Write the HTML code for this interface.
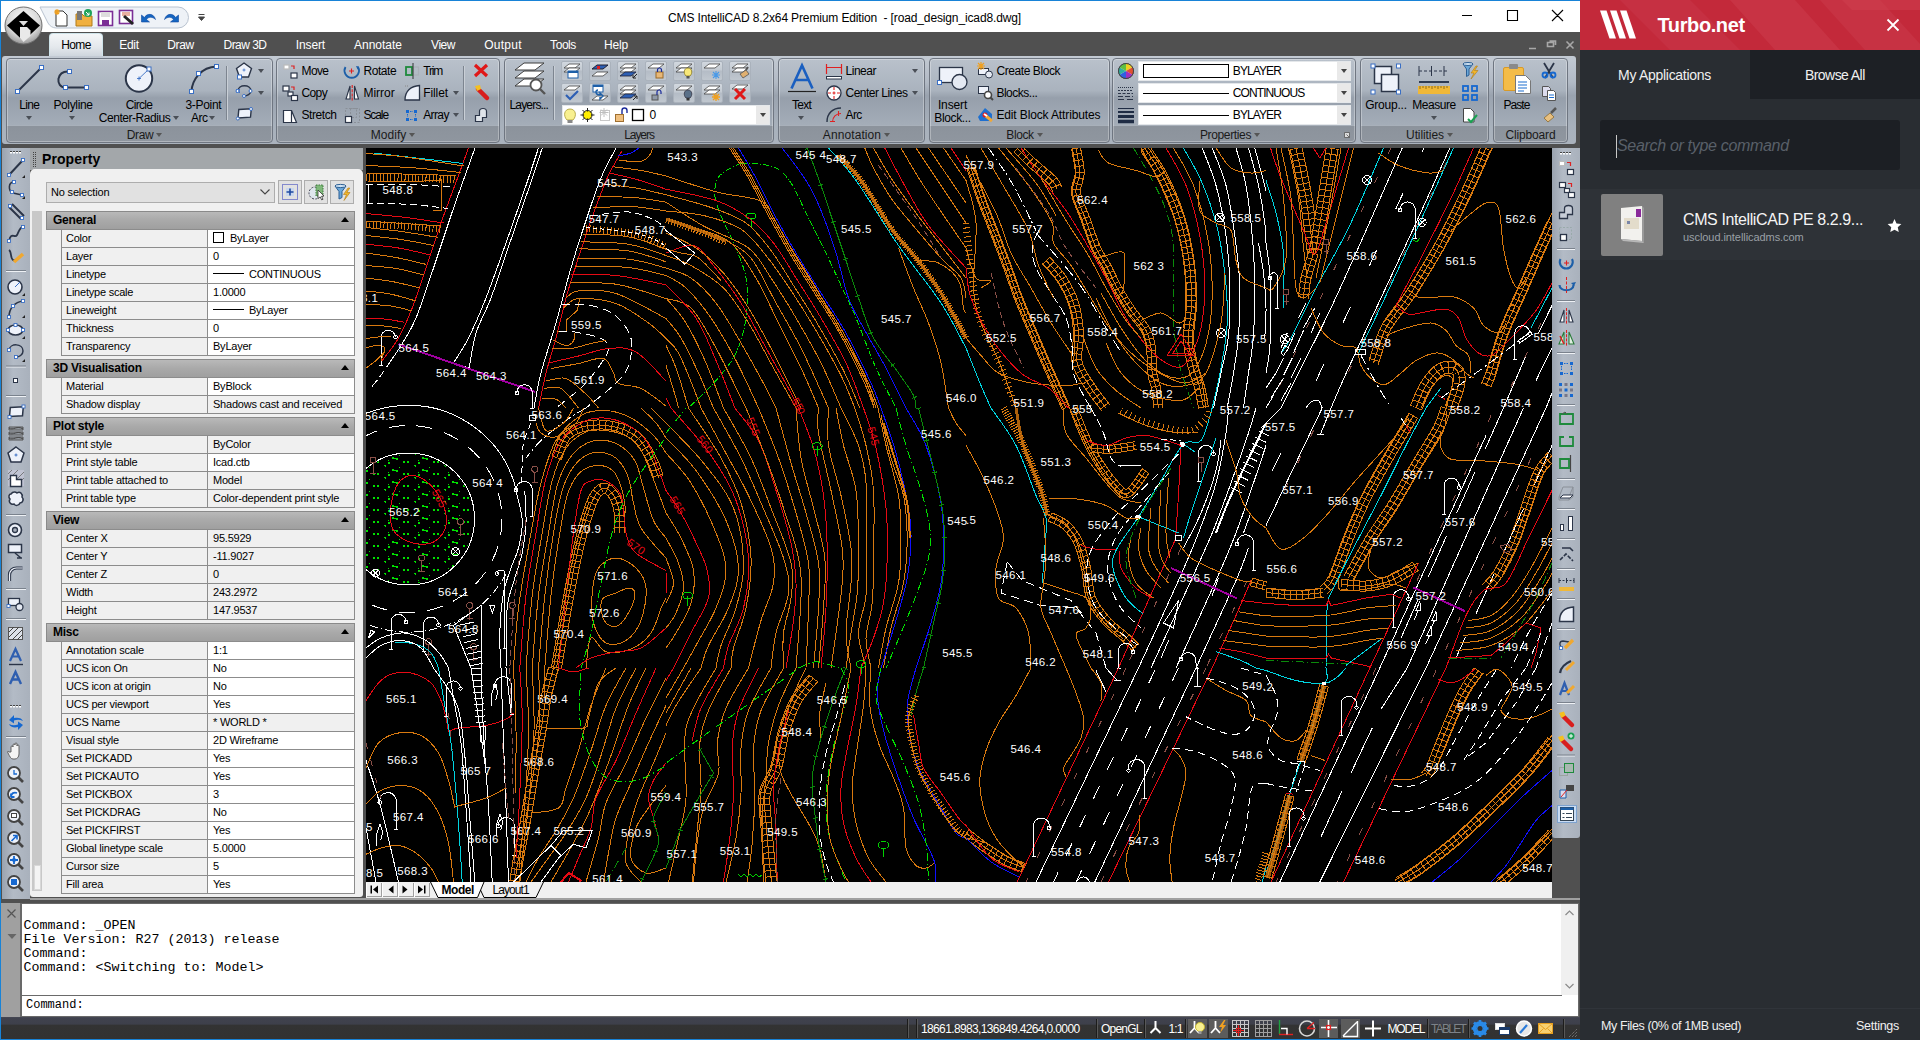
<!DOCTYPE html>
<html><head><meta charset="utf-8"><title>CMS IntelliCAD</title>
<style>
*{box-sizing:border-box;margin:0;padding:0}
html,body{width:1920px;height:1040px;overflow:hidden;background:#505050;font-family:"Liberation Sans",sans-serif;font-size:12px;color:#000}
div,span{position:absolute}
svg{position:absolute;overflow:visible}
#app{left:0;top:0;width:1580px;height:1040px;background:#505050;overflow:hidden}
#title{left:0;top:0;width:1580px;height:32px;background:#fff}
#title .t{left:668px;top:11px;font-size:12px;white-space:pre;line-height:14px;letter-spacing:-0.133px}
#menubar{left:0;top:32px;width:1580px;height:24px;background:#505050}
#menubar span{top:6px;color:#fff;font-size:12px;transform:translateX(-50%);white-space:nowrap;line-height:14px}
#hometab{left:49px;top:33px;width:54px;height:23px;border-radius:4px 4px 0 0;background:linear-gradient(#f4f6f8,#e4e8ec 60%,#cfd6dd);border:1px solid #cfe4ea;border-bottom:none}
#ribbon{left:2px;top:56px;width:1574px;height:88px;border-radius:3px;background:linear-gradient(#c3cad3 0%,#b2bac5 30%,#9aa3af 45%,#a8b1bc 80%,#abb3bd 100%)}
.grp{top:58px;height:85px;border:1px solid #6f7681;border-radius:4px;background:linear-gradient(#b9c1cb 0%,#aab3be 38%,#969fab 47%,#a4adb8 79%,#a9b1bb 80.5%,#8c939c 81%,#8f969f 100%);box-shadow:inset 0 0 0 1px rgba(255,255,255,.3)}
.grp .gl{left:0;right:0;top:69px;height:15px;text-align:center;font-size:12px;color:#1a1a1a;line-height:15px;white-space:nowrap}
.gl i{display:inline-block;width:0;height:0;border:3.5px solid transparent;border-top:4px solid #555;border-bottom:none;margin-left:3px;margin-right:-10px;vertical-align:2px}
.rt{font-size:12px;color:#000;white-space:nowrap;line-height:14px}
.rtc{font-size:12px;color:#000;white-space:nowrap;line-height:14px;transform:translateX(-50%);text-align:center}
.dd{width:0;height:0;border:3.5px solid transparent;border-top:4px solid #4a4f57;border-bottom:none}
</style></head><body>
<div id="app">
<div id="title"><div class="t">CMS IntelliCAD 8.2x64 Premium Edition  - [road_design_icad8.dwg]</div></div>
<div id="menubar"><span style="left:129px;letter-spacing:-0.322px;">Edit</span><span style="left:180.6px;letter-spacing:-0.329px;">Draw</span><span style="left:245px;letter-spacing:-0.527px;">Draw 3D</span><span style="left:310.4px;letter-spacing:-0.136px;">Insert</span><span style="left:378px;letter-spacing:-0.006px;">Annotate</span><span style="left:443px;letter-spacing:-0.499px;">View</span><span style="left:503px;letter-spacing:0.245px;">Output</span><span style="left:563px;letter-spacing:-0.443px;">Tools</span><span style="left:616px;letter-spacing:-0.222px;">Help</span></div>
<div id="hometab"></div><div class="rtc" style="left:76px;top:38px;letter-spacing:-0.679px;">Home</div>
<div id="ribbon"></div>
<div class="grp" style="left:6px;width:267px"><div class="gl"><b style="font-weight:normal;letter-spacing:-0.329px;">Draw</b><i></i></div></div>
<div class="grp" style="left:276px;width:224px"><div class="gl"><b style="font-weight:normal;letter-spacing:0.059px;">Modify</b><i></i></div></div>
<div class="grp" style="left:504px;width:270px"><div class="gl"><b style="font-weight:normal;letter-spacing:-1.055px;">Layers</b></div></div>
<div class="grp" style="left:778px;width:147px"><div class="gl"><b style="font-weight:normal;letter-spacing:0.091px;">Annotation</b><i></i></div></div>
<div class="grp" style="left:929px;width:181px"><div class="gl"><b style="font-weight:normal;letter-spacing:-0.389px;">Block</b><i></i></div></div>
<div class="grp" style="left:1112px;width:244px"><div class="gl" style="left:-18px"><b style="font-weight:normal;letter-spacing:-0.350px;">Properties</b><i></i></div></div>
<div class="grp" style="left:1360px;width:129px"><div class="gl"><b style="font-weight:normal;letter-spacing:-0.086px;">Utilities</b><i></i></div></div>
<div class="grp" style="left:1493px;width:75px"><div class="gl"><b style="font-weight:normal;letter-spacing:-0.153px;">Clipboard</b></div></div>
<div class="rtc" style="left:29.2px;top:98px;letter-spacing:-0.672px;">Line</div>
<div class="dd" style="left:26.0px;top:116px"></div>
<div class="rtc" style="left:73px;top:98px;letter-spacing:-0.354px;">Polyline</div>
<div class="dd" style="left:69.0px;top:116px"></div>
<div class="rtc" style="left:139px;top:98px;letter-spacing:-0.712px;">Circle</div>
<div class="rtc" style="left:134.5px;top:111px;letter-spacing:-0.460px;">Center-Radius</div>
<div class="dd" style="left:173.0px;top:116px"></div>
<div class="rtc" style="left:203.4px;top:98px;letter-spacing:-0.290px;">3-Point</div>
<div class="rtc" style="left:199.2px;top:111px;letter-spacing:-0.567px;">Arc</div>
<div class="dd" style="left:209.0px;top:116px"></div>
<div class="dd" style="left:258.0px;top:69px"></div>
<div class="dd" style="left:258.0px;top:91px"></div>
<div class="rt" style="left:301.5px;top:64px;letter-spacing:-0.611px;">Move</div>
<div class="rt" style="left:363.4px;top:64px;letter-spacing:-0.410px;">Rotate</div>
<div class="rt" style="left:423.2px;top:64px;letter-spacing:-1.137px;">Trim</div>
<div class="rt" style="left:301.5px;top:86px;letter-spacing:-0.629px;">Copy</div>
<div class="rt" style="left:363.4px;top:86px;letter-spacing:0.012px;">Mirror</div>
<div class="rt" style="left:423.2px;top:86px;letter-spacing:-0.091px;">Fillet</div>
<div class="rt" style="left:301.5px;top:108px;letter-spacing:-0.431px;">Stretch</div>
<div class="rt" style="left:363.4px;top:108px;letter-spacing:-1.086px;">Scale</div>
<div class="rt" style="left:423.2px;top:108px;letter-spacing:-0.614px;">Array</div>
<div class="dd" style="left:453.0px;top:91px"></div>
<div class="dd" style="left:453.0px;top:113px"></div>
<div class="rtc" style="left:528.8px;top:98px;letter-spacing:-0.826px;">Layers...</div>
<div class="rtc" style="left:801.5px;top:98px;letter-spacing:-0.729px;">Text</div>
<div class="dd" style="left:798.0px;top:116px"></div>
<div class="rt" style="left:845.5px;top:64px;letter-spacing:-0.477px;">Linear</div>
<div class="rt" style="left:845.5px;top:86px;letter-spacing:-0.504px;">Center Lines</div>
<div class="rt" style="left:845.5px;top:108px;letter-spacing:-0.567px;">Arc</div>
<div class="dd" style="left:912.0px;top:69px"></div>
<div class="dd" style="left:912.0px;top:91px"></div>
<div class="rtc" style="left:952.5px;top:98px;letter-spacing:-0.136px;">Insert</div>
<div class="rtc" style="left:952.5px;top:111px;letter-spacing:-0.382px;">Block...</div>
<div class="rt" style="left:996.4px;top:64px;letter-spacing:-0.417px;">Create Block</div>
<div class="rt" style="left:996.4px;top:86px;letter-spacing:-0.484px;">Blocks...</div>
<div class="rt" style="left:996.4px;top:108px;letter-spacing:-0.129px;">Edit Block Attributes</div>
<div class="rtc" style="left:1386px;top:98px;letter-spacing:-0.220px;">Group...</div>
<div class="rtc" style="left:1434px;top:98px;letter-spacing:-0.484px;">Measure</div>
<div class="dd" style="left:1430.5px;top:116px"></div>
<div class="rtc" style="left:1516.4px;top:98px;letter-spacing:-0.938px;">Paste</div>
<div style="left:1138px;top:61px;width:213px;height:20px;background:#fff;border:1px solid #e4e7ea"></div><div style="left:1337px;top:62px;width:13px;height:18px;background:#e9e9e9"></div><div class="dd" style="left:1340.5px;top:69px;border-top-color:#444"></div>
<div class="rt" style="left:1232.8px;top:64px;letter-spacing:-0.896px;">BYLAYER</div>
<div style="left:1138px;top:83px;width:213px;height:20px;background:#fff;border:1px solid #e4e7ea"></div><div style="left:1337px;top:84px;width:13px;height:18px;background:#e9e9e9"></div><div class="dd" style="left:1340.5px;top:91px;border-top-color:#444"></div>
<div class="rt" style="left:1232.8px;top:86px;letter-spacing:-0.907px;">CONTINUOUS</div>
<div style="left:1138px;top:105px;width:213px;height:20px;background:#fff;border:1px solid #e4e7ea"></div><div style="left:1337px;top:106px;width:13px;height:18px;background:#e9e9e9"></div><div class="dd" style="left:1340.5px;top:113px;border-top-color:#444"></div>
<div class="rt" style="left:1232.8px;top:108px;letter-spacing:-0.896px;">BYLAYER</div>
<div style="left:1143px;top:64px;width:86px;height:14px;border:1px solid #000;background:#fff"></div><div style="left:1143px;top:93px;width:86px;height:1px;background:#000"></div><div style="left:1143px;top:115px;width:86px;height:1px;background:#000"></div>
<div style="left:562px;top:105px;width:208px;height:20px;background:#fff;border:1px solid #e4e7ea"></div><div style="left:756px;top:106px;width:13px;height:18px;background:#e9e9e9"></div><div class="dd" style="left:759.5px;top:113px;border-top-color:#444"></div><div class="rt" style="left:649.5px;top:108px">0</div>
<div style="left:561px;top:61px;width:22px;height:20px;border-radius:2px;background:linear-gradient(#d2d8df,#c3cad2 45%,#b4bcc6 50%,#c0c7cf);border:1px solid #aab2bc"></div><div style="left:589px;top:61px;width:22px;height:20px;border-radius:2px;background:linear-gradient(#d2d8df,#c3cad2 45%,#b4bcc6 50%,#c0c7cf);border:1px solid #aab2bc"></div><div style="left:617px;top:61px;width:22px;height:20px;border-radius:2px;background:linear-gradient(#d2d8df,#c3cad2 45%,#b4bcc6 50%,#c0c7cf);border:1px solid #aab2bc"></div><div style="left:645px;top:61px;width:22px;height:20px;border-radius:2px;background:linear-gradient(#d2d8df,#c3cad2 45%,#b4bcc6 50%,#c0c7cf);border:1px solid #aab2bc"></div><div style="left:673px;top:61px;width:22px;height:20px;border-radius:2px;background:linear-gradient(#d2d8df,#c3cad2 45%,#b4bcc6 50%,#c0c7cf);border:1px solid #aab2bc"></div><div style="left:701px;top:61px;width:22px;height:20px;border-radius:2px;background:linear-gradient(#d2d8df,#c3cad2 45%,#b4bcc6 50%,#c0c7cf);border:1px solid #aab2bc"></div><div style="left:729px;top:61px;width:22px;height:20px;border-radius:2px;background:linear-gradient(#d2d8df,#c3cad2 45%,#b4bcc6 50%,#c0c7cf);border:1px solid #aab2bc"></div><div style="left:561px;top:83px;width:22px;height:20px;border-radius:2px;background:linear-gradient(#d2d8df,#c3cad2 45%,#b4bcc6 50%,#c0c7cf);border:1px solid #aab2bc"></div><div style="left:589px;top:83px;width:22px;height:20px;border-radius:2px;background:linear-gradient(#d2d8df,#c3cad2 45%,#b4bcc6 50%,#c0c7cf);border:1px solid #aab2bc"></div><div style="left:617px;top:83px;width:22px;height:20px;border-radius:2px;background:linear-gradient(#d2d8df,#c3cad2 45%,#b4bcc6 50%,#c0c7cf);border:1px solid #aab2bc"></div><div style="left:645px;top:83px;width:22px;height:20px;border-radius:2px;background:linear-gradient(#d2d8df,#c3cad2 45%,#b4bcc6 50%,#c0c7cf);border:1px solid #aab2bc"></div><div style="left:673px;top:83px;width:22px;height:20px;border-radius:2px;background:linear-gradient(#d2d8df,#c3cad2 45%,#b4bcc6 50%,#c0c7cf);border:1px solid #aab2bc"></div><div style="left:701px;top:83px;width:22px;height:20px;border-radius:2px;background:linear-gradient(#d2d8df,#c3cad2 45%,#b4bcc6 50%,#c0c7cf);border:1px solid #aab2bc"></div><div style="left:729px;top:83px;width:22px;height:20px;border-radius:2px;background:linear-gradient(#d2d8df,#c3cad2 45%,#b4bcc6 50%,#c0c7cf);border:1px solid #aab2bc"></div>
<svg style="left:0;top:0" width="1580" height="146" viewBox="0 0 1580 146" id="ribsvg">
<defs>
<radialGradient id="orb" cx=".5" cy=".35" r=".7"><stop offset="0" stop-color="#fff"/><stop offset=".6" stop-color="#d8d8d8"/><stop offset="1" stop-color="#8a8a8a"/></radialGradient>
<g id="sq"><rect x="-2" y="-2" width="4" height="4" fill="#fff" stroke="#3a6fc4" stroke-width="1"/></g>
<g id="ly"><path d="M-8 2l5-4h11l-5 4z" fill="#fff" stroke="#444" stroke-width=".8"/></g>
</defs>
<!-- app orb -->
<circle cx="23.5" cy="25.5" r="18.5" fill="url(#orb)" stroke="#6e6e6e"/>
<polygon points="23.5,11 40,25.5 23.5,41 7,25.5" fill="#000"/><polygon points="20,27 27,27 30.5,30.5 30.5,36 23.5,42 20,38" fill="#e9e9e9"/><polygon points="19,21 28,21 23.5,26" fill="#e0e0e0"/>
<!-- quick access pill -->
<path d="M40 7h138a10.500 10.500 0 0 1 0 21H56a10 10 0 0 1-8-5z" fill="#eef2f7" stroke="#b9c3d0"/>
<g><path d="M56 11h7l4 4v11H56z" fill="#fff" stroke="#333"/><path d="M57 9v6M54 12h6M55 10l4 4M59 10l-4 4" stroke="#f0a020" stroke-width="1.2"/></g>
<g><path d="M76 14h6l2 2h8v10H76z" fill="#f0b040" stroke="#b07a18"/><rect x="77" y="11" width="5" height="9" fill="#777"/><circle cx="88" cy="13" r="4" fill="#1fa35a"/><path d="M86 12l3 3M89 12.500v2.500h-2.500" stroke="#fff" stroke-width="1" fill="none"/></g>
<g><rect x="98.500" y="11.500" width="14" height="14" fill="#fff" stroke="#7b2f96" stroke-width="1.600"/><rect x="101" y="12" width="9" height="5" fill="#ddd"/><rect x="102" y="20" width="7" height="5" fill="#7b2f96"/></g>
<g><rect x="119.500" y="10.500" width="13" height="13" fill="#fff" stroke="#7b2f96" stroke-width="1.600"/><rect x="122" y="12" width="8" height="4" fill="#e8b0a0"/><path d="M124 16l9 8" stroke="#222" stroke-width="3"/></g>
<path d="M142 24v-7l3 2.500c2-4 9-5 11 2-3-3-7-3-9 0l3 2.500z" fill="#1565c0" stroke="#0d47a1" stroke-width=".6" transform="translate(-0.5,-2)"/>
<path d="M178 24v-7l-3 2.500c-2-4-9-5-11 2 3-3 7-3 9 0l-3 2.500z" fill="#1565c0" stroke="#0d47a1" stroke-width=".6" transform="translate(0.5,-2)"/>
<path d="M198.500 14.500h6M198.500 17h6l-3 3.500z" stroke="#444" fill="#444" stroke-width="1"/>
<!-- window controls -->
<path d="M1462 15.500h10M1507.500 10.500h10v10h-10zM1552 10l11 11M1563 10l-11 11" stroke="#000" stroke-width="1.100" fill="none"/>
<path d="M1529 48.500h7M1547.500 42.500h6v4h-6zM1549.500 41h6v4M1566.500 41.500l7 7M1573.500 41.500l-7 7" stroke="#a8a8a8" stroke-width="1.600" fill="none"/>
<!-- Draw group -->
<path d="M17.500 91.500L41.500 67.500" stroke="#2b3548" stroke-width="2"/><use href="#sq" x="17.500" y="91.500"/><use href="#sq" x="41.500" y="67.500"/>
<path d="M69 71.500C56 70 55 87.500 65.500 87.500H86" stroke="#2b3548" stroke-width="2" fill="none"/><use href="#sq" x="69.500" y="71.500"/><use href="#sq" x="65.500" y="87.500"/><use href="#sq" x="86.500" y="87.500"/>
<circle cx="139" cy="78.500" r="13.200" fill="#eef2fa" stroke="#2b3548" stroke-width="2"/><path d="M139 78.500L149 69M137 78.500h4M139 76.500v4" stroke="#3a6fc4" stroke-width=".9"/><use href="#sq" x="149" y="69"/>
<path d="M191.500 91.500C192 80 201 67 216.500 66.500" stroke="#2b3548" stroke-width="2" fill="none"/><use href="#sq" x="191.500" y="91.500"/><use href="#sq" x="198.500" y="73.500"/><use href="#sq" x="216.500" y="66.500"/>
<path d="M226.500 66v54M463.500 66v54M553.500 66v54" stroke="#7d8590"/><path d="M227.500 66v54M464.500 66v54M554.500 66v54" stroke="#c9cfd6"/>
<path d="M244 63l7.500 5.500-3 8.500h-9l-3-8.500z" fill="#eef2fa" stroke="#2b3548" stroke-width="1.400"/><path d="M242.500 70h3M244 68.500v3" stroke="#3a6fc4" stroke-width=".8"/><use href="#sq" x="239.500" y="77"/>
<path d="M238 91c0-7 13-7 13 0c0 3-4 5-7 5" fill="none" stroke="#2b3548" stroke-width="1.400"/><use href="#sq" x="238" y="91" transform="translate(47.600,18.200) scale(.8)"/><circle cx="237.500" cy="91" r="1.500" fill="#fff" stroke="#3a6fc4"/><circle cx="250.500" cy="91" r="1.500" fill="#fff" stroke="#3a6fc4"/><circle cx="244" cy="96" r="1.500" fill="#fff" stroke="#3a6fc4"/>
<path d="M238 118l.8-8.500 12.500-.8-.8 8.500z" fill="#eef2fa" stroke="#2b3548" stroke-width="1.400"/><circle cx="237.800" cy="118.500" r="1.500" fill="#fff" stroke="#3a6fc4"/><circle cx="251" cy="109" r="1.500" fill="#fff" stroke="#3a6fc4"/>
<!-- Modify group -->
<g stroke="#2b3548" stroke-width="1.200" fill="#fff"><rect x="284" y="65" width="5" height="4" stroke="#bbb"/><rect x="291" y="73" width="6" height="5"/><path d="M291 66h3v3" stroke="#d22" fill="none"/>
<rect x="283" y="86" width="6" height="5"/><rect x="288" y="92" width="5" height="4"/><rect x="291.500" y="95.500" width="6" height="5"/><path d="M291 87h3v3" stroke="#d22" fill="none"/>
<path d="M283.500 110.500h8v12h-8zM291.500 110.500l5 12h-5" /></g>
<path d="M345.500 67a7.200 7.200 0 1 0 12.500 0" fill="none" stroke="#1d5fa8" stroke-width="1.800"/><path d="M349 71h5M351.500 68.500v5" stroke="#e02020" stroke-width="1.100"/><path d="M356 66l3 .5-1.500 3z" fill="#1d5fa8"/>
<path d="M350 86l-4 13h4zM354.500 86l4 13h-4z" fill="#fff" stroke="#2b3548" stroke-width="1.100"/><path d="M352.200 85v16" stroke="#e02020" stroke-dasharray="3 1.200" stroke-width="1.100"/>
<rect x="345.500" y="108.500" width="14" height="14" fill="none" stroke="#8a9098" stroke-dasharray="2 1.500"/><rect x="350.500" y="108.500" width="6" height="9" fill="none" stroke="#8a9098" stroke-dasharray="2 1.500"/><rect x="345.500" y="116.500" width="6" height="6" fill="#fff" stroke="#2b3548" stroke-width="1.200"/>
<rect x="406" y="67" width="6" height="8" fill="none" stroke="#1e8a3c" stroke-width="1.800"/><rect x="413.500" y="67" width="5" height="8" fill="none" stroke="#aab0b8" stroke-width="1.200"/><path d="M413 63v16" stroke="#333" stroke-width="1"/>
<path d="M405 100c0-9 6-14 14.500-14.500v14.500z" fill="#eef2fa" stroke="#2b3548" stroke-width="1.300"/><path d="M405 86h3" stroke="#888" stroke-dasharray="1 1"/>
<g fill="#1668d0"><rect x="406" y="110" width="3" height="3"/><rect x="414" y="110" width="3" height="3"/><rect x="406" y="118" width="3" height="3"/><rect x="414" y="118" width="3" height="3"/></g><path d="M410 111.500h3M410 119.500h3M407.500 114v3M415.500 114v3" stroke="#1668d0" stroke-dasharray="1.500 1"/>
<path d="M475 65l12 11M487 65l-12 11" stroke="#e01818" stroke-width="3.200"/>
<path d="M478 89l9 9" stroke="#d81e1e" stroke-width="4.500" stroke-linecap="round"/><path d="M475 86l5-1 1 4-4 2z" fill="#f4c020"/>
<path d="M475.500 121.500v-6h4v-4c0-4 7-4 7 0v6h-4v4z" fill="#dfe4ea" stroke="#2b3548" stroke-width="1.200"/>
<!-- Layers big -->
<g stroke="#3c3c3c" stroke-width="1" fill="#fff"><path d="M515 86l9-7h20l-9 7z"/><path d="M515 78l9-7h20l-9 7z"/><path d="M515 70l9-7h20l-9 7z"/></g><circle cx="536" cy="85" r="5.500" fill="#fff" stroke="#555" stroke-width="1.800"/><path d="M540 89l5 5" stroke="#555" stroke-width="2.400"/>
<!-- layer buttons icons -->
<g id="lb">
<g transform="translate(572,71)"><use href="#ly" y="-5"/><use href="#ly" y="-1"/><rect x="-4" y="0" width="10" height="7" fill="#fff" stroke="#1d5fa8"/><rect x="-4" y="0" width="10" height="2" fill="#1d5fa8"/></g>
<g transform="translate(600,71)"><use href="#ly" y="3"/><path d="M-8 -2l5-4h11l-5 4z" fill="#2d5fb4" stroke="#223"/><rect x="-3" y="-5" width="3" height="3" fill="#e02020"/></g>
<g transform="translate(628,71)"><use href="#ly" y="-5"/><use href="#ly" y="-1"/><path d="M-8 5l5-4h11l-5 4z" fill="#2d5fb4" stroke="#223" stroke-width=".8"/><path d="M9 3l-4 4M5 4v3h3" stroke="#222" fill="none"/></g>
<g transform="translate(656,71)"><use href="#ly" y="-5"/><rect x="0" y="1" width="7" height="6" fill="#e8b878" stroke="#9a6a28"/><path d="M1.500 1v-2a2 2 0 0 1 4 0v2" fill="none" stroke="#1a2a9a" stroke-width="1.200"/></g>
<g transform="translate(684,71)"><use href="#ly" y="-5"/><use href="#ly" y="-1"/><path d="M2 5c-3-3-2-8 2-8s5 5 2 8z" fill="#f8e878" stroke="#8a7a20" stroke-width=".8"/><rect x="2.500" y="5" width="3" height="2.500" fill="#555"/></g>
<g transform="translate(712,71)"><use href="#ly" y="-5"/><path d="M4 0v8M0 4h8M1 1l6 6M7 1l-6 6" stroke="#4a9ae8" stroke-width="1.100"/></g>
<g transform="translate(740,71)"><use href="#ly" y="-5"/><use href="#ly" y="-1"/><path d="M0 3l6-4 3 4-6 4z" fill="#e0b070" stroke="#555" stroke-width=".8"/><path d="M6-1l2-3" stroke="#555" stroke-width="2"/></g>
<g transform="translate(572,93)"><use href="#ly" y="-5"/><path d="M-6 2l4 4 8-8" fill="none" stroke="#2d5fb4" stroke-width="2.200"/></g>
<g transform="translate(600,93)"><use href="#ly" y="5"/><rect x="-7" y="-8" width="10" height="7" fill="#fff" stroke="#1d5fa8"/><rect x="-7" y="-8" width="10" height="2" fill="#1d5fa8"/><path d="M-2 -3c-3 0-3 5 2 5v-2l3 3-3 3v-2" fill="none" stroke="#1d5fa8" stroke-width="1.400"/></g>
<g transform="translate(628,93)"><use href="#ly" y="-5"/><use href="#ly" y="-1"/><path d="M-8 5l5-4h11l-5 4z" fill="#2d5fb4" stroke="#223" stroke-width=".8"/><path d="M5 7l4-4M6 3h3v3" stroke="#222" fill="none"/></g>
<g transform="translate(656,93)"><use href="#ly" y="-5"/><rect x="-4" y="2" width="6" height="5" fill="#909aa8" stroke="#555"/><path d="M1 2v-3a2 2 0 0 1 4 0v2" fill="none" stroke="#1a2a9a" stroke-width="1.200"/></g>
<g transform="translate(684,93)"><use href="#ly" y="-5"/><path d="M2 5c-3-3-2-8 2-8s5 5 2 8z" fill="#5a7088" stroke="#334" stroke-width=".8"/><rect x="2.500" y="5" width="3" height="2.500" fill="#333"/></g>
<g transform="translate(712,93)"><use href="#ly" y="-5"/><use href="#ly" y="-1"/><path d="M4 0v8M0 4h8M1 1l6 6M7 1l-6 6" stroke="#f0a020" stroke-width="1.300"/></g>
<g transform="translate(740,93)"><use href="#ly" y="-6"/><path d="M-5 -4l10 10M5 -4l-10 10" stroke="#e01818" stroke-width="3"/></g>
</g>
<!-- layer combo icons -->
<path d="M567 120c-4-4-3-11 3-11s7 7 3 11z" fill="#f8f090" stroke="#a89a30" stroke-width=".8"/><rect x="567.500" y="120" width="5" height="3" fill="#888"/>
<circle cx="587.500" cy="115" r="4.500" fill="#ffee00" stroke="#222"/><path d="M587.500 108v14M580.500 115h14M582.500 110l10 10M592.500 110l-10 10" stroke="#222" stroke-width="1"/><circle cx="587.500" cy="115" r="3.500" fill="#ffee00"/>
<rect x="600.500" y="110.500" width="9" height="10" fill="none" stroke="#c8c8c8"/><path d="M604 108v9M599.500 112.500h9M601 109.500l6 6M607 109.500l-6 6" stroke="#c0c0c0"/>
<rect x="615.500" y="114.500" width="8" height="7" fill="#f0c080" stroke="#a07030"/><path d="M622 114v-3.500a2.500 2.500 0 0 1 5 0v2.500" fill="none" stroke="#1a2a9a" stroke-width="1.400"/>
<rect x="632.500" y="109.500" width="11" height="11" fill="#fff" stroke="#000" stroke-width="1.300"/>
<!-- Annotation -->
<path d="M791.500 88.500l10.500-23 10.500 23M796 80h12.500" fill="none" stroke="#1a5fc0" stroke-width="2.600"/><path d="M788 91.500h28" stroke="#222" stroke-width="1.200"/>
<path d="M826.500 64v10M841.500 64v10M827 67.500h14" stroke="#e02020" stroke-width="1.200" fill="none"/><rect x="826.500" y="76.500" width="15" height="2.500" fill="#fff" stroke="#2b3548"/>
<circle cx="834" cy="93" r="7" fill="#fff" stroke="#2b3548" stroke-width="1.300"/><path d="M828 93h12M834 87v12" stroke="#e02020" stroke-dasharray="3 1.500" stroke-width="1.100"/>
<path d="M827 122c0-9 6-14 14-14" fill="none" stroke="#2b3548" stroke-width="1.400"/><path d="M829.500 122c0-7 5-11.500 11.500-11.500" fill="none" stroke="#9aa" stroke-width="2"/><path d="M832.500 122c0-5 3.500-8.500 8.500-8.500M838.500 111v5M830 121.500h5" fill="none" stroke="#e02020" stroke-width="1.100"/>
<!-- Block -->
<rect x="939.500" y="67.500" width="23" height="15" fill="#eef2fa" stroke="#2b3548" stroke-width="1.300"/><circle cx="959.500" cy="82" r="7.500" fill="#e4e9f2" stroke="#2b3548" stroke-width="1.300"/><use href="#sq" x="939.500" y="82.500"/>
<rect x="978.500" y="68.500" width="10" height="6" fill="#eef2fa" stroke="#2b3548"/><circle cx="989" cy="74.500" r="3.500" fill="#e4e9f2" stroke="#2b3548"/><path d="M981 62v8M977 66h8M978 63l6 6M984 63l-6 6" stroke="#f0a020" stroke-width="1.200"/>
<rect x="978.500" y="86.500" width="10" height="7" fill="#eef2fa" stroke="#2b3548"/><circle cx="988" cy="95" r="3.500" fill="#fff" stroke="#444" stroke-width="1.600"/><path d="M990.500 97.500l2.500 2.500" stroke="#444" stroke-width="2"/>
<path d="M978 117l7-9 7 6v7h-12z" fill="#1d6fd0"/><circle cx="985" cy="115" r="2.500" fill="#e02020"/><path d="M986 116l6 5" stroke="#f0a838" stroke-width="3"/><path d="M984 114l3 2" stroke="#fff" stroke-width="2"/>
<!-- Properties left icons -->
<circle cx="1126" cy="71" r="7.500" fill="#ddd" stroke="#444"/><path d="M1126 71l0-7.500a7.500 7.500 0 0 1 6.500 3.750z" fill="#f0d020"/><path d="M1126 71l6.500-3.750a7.500 7.500 0 0 1 0 7.500z" fill="#e05030"/><path d="M1126 71l6.500 3.750a7.500 7.500 0 0 1-6.500 3.750z" fill="#a030c0"/><path d="M1126 71l0 7.500a7.500 7.500 0 0 1-6.500-3.750z" fill="#3060e0"/><path d="M1126 71l-6.500 3.750a7.500 7.500 0 0 1 0-7.500z" fill="#30b0a0"/><path d="M1126 71l-6.500-3.750a7.500 7.500 0 0 1 6.500-3.750z" fill="#60c040"/><circle cx="1126" cy="71" r="7.500" fill="none" stroke="#444"/>
<path d="M1118 87.500h15" stroke="#2b3548" stroke-dasharray="1 1"/><path d="M1118 90.500h15" stroke="#2b3548" stroke-dasharray="2 1"/><path d="M1118 93.500h15" stroke="#2b3548" stroke-dasharray="3 1.500"/><path d="M1118 96.500h15" stroke="#2b3548" stroke-dasharray="5 2"/><path d="M1118 99.500h15" stroke="#2b3548" stroke-dasharray="6 3"/>
<path d="M1118 108.500h16" stroke="#1f2c44" stroke-width="1"/><path d="M1118 112h16" stroke="#1f2c44" stroke-width="2"/><path d="M1118 116.500h16" stroke="#1f2c44" stroke-width="3"/><path d="M1118 121.500h16" stroke="#1f2c44" stroke-width="3.500"/>
<path d="M1344.500 132.500h5v5h-5zM1346.500 134.500l3 3" stroke="#555" fill="#ddd" stroke-width=".8"/>
<!-- Utilities -->
<rect x="1374.500" y="66.500" width="17" height="17" fill="#eef2fa" stroke="#2b3548" stroke-width="1.500"/><rect x="1381.500" y="74.500" width="17" height="17" fill="#eef2fa" stroke="#2b3548" stroke-width="1.500"/><use href="#sq" x="1373" y="66"/><use href="#sq" x="1398.500" y="66"/><use href="#sq" x="1373" y="92"/><use href="#sq" x="1398.500" y="92"/>
<path d="M1419 66v10M1431.500 66v10M1444 66v10" stroke="#2b3548" stroke-width="1"/><path d="M1419 71h29" stroke="#2b3548" stroke-dasharray="3 2"/><path d="M1419 82h30" stroke="#1f2c44" stroke-width="1.800"/><rect x="1418" y="86" width="32" height="8" fill="#f0b838"/><path d="M1420 86v3M1423 86v2M1426 86v3M1429 86v2M1432 86v3M1435 86v2M1438 86v3M1441 86v2M1444 86v3M1447 86v2" stroke="#7a5a10" stroke-width=".8"/>
<path d="M1463 64h10l-4 5v6l-2.500 1.500v-7.500z" fill="#6aa7d8" stroke="#2d5f94"/><ellipse cx="1468" cy="64" rx="5" ry="1.500" fill="#cfe3f4" stroke="#2d5f94"/><path d="M1476 66l-5 7h3l-3 6 7-8.500h-3.500l3-4.500z" fill="#f2b62a" stroke="#b07a10" stroke-width=".6"/>
<g fill="none" stroke="#1668d0" stroke-width="1.800"><rect x="1463" y="86" width="5" height="5"/><rect x="1472" y="86" width="5" height="5"/><rect x="1463" y="95" width="5" height="5"/><rect x="1472" y="95" width="5" height="5"/></g>
<path d="M1463.500 108.500h7l3.500 3.500v10h-10.500z" fill="#fff" stroke="#444"/><path d="M1468 119l3 3 6-7" fill="none" stroke="#18a050" stroke-width="2"/>
<!-- Clipboard -->
<rect x="1503.500" y="67.500" width="20" height="23" rx="1.500" fill="#f4bc48" stroke="#d89a28"/><rect x="1509" y="64" width="9" height="5" rx="1" fill="#8a8a8a"/><path d="M1515.500 75.500h10l5 5v13h-15z" fill="#fff" stroke="#777"/><path d="M1518 82h9M1518 85h9M1518 88h9M1518 91h6" stroke="#1d6fd0" stroke-width="1.100"/>
<path d="M1544 63l9 15M1554 63l-9 15" stroke="#2b3548" stroke-width="1.800"/><circle cx="1545" cy="75" r="2.500" fill="none" stroke="#1668d0" stroke-width="1.800"/><circle cx="1553" cy="75" r="2.500" fill="none" stroke="#1668d0" stroke-width="1.800"/>
<path d="M1542.500 86.500h6l2 2v8h-8z" fill="#dde" stroke="#555"/><path d="M1547.500 90.500h6l2 2v8h-8z" fill="#fff" stroke="#555"/><path d="M1549 95h5M1549 97.500h5" stroke="#1d6fd0"/>
<path d="M1544 118l6-5 4 4-6 5z" fill="#e8c080" stroke="#8a6a30" stroke-width=".8"/><path d="M1551 113l5-5" stroke="#555" stroke-width="2.500"/>
</svg>
<div style="left:2px;top:148px;width:28px;height:751px;background:linear-gradient(90deg,#9aa3af,#b3bbc6 40%,#a9b1bc)"></div>
<svg style="left:0;top:0" width="32" height="900" viewBox="0 0 32 900"><path d="M10 152.5h12" stroke="#fff" stroke-dasharray="2 1" stroke-width="2"/><path d="M10 151.500h12" stroke="#444" stroke-dasharray="2 1" stroke-width="1"/>
<path d="M9 175L23 160" stroke="#2b3548" stroke-width="2"/><rect x="7.5" y="173.5" width="3" height="3" fill="#fff" stroke="#3a6fc4" stroke-width=".9"/><rect x="21.5" y="158.5" width="3" height="3" fill="#fff" stroke="#3a6fc4" stroke-width=".9"/><path d="M22 178l3 0 0-3z" fill="#222"/>
<path d="M14 182c-6 0-6 9-1 11l9 2" fill="none" stroke="#2b3548" stroke-width="1.6"/><rect x="12.5" y="180.5" width="3" height="3" fill="#fff" stroke="#3a6fc4" stroke-width=".9"/><rect x="10.5" y="190.5" width="3" height="3" fill="#fff" stroke="#3a6fc4" stroke-width=".9"/><rect x="20.5" y="193.5" width="3" height="3" fill="#fff" stroke="#3a6fc4" stroke-width=".9"/><path d="M22 199l3 0 0-3z" fill="#222"/>
<path d="M9 207l12 12M12 204l12 12" stroke="#2b3548" stroke-width="2"/><rect x="8.5" y="204.5" width="3" height="3" fill="#fff" stroke="#3a6fc4" stroke-width=".9"/><rect x="20.5" y="216.5" width="3" height="3" fill="#fff" stroke="#3a6fc4" stroke-width=".9"/>
<path d="M9 241c2-10 6-2 8-6s3-8 6-8" fill="none" stroke="#2b3548" stroke-width="1.8"/><rect x="7.5" y="239.5" width="3" height="3" fill="#fff" stroke="#3a6fc4" stroke-width=".9"/><rect x="21.5" y="225.5" width="3" height="3" fill="#fff" stroke="#3a6fc4" stroke-width=".9"/>
<path d="M9 250c3 2 1 8 4 10s4-2 6-2" fill="none" stroke="#2b3548" stroke-width="1.8"/><path d="M14 262l9-8" stroke="#f0a830" stroke-width="3.5"/>
<path d="M6 271.5h20" stroke="#eef1f5"/><path d="M6 270.5h20" stroke="#7a828d"/>
<circle cx="15" cy="287" r="7" fill="#eef2fa" stroke="#2b3548" stroke-width="1.6"/><path d="M15 287l5-5" stroke="#3a6fc4"/><path d="M22 296l3 0 0-3z" fill="#222"/>
<path d="M9 317c0-9 6-15 14-16" fill="none" stroke="#2b3548" stroke-width="1.6"/><rect x="7.5" y="315.5" width="3" height="3" fill="#fff" stroke="#3a6fc4" stroke-width=".9"/><rect x="11.5" y="304.5" width="3" height="3" fill="#fff" stroke="#3a6fc4" stroke-width=".9"/><rect x="21.5" y="299.5" width="3" height="3" fill="#fff" stroke="#3a6fc4" stroke-width=".9"/><path d="M22 318l3 0 0-3z" fill="#222"/>
<ellipse cx="15.5" cy="330" rx="7.5" ry="5" fill="#eef2fa" stroke="#2b3548" stroke-width="1.6"/><rect x="6.5" y="328.5" width="3" height="3" fill="#fff" stroke="#3a6fc4" stroke-width=".9"/><rect x="21.5" y="328.5" width="3" height="3" fill="#fff" stroke="#3a6fc4" stroke-width=".9"/><rect x="14.0" y="323.5" width="3" height="3" fill="#fff" stroke="#3a6fc4" stroke-width=".9"/><path d="M22 339l3 0 0-3z" fill="#222"/>
<path d="M9 350c1-7 14-7 14 1c0 4-4 6-7 6" fill="none" stroke="#2b3548" stroke-width="1.5"/><rect x="7.5" y="348.5" width="3" height="3" fill="#fff" stroke="#3a6fc4" stroke-width=".9"/><rect x="14.5" y="355.5" width="3" height="3" fill="#fff" stroke="#3a6fc4" stroke-width=".9"/><path d="M22 362l3 0 0-3z" fill="#222"/>
<path d="M6 367.0h20" stroke="#eef1f5"/><path d="M6 366.0h20" stroke="#7a828d"/>
<rect x="13.5" y="378.500" width="4" height="4" fill="#fff" stroke="#2b3548"/>
<path d="M6 396.5h20" stroke="#eef1f5"/><path d="M6 395.5h20" stroke="#7a828d"/>
<path d="M9.5 416.5l.8-9 13-.8-.8 9z" fill="#eef2fa" stroke="#2b3548" stroke-width="1.5"/><rect x="8.0" y="415.5" width="3" height="3" fill="#fff" stroke="#3a6fc4" stroke-width=".9"/><rect x="22.0" y="405.0" width="3" height="3" fill="#fff" stroke="#3a6fc4" stroke-width=".9"/>
<g stroke="#555" fill="#9aa0a8"><path d="M9 427h14v3H9zM9 432h14v3H9zM9 437h14v3H9z"/></g><path d="M9 428c4 3 8-3 14 1M9 433c4 3 8-3 14 1M9 438c4 3 8-3 14 1" stroke="#444" fill="none"/>
<path d="M16 447l8 6-3 9h-10l-3-9z" fill="#eef2fa" stroke="#2b3548" stroke-width="1.5"/><path d="M14.500 455h3M16 453.500v3" stroke="#3a6fc4"/>
<rect x="8" y="470" width="16" height="16" fill="#ccd" opacity=".6"/><path d="M8 474l4-4M8 480l10-10M10 486l14-14M16 486l8-8" stroke="#666" stroke-width=".8"/><path d="M10.500 475.500h6v4h5v7h-11z" fill="#fff" stroke="#2b3548" stroke-width="1.400"/>
<path d="M11 494c2-3 5-2 6-1c3-2 6 1 5 4c2 2 1 6-2 6c-1 3-5 3-6 1c-3 1-6-2-4-5c-2-2-1-5 1-5z" fill="#eef2fa" stroke="#2b3548" stroke-width="1.500"/>
<path d="M6 515.5h20" stroke="#eef1f5"/><path d="M6 514.5h20" stroke="#7a828d"/>
<circle cx="15" cy="530" r="6.500" fill="#eef2fa" stroke="#2b3548" stroke-width="1.600"/><circle cx="15" cy="530" r="2.500" fill="#a8b0bc" stroke="#2b3548" stroke-width="1.300"/>
<rect x="8.500" y="544.500" width="13" height="8" fill="#eef2fa" stroke="#2b3548" stroke-width="1.500"/><path d="M15 553l6 5M17 558h5" stroke="#2b3548" stroke-width="1.500" fill="none"/>
<path d="M9.500 581v-6c0-4 3-7 7-7h6" fill="none" stroke="#2b3548" stroke-width="3.200"/><path d="M9.500 581v-6c0-4 3-7 7-7h6" fill="none" stroke="#eef2fa" stroke-width="1.200"/>
<path d="M6 589.5h20" stroke="#eef1f5"/><path d="M6 588.5h20" stroke="#7a828d"/>
<rect x="8.500" y="598.500" width="11" height="7" fill="#eef2fa" stroke="#2b3548" stroke-width="1.300"/><circle cx="19.500" cy="607" r="3.500" fill="#e4e9f2" stroke="#2b3548" stroke-width="1.300"/><rect x="7.0" y="604.5" width="3" height="3" fill="#fff" stroke="#3a6fc4" stroke-width=".9"/>
<path d="M6 619.5h20" stroke="#eef1f5"/><path d="M6 618.5h20" stroke="#7a828d"/>
<rect x="8.500" y="627.500" width="14" height="12" fill="#dde2ea" stroke="#555"/><path d="M9 632l5-5M9 637l10-10M12 640l10-10M17 640l5-5" stroke="#444" stroke-width="1"/>
<path d="M10 661l5.500-12 5.500 12M12.500 656.500h6.500" fill="none" stroke="#2f5fb0" stroke-width="2.200"/><path d="M9 664.500h14" stroke="#2b3548" stroke-width="1.400"/>
<path d="M10 684l5.500-12 5.500 12M12.500 679.500h6.500" fill="none" stroke="#2f5fb0" stroke-width="2.400"/>
<path d="M10 706.500h12" stroke="#fff" stroke-dasharray="2 1" stroke-width="2"/><path d="M10 705.500h12" stroke="#444" stroke-dasharray="2 1" stroke-width="1"/>
<path d="M9 720l5-5v3c4-1 8 0 9 3c-3-1.500-6-1.500-9-.500v3z" fill="#1668d0"/><path d="M23 725l-5 5v-3c-4 1-8 0-9-3c3 1.500 6 1.500 9 .500v-3z" fill="#1668d0"/>
<path d="M6 737.5h20" stroke="#eef1f5"/><path d="M6 736.5h20" stroke="#7a828d"/>
<path d="M11 752v-5c0-1.500 2-1.500 2 0v-2c0-1.500 2-1.500 2 0v-1c0-1.500 2-1.500 2 0v2c0-1.500 2-1.500 2 0v8c0 3-2 5-4 5h-2c-2 0-3-2-5-6c-1-1.500 0-2.500 1-1z" fill="#f4f4f4" stroke="#555" stroke-width=".9"/>
<circle cx="14" cy="773" r="6" fill="#eef2fa" stroke="#444" stroke-width="1.800"/><path d="M18.500 777.5l4.500 4.500" stroke="#444" stroke-width="2.600"/><path d="M14 770v4h3" stroke="#1668d0" stroke-width="1.300" fill="none"/>
<circle cx="14" cy="794" r="6" fill="#eef2fa" stroke="#444" stroke-width="1.800"/><path d="M18.500 798.5l4.500 4.500" stroke="#444" stroke-width="2.600"/><path d="M11 797c0-4 3-5 6-4M11 797v-3.500M11 797h3.500" stroke="#1668d0" stroke-width="1.800" fill="none"/>
<circle cx="14" cy="816" r="6" fill="#eef2fa" stroke="#444" stroke-width="1.800"/><path d="M18.500 820.5l4.500 4.500" stroke="#444" stroke-width="2.600"/><rect x="11.500" y="813.500" width="5" height="4" fill="#fff" stroke="#444"/>
<circle cx="14" cy="838" r="6" fill="#eef2fa" stroke="#444" stroke-width="1.800"/><path d="M18.500 842.5l4.500 4.500" stroke="#444" stroke-width="2.600"/><path d="M11.500 841l5-5M13 835.500h4v4" stroke="#1668d0" stroke-width="1.600" fill="none"/>
<circle cx="14" cy="860" r="6" fill="#eef2fa" stroke="#444" stroke-width="1.800"/><path d="M18.500 864.5l4.500 4.500" stroke="#444" stroke-width="2.600"/><path d="M14 856v8M10 860h8" stroke="#1668d0" stroke-width="1.800"/><circle cx="14" cy="860" r="2" fill="#1668d0"/>
<circle cx="14" cy="882" r="6" fill="#eef2fa" stroke="#444" stroke-width="1.800"/><path d="M18.500 886.5l4.500 4.500" stroke="#444" stroke-width="2.600"/><rect x="11" y="879" width="6" height="6" fill="#1668d0"/></svg>
<style>
#prop{left:30px;top:148px;width:335px;height:751px;background:#505050}
#prop .hd{left:0;top:0;width:333px;height:22px;background:#a3a7aa}
#prop .bd{left:0;top:21px;width:333px;height:728px;background:#f0f0f0;border-radius:5px 5px 3px 3px}
.ph{left:16px;width:309px;height:19px;background:linear-gradient(#b9b9b9,#a9a9a9 50%,#9f9f9f);border:1px solid #8a8a8a;font-weight:bold;font-size:12px;line-height:17px;padding-left:6px;letter-spacing:-0.23px;white-space:nowrap}
.ph b{position:absolute;right:5px;top:5px;width:0;height:0;border:4px solid transparent;border-bottom:5px solid #000;border-top:none}
.pr{left:31px;width:294px;height:19px;border:1px solid #8c8c8c;background:#f0f0f0;font-size:11px;line-height:17px;letter-spacing:-0.22px;white-space:nowrap}
.pr span{left:4px;top:0}
.pr em{position:absolute;left:145px;top:0;width:147px;height:17px;border-left:1px solid #8c8c8c;font-style:normal;padding-left:5px;overflow:hidden}
.pr em.w{background:#fff}
.ln{display:inline-block;position:relative;width:31px;height:1px;background:#000;vertical-align:4px;margin-right:5px}
.cb{display:inline-block;position:relative;width:11px;height:11px;border:1px solid #000;background:#fff;vertical-align:-1px;margin-right:6px}
</style>
<div id="prop"><div class="hd"></div>
<svg style="left:3px;top:4px" width="4" height="16"><path d="M0.5 0v16M2.5 0v16" stroke="#444" stroke-dasharray="1 1" fill="none"/></svg>
<div style="left:12px;top:3px;font-size:14px;font-weight:bold;line-height:16px;letter-spacing:0.09px" id="ptitle">Property</div>
<div class="bd"></div>
<div style="left:2px;top:63px;width:10px;height:680px;background:#c8c8c8"></div>
<div style="left:4px;top:717px;width:7px;height:25px;background:#f4f4f4;border:1px solid #d8d8d8"></div>
<div style="left:16px;top:34px;width:229px;height:21px;background:#e1e1e1;border:1px solid #adadad;font-size:11px;line-height:19px;padding-left:4px;letter-spacing:-0.18px">No selection</div>
<svg style="left:230px;top:41px" width="10" height="7"><path d="M0.5 0.5l4.5 4.5l4.5-4.5" stroke="#444" fill="none" stroke-width="1.1"/></svg>
<div style="left:248px;top:32px;width:24px;height:24px;background:#e1e1e1;border:1px solid #adadad"></div>
<div style="left:274px;top:32px;width:24px;height:24px;background:#e1e1e1;border:1px solid #adadad"></div>
<div style="left:300px;top:32px;width:24px;height:24px;background:#e1e1e1;border:1px solid #adadad"></div>
<svg style="left:248px;top:32px" width="76" height="24" viewBox="0 0 76 24"><rect x="4.5" y="4.5" width="15" height="15" fill="none" stroke="#2530b8" stroke-dasharray="1 1"/><rect x="8" y="8" width="8" height="8" fill="#c9d7ee"/><path d="M12 8.5v7M8.5 12h7" stroke="#1f4aa0" stroke-width="1.6"/>
<circle cx="37" cy="13" r="6" fill="#dfe6ee" stroke="#445" stroke-dasharray="2 1.4"/><rect x="38" y="5" width="7" height="11" fill="#7fb87a" stroke="#3d7a3d" stroke-dasharray="1.5 1"/><path d="M40 10l6 6-2.5.3 1.5 3-1.3.6-1.5-3-2.2 1.6z" fill="#fff" stroke="#333" stroke-width=".8"/>
<path d="M57 6h11l-4 5.5v6l-3 1.5v-7.5z" fill="#6aa7d8" stroke="#2d5f94"/><ellipse cx="62.5" cy="6" rx="5.5" ry="1.6" fill="#cfe3f4" stroke="#2d5f94"/><path d="M70 8l-4.5 6.5h3l-2.5 6 6-8h-3.2l3-4.5z" fill="#f2b62a" stroke="#b07a10" stroke-width=".6"/></svg>
<div class="ph" style="top:63px">General<b></b></div>
<div class="pr" style="top:81px"><span>Color</span><em class="w"><i class="cb"></i>ByLayer</em></div>
<div class="pr" style="top:99px"><span>Layer</span><em class="w">0</em></div>
<div class="pr" style="top:117px"><span>Linetype</span><em class="w"><i class="ln"></i>CONTINUOUS</em></div>
<div class="pr" style="top:135px"><span>Linetype scale</span><em class="w">1.0000</em></div>
<div class="pr" style="top:153px"><span>Lineweight</span><em class="w"><i class="ln"></i>ByLayer</em></div>
<div class="pr" style="top:171px"><span>Thickness</span><em class="w">0</em></div>
<div class="pr" style="top:189px"><span>Transparency</span><em class="w">ByLayer</em></div>
<div class="ph" style="top:211px">3D Visualisation<b></b></div>
<div class="pr" style="top:229px"><span>Material</span><em class="w">ByBlock</em></div>
<div class="pr" style="top:247px"><span>Shadow display</span><em class="">Shadows cast and received</em></div>
<div class="ph" style="top:269px">Plot style<b></b></div>
<div class="pr" style="top:287px"><span>Print style</span><em class="">ByColor</em></div>
<div class="pr" style="top:305px"><span>Print style table</span><em class="w">Icad.ctb</em></div>
<div class="pr" style="top:323px"><span>Print table attached to</span><em class="">Model</em></div>
<div class="pr" style="top:341px"><span>Print table type</span><em class="">Color-dependent print style</em></div>
<div class="ph" style="top:363px">View<b></b></div>
<div class="pr" style="top:381px"><span>Center X</span><em class="">95.5929</em></div>
<div class="pr" style="top:399px"><span>Center Y</span><em class="">-11.9027</em></div>
<div class="pr" style="top:417px"><span>Center Z</span><em class="">0</em></div>
<div class="pr" style="top:435px"><span>Width</span><em class="">243.2972</em></div>
<div class="pr" style="top:453px"><span>Height</span><em class="">147.9537</em></div>
<div class="ph" style="top:475px">Misc<b></b></div>
<div class="pr" style="top:493px"><span>Annotation scale</span><em class="w">1:1</em></div>
<div class="pr" style="top:511px"><span>UCS icon On</span><em class="w">No</em></div>
<div class="pr" style="top:529px"><span>UCS icon at origin</span><em class="w">No</em></div>
<div class="pr" style="top:547px"><span>UCS per viewport</span><em class="w">Yes</em></div>
<div class="pr" style="top:565px"><span>UCS Name</span><em class="">* WORLD *</em></div>
<div class="pr" style="top:583px"><span>Visual style</span><em class="w">2D Wireframe</em></div>
<div class="pr" style="top:601px"><span>Set PICKADD</span><em class="w">Yes</em></div>
<div class="pr" style="top:619px"><span>Set PICKAUTO</span><em class="w">Yes</em></div>
<div class="pr" style="top:637px"><span>Set PICKBOX</span><em class="w">3</em></div>
<div class="pr" style="top:655px"><span>Set PICKDRAG</span><em class="w">No</em></div>
<div class="pr" style="top:673px"><span>Set PICKFIRST</span><em class="w">Yes</em></div>
<div class="pr" style="top:691px"><span>Global linetype scale</span><em class="w">5.0000</em></div>
<div class="pr" style="top:709px"><span>Cursor size</span><em class="w">5</em></div>
<div class="pr" style="top:727px"><span>Fill area</span><em class="w">Yes</em></div>
</div>
<div id="cv" style="left:366px;top:148px;width:1186px;height:734px;background:#000;overflow:hidden">
<svg style="left:0;top:0" width="1186" height="734" viewBox="366 148 1186 734" font-family="'Liberation Sans',sans-serif" shape-rendering="crispEdges" letter-spacing="0.4">
<path d="M1144.8 148.0C1147.9 153.0 1157.7 166.3 1163.5 178.0C1169.3 189.7 1175.5 204.2 1179.8 218.0C1184.0 231.8 1187.0 246.3 1189.0 260.5C1191.0 274.7 1191.6 290.1 1191.5 303.0C1191.4 315.9 1188.4 328.0 1188.5 338.0C1188.6 348.0 1190.3 354.7 1192.2 363.0C1194.1 371.3 1197.9 380.5 1199.8 388.0C1201.7 395.5 1202.9 404.7 1203.5 408.0" stroke="#d9790f" fill="none" stroke-width="11"/><path d="M1144.8 148.0C1147.9 153.0 1157.7 166.3 1163.5 178.0C1169.3 189.7 1175.5 204.2 1179.8 218.0C1184.0 231.8 1187.0 246.3 1189.0 260.5C1191.0 274.7 1191.6 290.1 1191.5 303.0C1191.4 315.9 1188.4 328.0 1188.5 338.0C1188.6 348.0 1190.3 354.7 1192.2 363.0C1194.1 371.3 1197.9 380.5 1199.8 388.0C1201.7 395.5 1202.9 404.7 1203.5 408.0" stroke="#000" fill="none" stroke-width="9"/>
<path d="M1076.0 148.0C1076.6 152.2 1079.8 165.5 1079.8 173.0C1079.8 180.5 1075.0 185.1 1076.0 193.0C1077.0 200.9 1082.7 211.3 1086.0 220.5C1089.3 229.7 1092.7 240.5 1096.0 248.0C1099.3 255.5 1102.2 258.4 1106.0 265.5C1109.8 272.6 1114.3 283.0 1118.5 290.5C1122.7 298.0 1126.4 303.8 1131.0 310.5C1135.6 317.2 1142.7 324.2 1146.0 330.5C1149.3 336.8 1150.0 340.9 1151.0 348.0C1152.0 355.1 1151.4 366.3 1152.2 373.0C1153.0 379.7 1155.0 382.2 1156.0 388.0C1157.0 393.8 1158.1 404.7 1158.5 408.0" stroke="#d9790f" fill="none" stroke-width="10"/><path d="M1076.0 148.0C1076.6 152.2 1079.8 165.5 1079.8 173.0C1079.8 180.5 1075.0 185.1 1076.0 193.0C1077.0 200.9 1082.7 211.3 1086.0 220.5C1089.3 229.7 1092.7 240.5 1096.0 248.0C1099.3 255.5 1102.2 258.4 1106.0 265.5C1109.8 272.6 1114.3 283.0 1118.5 290.5C1122.7 298.0 1126.4 303.8 1131.0 310.5C1135.6 317.2 1142.7 324.2 1146.0 330.5C1149.3 336.8 1150.0 340.9 1151.0 348.0C1152.0 355.1 1151.4 366.3 1152.2 373.0C1153.0 379.7 1155.0 382.2 1156.0 388.0C1157.0 393.8 1158.1 404.7 1158.5 408.0" stroke="#000" fill="none" stroke-width="8"/>
<path d="M1017.2 148.0C1019.7 150.5 1026.4 157.6 1032.2 163.0C1038.0 168.4 1048.0 176.1 1052.2 180.5C1056.4 184.9 1056.4 187.8 1057.2 189.2" stroke="#d9790f" fill="none" stroke-width="11"/><path d="M1017.2 148.0C1019.7 150.5 1026.4 157.6 1032.2 163.0C1038.0 168.4 1048.0 176.1 1052.2 180.5C1056.4 184.9 1056.4 187.8 1057.2 189.2" stroke="#000" fill="none" stroke-width="9"/>
<path d="M1046.0 260.5C1048.5 263.4 1056.4 270.9 1061.0 278.0C1065.6 285.1 1070.6 293.8 1073.5 303.0C1076.4 312.2 1077.9 323.0 1078.5 333.0C1079.1 343.0 1075.1 353.8 1077.2 363.0C1079.3 372.2 1086.2 380.5 1091.0 388.0C1095.8 395.5 1103.5 404.7 1106.0 408.0" stroke="#d9790f" fill="none" stroke-width="11"/><path d="M1046.0 260.5C1048.5 263.4 1056.4 270.9 1061.0 278.0C1065.6 285.1 1070.6 293.8 1073.5 303.0C1076.4 312.2 1077.9 323.0 1078.5 333.0C1079.1 343.0 1075.1 353.8 1077.2 363.0C1079.3 372.2 1086.2 380.5 1091.0 388.0C1095.8 395.5 1103.5 404.7 1106.0 408.0" stroke="#000" fill="none" stroke-width="9"/>
<path d="M971.0 168.0C972.7 173.0 977.2 187.6 981.0 198.0C984.8 208.4 989.3 219.7 993.5 230.5C997.7 241.3 1001.8 251.8 1006.0 263.0C1010.2 274.2 1014.3 287.2 1018.5 298.0C1022.7 308.8 1026.4 317.2 1031.0 328.0C1035.6 338.8 1040.2 349.7 1046.0 363.0C1051.8 376.3 1062.7 400.5 1066.0 408.0" stroke="#d9790f" fill="none" stroke-width="9"/><path d="M971.0 168.0C972.7 173.0 977.2 187.6 981.0 198.0C984.8 208.4 989.3 219.7 993.5 230.5C997.7 241.3 1001.8 251.8 1006.0 263.0C1010.2 274.2 1014.3 287.2 1018.5 298.0C1022.7 308.8 1026.4 317.2 1031.0 328.0C1035.6 338.8 1040.2 349.7 1046.0 363.0C1051.8 376.3 1062.7 400.5 1066.0 408.0" stroke="#000" fill="none" stroke-width="7"/>
<path d="M1486.0 148.0C1482.7 155.5 1473.5 177.2 1466.0 193.0C1458.5 208.8 1450.2 226.3 1441.0 243.0C1431.8 259.7 1420.2 278.8 1411.0 293.0C1401.8 307.2 1392.2 316.3 1386.0 328.0C1379.8 339.7 1375.6 357.2 1373.5 363.0" stroke="#d9790f" fill="none" stroke-width="11"/><path d="M1486.0 148.0C1482.7 155.5 1473.5 177.2 1466.0 193.0C1458.5 208.8 1450.2 226.3 1441.0 243.0C1431.8 259.7 1420.2 278.8 1411.0 293.0C1401.8 307.2 1392.2 316.3 1386.0 328.0C1379.8 339.7 1375.6 357.2 1373.5 363.0" stroke="#000" fill="none" stroke-width="9"/>
<path d="M1296.0 148.0C1297.7 156.3 1303.1 180.5 1306.0 198.0C1308.9 215.5 1312.2 243.8 1313.5 253.0" stroke="#d9790f" fill="none" stroke-width="13"/><path d="M1296.0 148.0C1297.7 156.3 1303.1 180.5 1306.0 198.0C1308.9 215.5 1312.2 243.8 1313.5 253.0" stroke="#000" fill="none" stroke-width="11"/>
<path d="M1332.2 148.0C1330.8 156.3 1326.8 180.5 1324.0 198.0C1321.2 215.5 1316.7 243.8 1315.2 253.0" stroke="#d9790f" fill="none" stroke-width="13"/><path d="M1332.2 148.0C1330.8 156.3 1326.8 180.5 1324.0 198.0C1321.2 215.5 1316.7 243.8 1315.2 253.0" stroke="#000" fill="none" stroke-width="11"/>
<path d="M1313.5 253.0C1312.2 257.2 1307.7 270.5 1306.0 278.0C1304.3 285.5 1303.9 294.7 1303.5 298.0" stroke="#d9790f" fill="none" stroke-width="11"/><path d="M1313.5 253.0C1312.2 257.2 1307.7 270.5 1306.0 278.0C1304.3 285.5 1303.9 294.7 1303.5 298.0" stroke="#000" fill="none" stroke-width="9"/>
<path d="M1552.0 223.0C1549.8 228.0 1543.7 241.3 1538.5 253.0C1533.3 264.7 1526.8 279.7 1521.0 293.0C1515.2 306.3 1508.5 319.7 1503.5 333.0C1498.5 346.3 1493.9 364.2 1491.0 373.0C1488.1 381.8 1486.8 383.4 1486.0 385.5" stroke="#d9790f" fill="none" stroke-width="11"/><path d="M1552.0 223.0C1549.8 228.0 1543.7 241.3 1538.5 253.0C1533.3 264.7 1526.8 279.7 1521.0 293.0C1515.2 306.3 1508.5 319.7 1503.5 333.0C1498.5 346.3 1493.9 364.2 1491.0 373.0C1488.1 381.8 1486.8 383.4 1486.0 385.5" stroke="#000" fill="none" stroke-width="9"/>
<path d="M1416.0 408.0C1417.7 404.2 1421.8 392.0 1426.0 385.5C1430.2 379.0 1436.0 371.9 1441.0 369.2C1446.0 366.5 1453.0 366.9 1456.0 369.2C1459.0 371.5 1459.8 376.5 1459.0 383.0C1458.2 389.5 1452.3 403.8 1451.0 408.0" stroke="#d9790f" fill="none" stroke-width="13"/><path d="M1416.0 408.0C1417.7 404.2 1421.8 392.0 1426.0 385.5C1430.2 379.0 1436.0 371.9 1441.0 369.2C1446.0 366.5 1453.0 366.9 1456.0 369.2C1459.0 371.5 1459.8 376.5 1459.0 383.0C1458.2 389.5 1452.3 403.8 1451.0 408.0" stroke="#000" fill="none" stroke-width="11"/>
<path d="M556.5 668.0C558.2 658.0 562.8 628.4 566.5 608.0C570.2 587.6 574.8 563.0 579.0 545.5C583.2 528.0 587.8 512.4 591.5 503.0C595.2 493.6 597.8 491.1 601.0 489.2C604.2 487.3 608.1 488.7 611.0 491.8C613.9 494.9 617.0 501.1 618.5 508.0C620.0 514.9 619.6 528.8 619.8 533.0" stroke="#d9790f" fill="none" stroke-width="11"/><path d="M556.5 668.0C558.2 658.0 562.8 628.4 566.5 608.0C570.2 587.6 574.8 563.0 579.0 545.5C583.2 528.0 587.8 512.4 591.5 503.0C595.2 493.6 597.8 491.1 601.0 489.2C604.2 487.3 608.1 488.7 611.0 491.8C613.9 494.9 617.0 501.1 618.5 508.0C620.0 514.9 619.6 528.8 619.8 533.0" stroke="#000" fill="none" stroke-width="9"/>
<path d="M556.5 458.0C558.1 454.3 561.1 441.3 566.0 436.0C570.9 430.7 577.7 427.5 586.0 426.0C594.3 424.5 607.2 425.1 616.0 427.2C624.8 429.3 632.2 432.5 638.5 438.5C644.8 444.5 650.2 456.4 653.5 463.0C656.8 469.6 657.7 475.5 658.5 478.0" stroke="#d9790f" fill="none" stroke-width="11"/><path d="M556.5 458.0C558.1 454.3 561.1 441.3 566.0 436.0C570.9 430.7 577.7 427.5 586.0 426.0C594.3 424.5 607.2 425.1 616.0 427.2C624.8 429.3 632.2 432.5 638.5 438.5C644.8 444.5 650.2 456.4 653.5 463.0C656.8 469.6 657.7 475.5 658.5 478.0" stroke="#000" fill="none" stroke-width="9"/>
<path d="M1049.8 516.8C1052.5 518.2 1061.2 521.1 1066.0 525.5C1070.8 529.9 1075.2 535.9 1078.5 543.0C1081.8 550.1 1083.9 558.8 1086.0 568.0C1088.1 577.2 1087.7 589.2 1091.0 598.0C1094.3 606.8 1100.2 613.8 1106.0 620.5C1111.8 627.2 1121.0 633.4 1126.0 638.0C1131.0 642.6 1134.3 646.3 1136.0 648.0" stroke="#d9790f" fill="none" stroke-width="10"/><path d="M1049.8 516.8C1052.5 518.2 1061.2 521.1 1066.0 525.5C1070.8 529.9 1075.2 535.9 1078.5 543.0C1081.8 550.1 1083.9 558.8 1086.0 568.0C1088.1 577.2 1087.7 589.2 1091.0 598.0C1094.3 606.8 1100.2 613.8 1106.0 620.5C1111.8 627.2 1121.0 633.4 1126.0 638.0C1131.0 642.6 1134.3 646.3 1136.0 648.0" stroke="#000" fill="none" stroke-width="8"/>
<path d="M1073.5 408.0C1075.2 412.2 1079.8 424.7 1083.5 433.0C1087.2 441.3 1090.6 449.2 1096.0 458.0C1101.4 466.8 1110.6 479.7 1116.0 485.5C1121.4 491.3 1123.5 495.5 1128.5 493.0C1133.5 490.5 1143.1 474.2 1146.0 470.5" stroke="#d9790f" fill="none" stroke-width="9"/><path d="M1073.5 408.0C1075.2 412.2 1079.8 424.7 1083.5 433.0C1087.2 441.3 1090.6 449.2 1096.0 458.0C1101.4 466.8 1110.6 479.7 1116.0 485.5C1121.4 491.3 1123.5 495.5 1128.5 493.0C1133.5 490.5 1143.1 474.2 1146.0 470.5" stroke="#000" fill="none" stroke-width="7"/>
<path d="M1091.0 448.0C1094.3 448.2 1103.5 449.6 1111.0 449.2C1118.5 448.8 1131.8 446.1 1136.0 445.5" stroke="#d9790f" fill="none" stroke-width="9"/><path d="M1091.0 448.0C1094.3 448.2 1103.5 449.6 1111.0 449.2C1118.5 448.8 1131.8 446.1 1136.0 445.5" stroke="#000" fill="none" stroke-width="7"/>
<path d="M1251.0 581.8 L1266.0 586.0" stroke="#d9790f" fill="none" stroke-width="9"/><path d="M1251.0 581.8 L1266.0 586.0" stroke="#000" fill="none" stroke-width="7"/>
<path d="M1413.5 415.5C1409.8 421.8 1398.9 439.2 1391.0 453.0C1383.1 466.8 1373.1 483.8 1366.0 498.0C1358.9 512.2 1353.9 524.7 1348.5 538.0C1343.1 551.3 1337.7 569.2 1333.5 578.0C1329.3 586.8 1325.2 588.4 1323.5 590.5" stroke="#d9790f" fill="none" stroke-width="11"/><path d="M1413.5 415.5C1409.8 421.8 1398.9 439.2 1391.0 453.0C1383.1 466.8 1373.1 483.8 1366.0 498.0C1358.9 512.2 1353.9 524.7 1348.5 538.0C1343.1 551.3 1337.7 569.2 1333.5 578.0C1329.3 586.8 1325.2 588.4 1323.5 590.5" stroke="#000" fill="none" stroke-width="9"/>
<path d="M1446.0 408.0C1444.8 411.3 1443.5 418.4 1438.5 428.0C1433.5 437.6 1423.9 452.2 1416.0 465.5C1408.1 478.8 1398.5 495.9 1391.0 508.0C1383.5 520.1 1378.1 526.3 1371.0 538.0C1363.9 549.7 1352.2 571.3 1348.5 578.0" stroke="#d9790f" fill="none" stroke-width="11"/><path d="M1446.0 408.0C1444.8 411.3 1443.5 418.4 1438.5 428.0C1433.5 437.6 1423.9 452.2 1416.0 465.5C1408.1 478.8 1398.5 495.9 1391.0 508.0C1383.5 520.1 1378.1 526.3 1371.0 538.0C1363.9 549.7 1352.2 571.3 1348.5 578.0" stroke="#000" fill="none" stroke-width="9"/>
<path d="M1266.0 592.5C1271.0 592.9 1286.4 595.0 1296.0 595.0C1305.6 595.0 1318.9 592.9 1323.5 592.5" stroke="#d9790f" fill="none" stroke-width="10"/><path d="M1266.0 592.5C1271.0 592.9 1286.4 595.0 1296.0 595.0C1305.6 595.0 1318.9 592.9 1323.5 592.5" stroke="#000" fill="none" stroke-width="8"/>
<path d="M1341.0 584.2C1345.2 584.5 1357.7 586.6 1366.0 586.0C1374.3 585.4 1382.7 583.8 1391.0 580.5C1399.3 577.2 1411.8 568.4 1416.0 566.0" stroke="#d9790f" fill="none" stroke-width="11"/><path d="M1341.0 584.2C1345.2 584.5 1357.7 586.6 1366.0 586.0C1374.3 585.4 1382.7 583.8 1391.0 580.5C1399.3 577.2 1411.8 568.4 1416.0 566.0" stroke="#000" fill="none" stroke-width="9"/>
<path d="M1552.0 455.5C1549.8 458.4 1542.8 464.2 1538.5 473.0C1534.2 481.8 1530.2 496.3 1526.0 508.0C1521.8 519.7 1518.1 532.2 1513.5 543.0C1508.9 553.8 1503.1 565.5 1498.5 573.0C1493.9 580.5 1488.1 585.5 1486.0 588.0" stroke="#d9790f" fill="none" stroke-width="11"/><path d="M1552.0 455.5C1549.8 458.4 1542.8 464.2 1538.5 473.0C1534.2 481.8 1530.2 496.3 1526.0 508.0C1521.8 519.7 1518.1 532.2 1513.5 543.0C1508.9 553.8 1503.1 565.5 1498.5 573.0C1493.9 580.5 1488.1 585.5 1486.0 588.0" stroke="#000" fill="none" stroke-width="9"/>
<path d="M553.5 668.0C552.2 673.0 548.1 687.6 546.0 698.0C543.9 708.4 543.1 718.0 541.0 730.5C538.9 743.0 536.0 758.4 533.5 773.0C531.0 787.6 528.5 803.8 526.0 818.0C523.5 832.2 520.4 847.3 518.5 858.0C516.6 868.7 515.4 878.0 514.8 882.0" stroke="#d9790f" fill="none" stroke-width="11"/><path d="M553.5 668.0C552.2 673.0 548.1 687.6 546.0 698.0C543.9 708.4 543.1 718.0 541.0 730.5C538.9 743.0 536.0 758.4 533.5 773.0C531.0 787.6 528.5 803.8 526.0 818.0C523.5 832.2 520.4 847.3 518.5 858.0C516.6 868.7 515.4 878.0 514.8 882.0" stroke="#000" fill="none" stroke-width="9"/>
<path d="M813.5 678.0C810.6 681.8 801.0 691.3 796.0 700.5C791.0 709.7 786.8 721.8 783.5 733.0C780.2 744.2 779.1 758.0 776.0 768.0C772.9 778.0 766.4 783.0 764.8 793.0C763.2 803.0 765.8 817.2 766.5 828.0C767.2 838.8 768.2 849.0 769.0 858.0C769.8 867.0 771.1 878.0 771.5 882.0" stroke="#d9790f" fill="none" stroke-width="12"/><path d="M813.5 678.0C810.6 681.8 801.0 691.3 796.0 700.5C791.0 709.7 786.8 721.8 783.5 733.0C780.2 744.2 779.1 758.0 776.0 768.0C772.9 778.0 766.4 783.0 764.8 793.0C763.2 803.0 765.8 817.2 766.5 828.0C767.2 838.8 768.2 849.0 769.0 858.0C769.8 867.0 771.1 878.0 771.5 882.0" stroke="#000" fill="none" stroke-width="10"/>
<path d="M966.0 833.0C969.3 835.5 979.3 843.4 986.0 848.0C992.7 852.6 999.5 857.2 1006.0 860.5C1012.5 863.8 1021.7 866.8 1024.8 868.0" stroke="#d9790f" fill="none" stroke-width="10"/><path d="M966.0 833.0C969.3 835.5 979.3 843.4 986.0 848.0C992.7 852.6 999.5 857.2 1006.0 860.5C1012.5 863.8 1021.7 866.8 1024.8 868.0" stroke="#000" fill="none" stroke-width="8"/>
<path d="M1324.0 685.5C1322.2 692.0 1317.3 711.6 1313.5 724.2C1309.7 736.8 1303.1 754.9 1301.0 761.0" stroke="#d9790f" fill="none" stroke-width="10"/><path d="M1324.0 685.5C1322.2 692.0 1317.3 711.6 1313.5 724.2C1309.7 736.8 1303.1 754.9 1301.0 761.0" stroke="#000" fill="none" stroke-width="8"/>
<path d="M1289.8 795.5C1287.7 803.4 1281.0 829.2 1277.2 843.0C1273.4 856.8 1268.9 872.2 1267.2 878.0" stroke="#d9790f" fill="none" stroke-width="10"/><path d="M1289.8 795.5C1287.7 803.4 1281.0 829.2 1277.2 843.0C1273.4 856.8 1268.9 872.2 1267.2 878.0" stroke="#000" fill="none" stroke-width="8"/>
<path d="M1478.5 670.5C1476.4 673.4 1470.2 680.9 1466.0 688.0C1461.8 695.1 1457.7 703.8 1453.5 713.0C1449.3 722.2 1444.8 733.8 1441.0 743.0C1437.2 752.2 1433.5 762.6 1431.0 768.0C1428.5 773.4 1426.8 774.2 1426.0 775.5" stroke="#d9790f" fill="none" stroke-width="11"/><path d="M1478.5 670.5C1476.4 673.4 1470.2 680.9 1466.0 688.0C1461.8 695.1 1457.7 703.8 1453.5 713.0C1449.3 722.2 1444.8 733.8 1441.0 743.0C1437.2 752.2 1433.5 762.6 1431.0 768.0C1428.5 773.4 1426.8 774.2 1426.0 775.5" stroke="#000" fill="none" stroke-width="9"/>
<path d="M1552.0 740.5C1547.7 745.9 1536.2 761.8 1526.0 773.0C1515.8 784.2 1502.7 796.8 1491.0 808.0C1479.3 819.2 1467.7 830.5 1456.0 840.5C1444.3 850.5 1430.6 861.1 1421.0 868.0C1411.4 874.9 1402.2 879.7 1398.5 882.0" stroke="#d9790f" fill="none" stroke-width="11"/><path d="M1552.0 740.5C1547.7 745.9 1536.2 761.8 1526.0 773.0C1515.8 784.2 1502.7 796.8 1491.0 808.0C1479.3 819.2 1467.7 830.5 1456.0 840.5C1444.3 850.5 1430.6 861.1 1421.0 868.0C1411.4 874.9 1402.2 879.7 1398.5 882.0" stroke="#000" fill="none" stroke-width="9"/>
<path d="M1552.0 833.0C1548.1 837.2 1536.2 850.5 1528.5 858.0C1520.8 865.5 1510.8 874.0 1506.0 878.0C1501.2 882.0 1500.8 881.3 1499.8 882.0" stroke="#d9790f" fill="none" stroke-width="10"/><path d="M1552.0 833.0C1548.1 837.2 1536.2 850.5 1528.5 858.0C1520.8 865.5 1510.8 874.0 1506.0 878.0C1501.2 882.0 1500.8 881.3 1499.8 882.0" stroke="#000" fill="none" stroke-width="8"/>
<path d="M475.0 148.0C473.5 152.2 470.0 161.8 466.0 173.0C462.0 184.2 456.4 199.7 451.0 215.5C445.6 231.3 439.3 250.9 433.5 268.0C427.7 285.1 421.4 305.1 416.0 318.0C410.6 330.9 405.2 338.4 401.0 345.5C396.8 352.6 392.7 358.0 391.0 360.5" stroke="#ffffff" fill="none"/>
<path d="M391.0 360.5C389.1 363.2 383.6 371.8 379.8 376.8C376.1 381.8 370.4 388.2 368.5 390.5" stroke="#ffffff" fill="none" stroke-dasharray="8 4"/>
<path d="M468.5 148.0C466.8 152.6 463.1 163.0 458.5 175.5C453.9 188.0 446.4 207.6 441.0 223.0C435.6 238.4 430.8 253.8 426.0 268.0C421.2 282.2 416.8 296.3 412.2 308.0C407.6 319.7 403.5 329.2 398.5 338.0C393.5 346.8 384.9 356.8 382.2 360.5" stroke="#e60a14" fill="none"/>
<path d="M538.5 148.0C536.4 154.2 531.4 169.7 526.0 185.5C520.6 201.3 512.7 224.2 506.0 243.0C499.3 261.8 492.2 282.2 486.0 298.0C479.8 313.8 473.9 327.2 468.5 338.0C463.1 348.8 456.0 358.8 453.5 363.0" stroke="#ffffff" fill="none"/>
<path d="M542.2 148.0C540.1 154.2 535.2 169.7 529.8 185.5C524.4 201.3 516.3 224.2 509.8 243.0C503.3 261.8 496.6 283.0 491.0 298.0C485.4 313.0 479.6 321.3 476.0 333.0C472.4 344.7 470.3 362.2 469.2 368.0" stroke="#ffffff" fill="none"/>
<path d="M453.5 363.0 L469.2 368.0" stroke="#ffffff" fill="none"/>
<path d="M616.0 148.0C613.5 153.0 606.0 165.9 601.0 178.0C596.0 190.1 591.0 205.5 586.0 220.5C581.0 235.5 576.0 250.9 571.0 268.0C566.0 285.1 561.0 305.5 556.0 323.0C551.0 340.5 544.7 358.8 541.0 373.0C537.3 387.2 535.2 402.2 534.0 408.0" stroke="#ffffff" fill="none"/>
<path d="M622.2 150.5C619.7 155.1 612.4 166.3 607.2 178.0C602.0 189.7 596.2 205.9 591.0 220.5C585.8 235.1 580.2 252.6 576.0 265.5C571.8 278.4 569.3 285.9 566.0 298.0C562.7 310.1 559.3 325.5 556.0 338.0C552.7 350.5 548.9 361.3 546.0 373.0C543.1 384.7 539.8 402.2 538.5 408.0" stroke="#e60a14" fill="none"/>
<path d="M398.5 344.2 L534.8 391.8" stroke="#a000a0" fill="none" stroke-width="2"/>
<path d="M379.0 365.5h4M381.0 365.5L381.0 338.0A7.25 7.25 0 0 1 395.5 337.2" stroke="#ffffff" fill="none"/><circle cx="395.5" cy="337.2" r="1.8" stroke="#ffffff" fill="none"/>
<path d="M530.2 408.0h4M532.2 408.0L532.2 391.8A7.7000000000000455 7.7000000000000455 0 0 0 516.8 393.0" stroke="#ffffff" fill="none"/><circle cx="516.8" cy="393.0" r="1.8" stroke="#ffffff" fill="none"/>
<path d="M373.5 153.0 L463.5 163.5" stroke="#00d4e0" fill="none"/>
<path d="M366.0 153.5C372.2 154.1 387.2 154.7 403.5 156.8C419.8 158.9 453.5 164.5 463.5 166.0" stroke="#d9790f" fill="none"/>
<path d="M366.0 165.5C374.3 165.9 400.2 166.8 416.0 168.0C431.8 169.2 453.5 171.8 461.0 172.5" stroke="#d9790f" fill="none"/>
<path d="M366.0 177.5C374.3 177.6 400.8 177.6 416.0 178.0C431.2 178.4 450.3 179.7 457.2 180.0" stroke="#d9790f" fill="none" stroke-width="7" stroke-dasharray="1 2.5"/>
<path d="M366.0 181.0 L416.0 181.5 L441.0 180.0 L441.0 210.5 L433.0 211.0" stroke="#d9790f" fill="none"/>
<path d="M366.0 173.0 L456.0 175.5" stroke="#d9790f" fill="none"/>
<path d="M366.0 184.2C373.5 184.2 396.4 184.0 411.0 184.5C425.6 185.0 446.4 186.6 453.5 187.0" stroke="#ffffff" fill="none" stroke-dasharray="7 4"/>
<path d="M366.0 203.0C373.5 203.2 397.2 203.6 411.0 204.5C424.8 205.4 442.2 207.8 448.5 208.5" stroke="#ffffff" fill="none" stroke-dasharray="7 4"/>
<path d="M368.0 184.2 L368.0 203.0" stroke="#ffffff" fill="none"/>
<path d="M366.0 213.5C372.7 214.2 393.1 215.9 406.0 217.5C418.9 219.1 437.2 222.1 443.5 223.0" stroke="#e60a14" fill="none"/>
<path d="M366.0 224.2C372.2 224.5 391.0 225.2 403.5 226.0C416.0 226.8 434.8 228.7 441.0 229.2" stroke="#d9790f" fill="none" stroke-width="7" stroke-dasharray="1 2.5"/>
<path d="M366.0 221.0 L441.0 226.0" stroke="#d9790f" fill="none"/>
<path d="M366.0 227.5C372.2 228.2 391.4 230.1 403.5 231.8C415.6 233.5 432.7 236.6 438.5 237.5" stroke="#d9790f" fill="none"/>
<path d="M366.0 235.5C371.8 236.2 389.7 237.8 401.0 239.5C412.3 241.2 428.5 244.5 434.0 245.5" stroke="#d9790f" fill="none"/>
<path d="M366.0 244.2C371.4 244.8 387.9 246.2 398.5 248.0C409.1 249.8 424.6 253.7 429.8 254.8" stroke="#e60a14" fill="none"/>
<path d="M366.0 253.0C371.0 253.8 385.9 255.6 396.0 257.5C406.1 259.4 421.4 263.3 426.5 264.5" stroke="#d9790f" fill="none"/>
<path d="M366.0 265.5C371.0 266.0 386.4 266.9 396.0 268.5C405.6 270.1 418.9 273.8 423.5 274.8" stroke="#d9790f" fill="none"/>
<path d="M366.0 278.0C370.6 278.6 384.5 280.1 393.5 281.8C402.5 283.5 415.4 287.0 419.8 288.0" stroke="#d9790f" fill="none"/>
<path d="M366.0 291.0C370.2 291.5 382.7 292.5 391.0 294.2C399.3 295.9 411.8 299.9 416.0 301.0" stroke="#d9790f" fill="none"/>
<path d="M366.0 304.2C370.2 304.5 383.3 304.9 391.0 306.0C398.7 307.1 408.7 310.2 412.2 311.0" stroke="#d9790f" fill="none"/>
<path d="M366.0 318.0C369.3 318.2 379.7 318.5 386.0 319.2C392.3 319.9 401.0 321.7 404.0 322.2" stroke="#e60a14" fill="none"/>
<path d="M366.0 326.0C368.9 326.0 377.7 325.6 383.5 326.0C389.3 326.4 398.1 328.1 401.0 328.5" stroke="#d9790f" fill="none"/>
<path d="M366.0 338.5C368.1 338.2 374.3 337.4 378.5 337.0C382.7 336.6 388.9 336.2 391.0 336.0" stroke="#d9790f" fill="none"/>
<path d="M366.0 348.0C367.7 347.6 372.9 345.5 376.0 345.5C379.1 345.5 384.0 345.5 384.8 348.0C385.6 350.5 381.6 358.4 381.0 360.5" stroke="#d9790f" fill="none"/>
<path d="M366.0 368.0C367.7 366.8 373.1 363.0 376.0 360.5C378.9 358.0 382.2 354.2 383.5 353.0" stroke="#d9790f" fill="none"/>
<path d="M618.5 156.0C620.6 155.5 627.6 154.3 631.0 153.0C634.4 151.7 637.7 148.8 639.0 148.0" stroke="#1010ff" fill="none"/>
<path d="M618.5 160.0C621.8 160.3 633.5 162.3 638.5 161.8C643.5 161.3 646.1 159.1 648.5 156.8C650.9 154.5 652.2 149.5 653.0 148.0" stroke="#d9790f" fill="none"/>
<path d="M613.5 166.8C618.1 167.4 632.2 169.0 641.0 170.5C649.8 172.0 661.8 175.1 666.0 176.0" stroke="#d9790f" fill="none"/>
<path d="M609.8 173.0C614.6 174.2 629.1 177.3 638.5 180.0C647.9 182.7 661.4 187.7 666.0 189.2" stroke="#e60a14" fill="none"/>
<path d="M603.5 184.2C608.9 184.8 625.6 186.2 636.0 188.0C646.4 189.8 661.0 193.7 666.0 194.8" stroke="#d9790f" fill="none"/>
<path d="M597.2 196.8C603.2 196.9 622.0 196.6 633.5 197.5C645.0 198.4 660.6 201.4 666.0 202.2" stroke="#d9790f" fill="none"/>
<path d="M593.5 208.0C599.8 207.8 618.9 206.0 631.0 206.5C643.1 207.0 660.2 210.2 666.0 211.0" stroke="#d9790f" fill="none"/>
<path d="M591.0 216.0C597.2 215.3 617.7 211.2 628.5 212.0C639.3 212.8 649.8 217.9 656.0 221.0C662.2 224.1 664.3 228.9 666.0 230.5" stroke="#ffffff" fill="none" stroke-dasharray="7 4"/>
<path d="M586.0 228.5C593.1 229.2 617.7 231.2 628.5 233.0C639.3 234.8 644.8 236.8 651.0 239.2C657.2 241.6 663.5 246.1 666.0 247.5" stroke="#d9790f" fill="none" stroke-width="7" stroke-dasharray="1 2.5"/>
<path d="M586.0 227.5C593.1 228.2 617.7 230.2 628.5 232.0C639.3 233.8 644.8 235.7 651.0 238.0C657.2 240.3 663.5 244.7 666.0 246.0" stroke="#ffffff" fill="none" stroke-dasharray="4 3"/>
<path d="M583.5 234.2C591.0 234.6 614.8 234.3 628.5 236.8C642.2 239.3 659.8 247.1 666.0 249.2" stroke="#d9790f" fill="none"/>
<path d="M581.0 241.8C588.9 242.2 614.3 241.9 628.5 244.2C642.7 246.5 659.8 253.6 666.0 255.5" stroke="#d9790f" fill="none"/>
<path d="M578.5 248.8C586.8 249.2 613.9 248.8 628.5 251.0C643.1 253.2 659.8 260.0 666.0 261.8" stroke="#d9790f" fill="none"/>
<path d="M576.0 258.0C584.8 258.2 613.5 257.5 628.5 259.2C643.5 260.9 659.8 266.5 666.0 268.0" stroke="#d9790f" fill="none"/>
<path d="M573.5 266.0C582.7 266.2 613.1 265.9 628.5 267.5C643.9 269.1 659.8 274.2 666.0 275.5" stroke="#d9790f" fill="none"/>
<path d="M571.0 274.8C578.5 274.9 600.2 273.8 616.0 275.5C631.8 277.2 657.7 283.2 666.0 284.8" stroke="#e60a14" fill="none"/>
<path d="M568.5 283.0C576.4 283.2 599.8 281.6 616.0 284.2C632.2 286.8 657.7 296.1 666.0 298.5" stroke="#d9790f" fill="none"/>
<path d="M566.0 298.0C568.1 296.8 570.2 291.8 578.5 291.0C586.8 290.2 601.4 288.9 616.0 293.5C630.6 298.1 657.7 314.3 666.0 318.5" stroke="#d9790f" fill="none"/>
<path d="M563.5 308.0C566.0 306.4 569.8 299.2 578.5 298.5C587.2 297.8 604.3 299.4 616.0 303.5C627.7 307.6 640.2 317.2 648.5 323.0C656.8 328.8 663.1 335.9 666.0 338.5" stroke="#d9790f" fill="none"/>
<path d="M557.2 331.8 L566.0 331.8 L566.0 320.5 L577.2 310.5 L579.8 298.5" stroke="#d9790f" fill="none"/>
<path d="M561.0 304.2C566.0 304.4 581.8 303.5 591.0 305.5C600.2 307.5 609.3 310.5 616.0 316.0C622.7 321.5 628.9 330.2 631.0 338.5C633.1 346.8 631.0 358.1 628.5 365.5C626.0 372.9 623.1 375.9 616.0 383.0C608.9 390.1 591.0 403.8 586.0 408.0" stroke="#ffffff" fill="none" stroke-dasharray="9 5"/>
<path d="M558.5 331.8C561.0 331.8 566.4 330.7 573.5 331.8C580.6 332.9 595.2 335.7 601.0 338.5C606.8 341.3 608.5 344.3 608.5 348.5C608.5 352.7 605.2 357.3 601.0 363.5C596.8 369.7 591.0 378.1 583.5 385.5C576.0 392.9 560.6 404.2 556.0 408.0" stroke="#ffffff" fill="none" stroke-dasharray="9 5"/>
<path d="M548.5 363.0C553.5 361.8 568.5 358.4 578.5 356.0C588.5 353.6 598.9 349.2 608.5 348.5C618.1 347.8 626.4 346.6 636.0 352.0C645.6 357.4 661.0 376.2 666.0 381.0" stroke="#e60a14" fill="none"/>
<path d="M553.5 340.5C555.6 341.3 562.7 345.4 566.0 345.5C569.3 345.6 572.0 343.1 573.5 341.0C575.0 338.9 574.6 334.3 574.8 333.0" stroke="#d9790f" fill="none"/>
<path d="M551.5 348.5C554.8 348.5 564.4 349.3 571.0 348.5C577.6 347.7 585.2 344.8 591.0 343.5C596.8 342.2 603.5 341.0 606.0 340.5" stroke="#d9790f" fill="none"/>
<path d="M551.0 368.5C555.6 367.7 569.8 365.2 578.5 363.5C587.2 361.8 597.7 356.9 603.5 358.5C609.3 360.1 611.0 368.8 613.5 373.0C616.0 377.2 613.9 380.9 618.5 383.5C623.1 386.1 633.1 384.8 641.0 388.5C648.9 392.2 661.8 403.1 666.0 406.0" stroke="#d9790f" fill="none"/>
<path d="M546.5 381.0C549.8 380.6 559.4 376.3 566.0 378.5C572.6 380.7 580.6 389.3 586.0 394.2C591.4 399.1 596.4 405.7 598.5 408.0" stroke="#d9790f" fill="none"/>
<path d="M544.0 388.5C546.8 388.5 555.2 385.2 561.0 388.5C566.8 391.8 575.6 404.8 578.5 408.0" stroke="#d9790f" fill="none"/>
<path d="M542.2 398.0C544.5 398.2 552.0 397.5 556.0 399.2C560.0 400.9 564.3 406.5 566.0 408.0" stroke="#d9790f" fill="none"/>
<text x="382.5" y="194.2" fill="#ffffff" font-size="11.5">548.8</text>
<text x="597.2" y="186.8" fill="#ffffff" font-size="11.5">545.7</text>
<text x="588.5" y="223.0" fill="#ffffff" font-size="11.5">547.7</text>
<text x="634.8" y="234.2" fill="#ffffff" font-size="11.5">548.7</text>
<text x="571.0" y="328.8" fill="#ffffff" font-size="11.5">559.5</text>
<text x="398.5" y="351.8" fill="#ffffff" font-size="11.5">564.5</text>
<text x="436.0" y="376.8" fill="#ffffff" font-size="11.5">564.4</text>
<text x="476.0" y="380.0" fill="#ffffff" font-size="11.5">564.3</text>
<text x="574.0" y="384.2" fill="#ffffff" font-size="11.5">561.9</text>
<text x="361.0" y="301.8" fill="#ffffff" font-size="11.5">8.1</text>
<path d="M738.5 148.0C741.4 153.0 750.2 167.2 756.0 178.0C761.8 188.8 766.8 200.5 773.5 213.0C780.2 225.5 788.1 239.7 796.0 253.0C803.9 266.3 812.7 279.7 821.0 293.0C829.3 306.3 837.7 318.0 846.0 333.0C854.3 348.0 865.2 370.5 871.0 383.0C876.8 395.5 879.3 403.8 881.0 408.0" stroke="#1010ff" fill="none"/>
<path d="M782.2 148.0C786.2 153.4 799.5 170.1 806.0 180.5C812.5 190.9 816.0 198.4 821.0 210.5C826.0 222.6 831.4 238.4 836.0 253.0C840.6 267.6 843.9 285.5 848.5 298.0C853.1 310.5 857.2 316.3 863.5 328.0C869.8 339.7 878.9 354.7 886.0 368.0C893.1 381.3 902.7 401.3 906.0 408.0" stroke="#1010ff" fill="none"/>
<path d="M807.2 148.0C809.5 154.2 816.6 173.0 821.0 185.5C825.4 198.0 829.3 210.5 833.5 223.0C837.7 235.5 841.8 248.0 846.0 260.5C850.2 273.0 853.9 285.1 858.5 298.0C863.1 310.9 866.8 325.5 873.5 338.0C880.2 350.5 891.8 363.4 898.5 373.0C905.2 382.6 910.6 389.7 913.5 395.5C916.4 401.3 915.6 405.9 916.0 408.0" stroke="#0a8a0a" fill="none"/>
<path d="M807.2 148.0C809.5 154.2 816.6 173.0 821.0 185.5C825.4 198.0 829.3 210.5 833.5 223.0C837.7 235.5 841.8 248.0 846.0 260.5C850.2 273.0 853.9 285.1 858.5 298.0C863.1 310.9 866.8 325.5 873.5 338.0C880.2 350.5 891.8 363.4 898.5 373.0C905.2 382.6 910.6 389.7 913.5 395.5C916.4 401.3 915.6 405.9 916.0 408.0" stroke="#0a8a0a" fill="none" stroke-width="5" stroke-dasharray="1 38"/>
<path d="M741.0 163.0C746.4 163.6 765.2 163.5 773.5 166.8C781.8 170.1 785.6 175.3 791.0 183.0C796.4 190.7 800.2 201.3 806.0 213.0C811.8 224.7 820.2 240.9 826.0 253.0C831.8 265.1 836.0 274.7 841.0 285.5C846.0 296.3 850.2 304.2 856.0 318.0C861.8 331.8 869.3 353.0 876.0 368.0C882.7 383.0 892.7 401.3 896.0 408.0" stroke="#00e000" fill="none" stroke-dasharray="6 2 1 2"/>
<path d="M741.0 163.0C737.5 165.1 724.2 170.5 719.8 175.5C715.4 180.5 714.8 186.8 714.8 193.0C714.8 199.2 716.7 204.7 719.8 213.0C722.9 221.3 729.1 232.2 733.5 243.0C737.9 253.8 743.9 265.5 746.0 278.0C748.1 290.5 747.7 305.5 746.0 318.0C744.3 330.5 741.0 342.6 736.0 353.0C731.0 363.4 723.9 371.3 716.0 380.5C708.1 389.7 693.1 403.4 688.5 408.0" stroke="#00e000" fill="none" stroke-dasharray="6 2 1 2"/>
<ellipse cx="751" cy="216" rx="5" ry="3" stroke="#00e000" fill="none"/><path d="M751 219v8" stroke="#00e000"/>
<path d="M828.5 148.0C833.1 153.4 844.3 164.2 856.0 180.5C867.7 196.8 884.3 225.1 898.5 245.5C912.7 265.9 929.8 285.9 941.0 303.0C952.2 320.1 961.8 340.5 966.0 348.0" stroke="#00d4e0" fill="none"/>
<path d="M838.5 155.5C842.2 159.7 852.2 168.4 861.0 180.5C869.8 192.6 881.8 215.1 891.0 228.0C900.2 240.9 907.7 247.2 916.0 258.0C924.3 268.8 932.7 279.7 941.0 293.0C949.3 306.3 961.8 330.5 966.0 338.0" stroke="#d9790f" fill="none" stroke-width="3" opacity="0.8"/>
<path d="M838.5 155.5C842.2 159.7 852.2 168.4 861.0 180.5C869.8 192.6 881.8 215.1 891.0 228.0C900.2 240.9 907.7 247.2 916.0 258.0C924.3 268.8 932.7 279.7 941.0 293.0C949.3 306.3 961.8 330.5 966.0 338.0" stroke="#d9790f" fill="none" stroke-width="6" stroke-dasharray="1 1.5"/>
<path d="M733.5 148.0C736.4 152.6 744.8 164.7 751.0 175.5C757.2 186.3 763.9 200.1 771.0 213.0C778.1 225.9 785.6 239.7 793.5 253.0C801.4 266.3 810.2 279.7 818.5 293.0C826.8 306.3 835.2 318.0 843.5 333.0C851.8 348.0 862.8 370.5 868.5 383.0C874.2 395.5 876.4 403.8 878.0 408.0" stroke="#d9790f" fill="none"/>
<path d="M731.5 148.0C734.4 152.6 742.8 164.7 749.0 175.5C755.2 186.3 761.9 200.1 769.0 213.0C776.1 225.9 783.6 239.7 791.5 253.0C799.4 266.3 808.2 279.7 816.5 293.0C824.8 306.3 833.2 318.0 841.5 333.0C849.8 348.0 860.8 370.5 866.5 383.0C872.2 395.5 874.4 403.8 876.0 408.0" stroke="#d9790f" fill="none"/>
<path d="M729.5 148.0C732.4 152.6 740.8 164.7 747.0 175.5C753.2 186.3 759.9 200.1 767.0 213.0C774.1 225.9 781.6 239.7 789.5 253.0C797.4 266.3 806.2 279.7 814.5 293.0C822.8 306.3 831.2 318.0 839.5 333.0C847.8 348.0 858.8 370.5 864.5 383.0C870.2 395.5 872.4 403.8 874.0 408.0" stroke="#d9790f" fill="none"/>
<path d="M666.0 176.0C674.3 178.6 700.2 187.6 716.0 191.8C731.8 196.0 751.4 196.6 761.0 201.0C770.6 205.4 768.5 210.2 773.5 218.0C778.5 225.8 783.9 236.3 791.0 248.0C798.1 259.7 807.7 273.8 816.0 288.0C824.3 302.2 833.1 318.8 841.0 333.0C848.9 347.2 858.0 360.5 863.5 373.0C869.0 385.5 872.2 402.2 874.0 408.0" stroke="#d9790f" fill="none"/>
<path d="M666.0 189.2C674.3 191.1 702.2 195.7 716.0 200.5C729.8 205.3 738.9 210.9 748.5 218.0C758.1 225.1 765.6 233.0 773.5 243.0C781.4 253.0 788.1 265.5 796.0 278.0C803.9 290.5 812.7 303.8 821.0 318.0C829.3 332.2 838.9 348.0 846.0 363.0C853.1 378.0 860.6 400.5 863.5 408.0" stroke="#e60a14" fill="none"/>
<path d="M666.0 194.8C673.5 196.9 697.7 202.8 711.0 207.5C724.3 212.2 736.0 215.8 746.0 223.0C756.0 230.2 763.1 240.1 771.0 250.5C778.9 260.9 785.6 273.0 793.5 285.5C801.4 298.0 810.2 311.3 818.5 325.5C826.8 339.7 836.6 356.8 843.5 370.5C850.4 384.2 857.1 401.8 859.8 408.0" stroke="#d9790f" fill="none"/>
<path d="M666.0 211.0C672.2 211.8 691.0 212.5 703.5 215.5C716.0 218.5 730.6 222.5 741.0 229.2C751.4 235.9 757.7 245.3 766.0 255.5C774.3 265.7 782.7 278.0 791.0 290.5C799.3 303.0 807.7 316.3 816.0 330.5C824.3 344.7 834.5 362.6 841.0 375.5C847.5 388.4 852.5 402.6 854.8 408.0" stroke="#d9790f" fill="none"/>
<path d="M666.0 202.2C672.2 206.2 689.8 218.4 703.5 226.0C717.2 233.6 737.2 239.3 748.5 248.0C759.8 256.7 763.1 266.3 771.0 278.0C778.9 289.7 787.7 303.8 796.0 318.0C804.3 332.2 813.5 348.0 821.0 363.0C828.5 378.0 837.7 400.5 841.0 408.0" stroke="#d9790f" fill="none"/>
<path d="M703.5 230.5C708.1 232.6 722.2 235.1 731.0 243.0C739.8 250.9 748.1 264.7 756.0 278.0C763.9 291.3 771.0 308.0 778.5 323.0C786.0 338.0 794.3 353.8 801.0 368.0C807.7 382.2 815.6 401.3 818.5 408.0" stroke="#d9790f" fill="none"/>
<path d="M726.0 240.5C730.2 243.4 742.7 247.6 751.0 258.0C759.3 268.4 767.7 288.0 776.0 303.0C784.3 318.0 792.2 330.5 801.0 348.0C809.8 365.5 823.9 398.0 828.5 408.0" stroke="#d9790f" fill="none"/>
<path d="M666.0 219.2C670.2 220.6 681.0 223.9 691.0 227.5C701.0 231.1 720.2 238.8 726.0 241.0" stroke="#d9790f" fill="none" stroke-width="3" opacity="0.8"/>
<path d="M666.0 220.5C670.2 221.8 681.0 224.8 691.0 228.5C701.0 232.2 720.2 240.2 726.0 242.5" stroke="#d9790f" fill="none" stroke-width="6" stroke-dasharray="1 2"/>
<path d="M666.0 255.5C670.2 257.2 681.4 260.1 691.0 265.5C700.6 270.9 713.9 278.4 723.5 288.0C733.1 297.6 740.2 309.7 748.5 323.0C756.8 336.3 765.6 353.8 773.5 368.0C781.4 382.2 792.2 401.3 796.0 408.0" stroke="#d9790f" fill="none"/>
<path d="M666.0 253.0C670.6 251.8 685.6 243.4 693.5 245.5C701.4 247.6 705.6 255.9 713.5 265.5C721.4 275.1 732.2 289.2 741.0 303.0C749.8 316.8 757.7 333.0 766.0 348.0C774.3 363.0 785.6 383.0 791.0 393.0C796.4 403.0 797.2 405.5 798.5 408.0" stroke="#e60a14" fill="none"/>
<path d="M666.0 268.0C670.2 269.7 682.7 272.2 691.0 278.0C699.3 283.8 707.7 292.2 716.0 303.0C724.3 313.8 732.7 328.8 741.0 343.0C749.3 357.2 760.2 377.2 766.0 388.0C771.8 398.8 774.3 404.7 776.0 408.0" stroke="#d9790f" fill="none"/>
<path d="M666.0 275.5C669.3 277.6 678.5 280.9 686.0 288.0C693.5 295.1 702.7 305.9 711.0 318.0C719.3 330.1 728.1 345.5 736.0 360.5C743.9 375.5 754.8 400.1 758.5 408.0" stroke="#d9790f" fill="none"/>
<path d="M666.0 298.5C670.2 300.1 682.7 299.8 691.0 308.0C699.3 316.2 707.7 333.0 716.0 348.0C724.3 363.0 736.0 388.0 741.0 398.0C746.0 408.0 745.2 406.3 746.0 408.0" stroke="#d9790f" fill="none"/>
<path d="M666.0 284.8C671.0 290.3 687.7 305.4 696.0 318.0C704.3 330.6 710.2 347.2 716.0 360.5C721.8 373.8 727.9 390.1 731.0 398.0C734.1 405.9 734.2 406.3 734.8 408.0" stroke="#e60a14" fill="none"/>
<path d="M666.0 298.0C669.3 302.2 679.3 312.2 686.0 323.0C692.7 333.8 699.8 348.8 706.0 363.0C712.2 377.2 720.6 400.5 723.5 408.0" stroke="#d9790f" fill="none"/>
<path d="M666.0 318.5C668.5 321.8 675.6 328.9 681.0 338.0C686.4 347.1 693.1 361.3 698.5 373.0C703.9 384.7 711.0 402.2 713.5 408.0" stroke="#d9790f" fill="none"/>
<path d="M666.0 338.5C668.1 340.9 673.9 344.8 678.5 353.0C683.1 361.2 689.8 378.8 693.5 388.0C697.2 397.2 699.8 404.7 701.0 408.0" stroke="#d9790f" fill="none"/>
<path d="M666.0 345.5C667.7 349.2 672.2 357.6 676.0 368.0C679.8 378.4 686.4 401.3 688.5 408.0" stroke="#d9790f" fill="none"/>
<path d="M666.0 365.5C667.7 370.9 673.9 390.9 676.0 398.0C678.1 405.1 678.1 406.3 678.5 408.0" stroke="#d9790f" fill="none"/>
<path d="M666.0 398.0 L671.0 408.0" stroke="#e60a14" fill="none"/>
<path d="M666.0 233.0C671.0 235.5 686.4 241.3 696.0 248.0C705.6 254.7 714.8 263.0 723.5 273.0C732.2 283.0 740.2 294.7 748.5 308.0C756.8 321.3 764.8 336.3 773.5 353.0C782.2 369.7 796.4 398.8 801.0 408.0" stroke="#d9790f" fill="none"/>
<path d="M666.0 249.2C668.5 249.8 675.6 251.5 681.0 253.0C686.4 254.5 691.8 253.4 698.5 258.0C705.2 262.6 717.2 276.8 721.0 280.5" stroke="#d9790f" fill="none"/>
<path d="M666.0 230.5 L694.8 253.0 L684.8 264.2 L666.0 248.0" stroke="#ffffff" fill="none"/>
<path d="M864.8 148.0C866.2 151.3 869.1 159.7 873.5 168.0C877.9 176.3 884.8 188.8 891.0 198.0C897.2 207.2 902.7 213.0 911.0 223.0C919.3 233.0 932.7 248.8 941.0 258.0C949.3 267.2 956.8 271.3 961.0 278.0C965.2 284.7 965.2 294.7 966.0 298.0" stroke="#d9790f" fill="none"/>
<path d="M878.5 165.5C884.8 174.2 905.6 202.6 916.0 218.0C926.4 233.4 936.8 251.3 941.0 258.0" stroke="#8a5048" fill="none" stroke-dasharray="6 4"/>
<path d="M873.5 148.0C876.4 153.0 883.9 167.2 891.0 178.0C898.1 188.8 907.7 201.8 916.0 213.0C924.3 224.2 932.7 234.7 941.0 245.5C949.3 256.3 961.8 272.6 966.0 278.0" stroke="#d9790f" fill="none"/>
<path d="M884.8 148.0C888.3 154.7 898.7 175.1 906.0 188.0C913.3 200.9 918.5 212.2 928.5 225.5C938.5 238.8 959.8 260.9 966.0 268.0" stroke="#e60a14" fill="none"/>
<path d="M901.0 148.0C904.8 154.2 912.7 168.8 923.5 185.5C934.3 202.2 958.9 237.6 966.0 248.0" stroke="#d9790f" fill="none"/>
<path d="M916.0 148.0C920.2 154.2 932.7 173.0 941.0 185.5C949.3 198.0 961.8 216.8 966.0 223.0" stroke="#d9790f" fill="none"/>
<path d="M928.5 148.0 L966.0 203.0" stroke="#d9790f" fill="none"/>
<path d="M943.5 148.0 L966.0 180.5" stroke="#d9790f" fill="none"/>
<path d="M951.0 148.0 L966.0 170.5" stroke="#e60a14" fill="none"/>
<path d="M898.5 248.0C901.0 254.7 908.5 275.5 913.5 288.0C918.5 300.5 923.9 310.5 928.5 323.0C933.1 335.5 937.7 348.8 941.0 363.0C944.3 377.2 947.2 400.5 948.5 408.0" stroke="#d9790f" fill="none"/>
<path d="M916.0 260.5C919.8 260.9 931.4 259.7 938.5 263.0C945.6 266.3 954.3 273.0 958.5 280.5C962.7 288.0 962.2 302.6 963.5 308.0C964.8 313.4 965.6 312.2 966.0 313.0" stroke="#d9790f" fill="none"/>
<text x="667.2" y="161.0" fill="#ffffff" font-size="11.5">543.3</text>
<text x="795.5" y="159.2" fill="#ffffff" font-size="11.5">545 4</text>
<text x="826.0" y="163.0" fill="#ffffff" font-size="11.5">548.7</text>
<text x="841.0" y="233.0" fill="#ffffff" font-size="11.5">545.5</text>
<text x="881.0" y="323.0" fill="#ffffff" font-size="11.5">545.7</text>
<text x="946.0" y="402.2" fill="#ffffff" font-size="11.5">546.0</text>
<text x="791.0" y="400.5" fill="#e60a14" font-size="11" transform="rotate(60 791.0 400.5)">55</text>
<path d="M1202.2 148.0C1204.5 154.2 1212.0 170.9 1216.0 185.5C1220.0 200.1 1223.7 218.8 1226.0 235.5C1228.3 252.2 1229.4 268.8 1229.8 285.5C1230.2 302.2 1230.0 320.9 1228.5 335.5C1227.0 350.1 1223.5 360.9 1221.0 373.0C1218.5 385.1 1214.8 402.2 1213.5 408.0" stroke="#ffffff" fill="none"/>
<path d="M1212.2 148.0C1214.5 154.2 1222.2 170.9 1226.0 185.5C1229.8 200.1 1232.5 218.8 1234.8 235.5C1237.1 252.2 1239.2 268.8 1239.8 285.5C1240.4 302.2 1239.5 320.9 1238.5 335.5C1237.5 350.1 1235.4 360.9 1233.5 373.0C1231.6 385.1 1228.2 402.2 1227.2 408.0" stroke="#ffffff" fill="none"/>
<path d="M1236.0 148.0C1237.7 154.2 1243.3 170.9 1246.0 185.5C1248.7 200.1 1250.7 218.8 1252.2 235.5C1253.7 252.2 1254.6 268.8 1254.8 285.5C1255.0 302.2 1254.5 320.9 1253.5 335.5C1252.5 350.1 1250.2 360.9 1248.5 373.0C1246.8 385.1 1244.3 402.2 1243.5 408.0" stroke="#ffffff" fill="none"/>
<path d="M1248.5 148.0C1250.2 154.2 1255.8 173.0 1258.5 185.5C1261.2 198.0 1263.5 213.4 1264.8 223.0C1266.0 232.6 1265.8 239.7 1266.0 243.0" stroke="#ffffff" fill="none"/>
<path d="M1254.8 148.0 L1266.0 190.5" stroke="#ffffff" fill="none"/>
<path d="M1183.5 148.0C1186.4 153.4 1195.6 168.0 1201.0 180.5C1206.4 193.0 1212.0 207.6 1216.0 223.0C1220.0 238.4 1222.9 256.3 1224.8 273.0C1226.7 289.7 1227.8 307.2 1227.2 323.0C1226.6 338.8 1223.5 353.8 1221.0 368.0C1218.5 382.2 1213.7 401.3 1212.2 408.0" stroke="#00d4e0" fill="none"/>
<circle cx="1219.8" cy="217.5" r="4.5" stroke="#ffffff" fill="none"/>
<path d="M1216.8 214.5l6 6M1222.8 214.5l-6 6" stroke="#fff"/>
<circle cx="1221.0" cy="333.0" r="4.5" stroke="#ffffff" fill="none"/>
<path d="M1218.0 330.0l6 6M1224.0 330.0l-6 6" stroke="#fff"/>
<path d="M1216.0 148.0C1218.5 151.3 1225.2 163.8 1231.0 168.0C1236.8 172.2 1245.2 172.6 1251.0 173.0C1256.8 173.4 1263.5 170.9 1266.0 170.5" stroke="#d9790f" fill="none"/>
<path d="M1199.8 180.5C1199.8 185.5 1197.1 203.4 1199.8 210.5C1202.5 217.6 1210.8 219.7 1216.0 223.0C1221.2 226.3 1227.7 224.2 1231.0 230.5C1234.3 236.8 1233.9 252.6 1236.0 260.5C1238.1 268.4 1238.5 273.4 1243.5 278.0C1248.5 282.6 1262.2 286.3 1266.0 288.0" stroke="#d9790f" fill="none"/>
<path d="M1144.8 148.0C1147.9 153.0 1157.7 166.3 1163.5 178.0C1169.3 189.7 1175.5 204.2 1179.8 218.0C1184.0 231.8 1187.0 246.3 1189.0 260.5C1191.0 274.7 1191.6 290.1 1191.5 303.0C1191.4 315.9 1188.4 328.0 1188.5 338.0C1188.6 348.0 1190.3 354.7 1192.2 363.0C1194.1 371.3 1197.9 380.5 1199.8 388.0C1201.7 395.5 1202.9 404.7 1203.5 408.0" stroke="#d9790f" fill="none"/>
<path d="M1144.8 148.0C1147.9 153.0 1157.7 166.3 1163.5 178.0C1169.3 189.7 1175.5 204.2 1179.8 218.0C1184.0 231.8 1187.0 246.3 1189.0 260.5C1191.0 274.7 1191.6 290.1 1191.5 303.0C1191.4 315.9 1188.4 328.0 1188.5 338.0C1188.6 348.0 1190.3 354.7 1192.2 363.0C1194.1 371.3 1197.9 380.5 1199.8 388.0C1201.7 395.5 1202.9 404.7 1203.5 408.0" stroke="#d9790f" fill="none" stroke-width="10" stroke-dasharray="1 5"/>
<path d="M1141.0 148.0C1143.9 153.4 1152.9 168.4 1158.5 180.5C1164.1 192.6 1170.6 207.2 1174.8 220.5C1179.0 233.8 1181.6 246.8 1183.5 260.5C1185.4 274.2 1186.0 291.8 1186.0 303.0C1186.0 314.2 1183.9 323.8 1183.5 328.0" stroke="#d9790f" fill="none"/>
<path d="M1148.5 148.0C1151.4 152.6 1160.2 164.2 1166.0 175.5C1171.8 186.8 1178.9 201.3 1183.5 215.5C1188.1 229.7 1191.4 245.9 1193.5 260.5C1195.6 275.1 1196.2 289.2 1196.0 303.0C1195.8 316.8 1191.4 330.5 1192.2 343.0C1193.0 355.5 1198.7 367.2 1201.0 378.0C1203.3 388.8 1205.2 403.0 1206.0 408.0" stroke="#d9790f" fill="none"/>
<path d="M1166.0 148.0C1169.3 154.2 1180.4 170.9 1186.0 185.5C1191.6 200.1 1196.7 218.8 1199.8 235.5C1202.9 252.2 1204.6 270.1 1204.8 285.5C1205.0 300.9 1203.3 316.3 1201.0 328.0C1198.7 339.7 1194.3 349.0 1191.0 355.5C1187.7 362.0 1185.2 365.6 1181.0 366.8C1176.8 368.1 1171.4 366.1 1166.0 363.0C1160.6 359.9 1155.2 355.5 1148.5 348.0C1141.8 340.5 1133.1 329.7 1126.0 318.0C1118.9 306.3 1112.7 290.5 1106.0 278.0C1099.3 265.5 1092.7 254.2 1086.0 243.0C1079.3 231.8 1073.5 221.3 1066.0 210.5C1058.5 199.7 1048.5 188.4 1041.0 178.0C1033.5 167.6 1024.3 153.0 1021.0 148.0" stroke="#e60a14" fill="none"/>
<path d="M1173.5 148.0C1176.8 154.2 1187.9 170.9 1193.5 185.5C1199.1 200.1 1204.1 218.8 1207.2 235.5C1210.3 252.2 1212.0 269.2 1212.2 285.5C1212.4 301.8 1211.2 319.2 1208.5 333.0C1205.8 346.8 1200.6 360.5 1196.0 368.0C1191.4 375.5 1186.8 377.2 1181.0 378.0C1175.2 378.8 1167.7 376.8 1161.0 373.0C1154.3 369.2 1147.7 363.0 1141.0 355.5C1134.3 348.0 1127.7 338.4 1121.0 328.0C1114.3 317.6 1104.3 298.8 1101.0 293.0" stroke="#d9790f" fill="none"/>
<path d="M1224.8 273.0C1224.2 281.3 1224.1 306.3 1221.0 323.0C1217.9 339.7 1211.8 362.6 1206.0 373.0C1200.2 383.4 1193.5 383.8 1186.0 385.5C1178.5 387.2 1169.3 386.8 1161.0 383.0C1152.7 379.2 1143.9 371.3 1136.0 363.0C1128.1 354.7 1120.2 343.8 1113.5 333.0C1106.8 322.2 1098.9 303.8 1096.0 298.0" stroke="#d9790f" fill="none"/>
<path d="M1133.5 148.0C1136.4 153.0 1145.6 167.6 1151.0 178.0C1156.4 188.4 1162.2 198.8 1166.0 210.5C1169.8 222.2 1172.2 230.1 1173.5 248.0C1174.8 265.9 1172.7 299.2 1173.5 318.0C1174.3 336.8 1176.4 349.2 1178.5 360.5C1180.6 371.8 1183.5 377.6 1186.0 385.5C1188.5 393.4 1192.2 404.2 1193.5 408.0" stroke="#0a8a0a" fill="none" stroke-dasharray="8 3 1 3"/>
<path d="M1181 334l-13.500 21h27zM1181 341l-8 12h16z" stroke="#e01010" fill="none"/>
<path d="M1076.0 148.0C1076.6 152.2 1079.8 165.5 1079.8 173.0C1079.8 180.5 1075.0 185.1 1076.0 193.0C1077.0 200.9 1082.7 211.3 1086.0 220.5C1089.3 229.7 1092.7 240.5 1096.0 248.0C1099.3 255.5 1102.2 258.4 1106.0 265.5C1109.8 272.6 1114.3 283.0 1118.5 290.5C1122.7 298.0 1126.4 303.8 1131.0 310.5C1135.6 317.2 1142.7 324.2 1146.0 330.5C1149.3 336.8 1150.0 340.9 1151.0 348.0C1152.0 355.1 1151.4 366.3 1152.2 373.0C1153.0 379.7 1155.0 382.2 1156.0 388.0C1157.0 393.8 1158.1 404.7 1158.5 408.0" stroke="#d9790f" fill="none"/>
<path d="M1076.0 148.0C1076.6 152.2 1079.8 165.5 1079.8 173.0C1079.8 180.5 1075.0 185.1 1076.0 193.0C1077.0 200.9 1082.7 211.3 1086.0 220.5C1089.3 229.7 1092.7 240.5 1096.0 248.0C1099.3 255.5 1102.2 258.4 1106.0 265.5C1109.8 272.6 1114.3 283.0 1118.5 290.5C1122.7 298.0 1126.4 303.8 1131.0 310.5C1135.6 317.2 1142.7 324.2 1146.0 330.5C1149.3 336.8 1150.0 340.9 1151.0 348.0C1152.0 355.1 1151.4 366.3 1152.2 373.0C1153.0 379.7 1155.0 382.2 1156.0 388.0C1157.0 393.8 1158.1 404.7 1158.5 408.0" stroke="#d9790f" fill="none" stroke-width="9" stroke-dasharray="1 5"/>
<path d="M1072.2 148.0C1072.8 152.2 1076.0 165.5 1076.0 173.0C1076.0 180.5 1071.2 185.1 1072.2 193.0C1073.2 200.9 1078.9 211.3 1082.2 220.5C1085.5 229.7 1088.9 240.5 1092.2 248.0C1095.5 255.5 1098.4 258.4 1102.2 265.5C1106.0 272.6 1110.6 283.0 1114.8 290.5C1119.0 298.0 1122.6 303.8 1127.2 310.5C1131.8 317.2 1138.9 324.2 1142.2 330.5C1145.5 336.8 1146.4 345.1 1147.2 348.0" stroke="#d9790f" fill="none"/>
<path d="M1098.5 258.0C1102.2 257.0 1116.6 251.4 1121.0 251.8C1125.4 252.2 1124.4 254.5 1124.8 260.5C1125.2 266.5 1124.5 281.8 1123.5 288.0C1122.5 294.2 1119.3 296.3 1118.5 298.0" stroke="#d9790f" fill="none"/>
<path d="M1141.0 320.5C1144.3 319.2 1154.8 312.6 1161.0 313.0C1167.2 313.4 1174.3 322.2 1178.5 323.0C1182.7 323.8 1184.8 318.8 1186.0 318.0" stroke="#d9790f" fill="none"/>
<path d="M1098.5 150.5C1100.2 152.6 1102.2 159.7 1108.5 163.0C1114.8 166.3 1128.1 168.2 1136.0 170.5C1143.9 172.8 1151.4 176.4 1156.0 176.8C1160.6 177.2 1162.2 173.6 1163.5 173.0" stroke="#d9790f" fill="none"/>
<path d="M1017.2 148.0C1019.7 150.5 1026.4 157.6 1032.2 163.0C1038.0 168.4 1048.0 176.1 1052.2 180.5C1056.4 184.9 1056.4 187.8 1057.2 189.2" stroke="#d9790f" fill="none"/>
<path d="M1017.2 148.0C1019.7 150.5 1026.4 157.6 1032.2 163.0C1038.0 168.4 1048.0 176.1 1052.2 180.5C1056.4 184.9 1056.4 187.8 1057.2 189.2" stroke="#d9790f" fill="none" stroke-width="10" stroke-dasharray="1 5"/>
<path d="M1046.0 260.5C1048.5 263.4 1056.4 270.9 1061.0 278.0C1065.6 285.1 1070.6 293.8 1073.5 303.0C1076.4 312.2 1077.9 323.0 1078.5 333.0C1079.1 343.0 1075.1 353.8 1077.2 363.0C1079.3 372.2 1086.2 380.5 1091.0 388.0C1095.8 395.5 1103.5 404.7 1106.0 408.0" stroke="#d9790f" fill="none"/>
<path d="M1046.0 260.5C1048.5 263.4 1056.4 270.9 1061.0 278.0C1065.6 285.1 1070.6 293.8 1073.5 303.0C1076.4 312.2 1077.9 323.0 1078.5 333.0C1079.1 343.0 1075.1 353.8 1077.2 363.0C1079.3 372.2 1086.2 380.5 1091.0 388.0C1095.8 395.5 1103.5 404.7 1106.0 408.0" stroke="#d9790f" fill="none" stroke-width="10" stroke-dasharray="1 5"/>
<path d="M1042.2 263.0C1044.7 265.9 1052.6 273.4 1057.2 280.5C1061.8 287.6 1066.9 296.8 1069.8 305.5C1072.7 314.2 1074.2 323.4 1074.8 333.0C1075.4 342.6 1073.7 358.0 1073.5 363.0" stroke="#d9790f" fill="none"/>
<path d="M971.0 168.0C972.7 173.0 977.2 187.6 981.0 198.0C984.8 208.4 989.3 219.7 993.5 230.5C997.7 241.3 1001.8 251.8 1006.0 263.0C1010.2 274.2 1014.3 287.2 1018.5 298.0C1022.7 308.8 1026.4 317.2 1031.0 328.0C1035.6 338.8 1040.2 349.7 1046.0 363.0C1051.8 376.3 1062.7 400.5 1066.0 408.0" stroke="#d9790f" fill="none"/>
<path d="M971.0 168.0C972.7 173.0 977.2 187.6 981.0 198.0C984.8 208.4 989.3 219.7 993.5 230.5C997.7 241.3 1001.8 251.8 1006.0 263.0C1010.2 274.2 1014.3 287.2 1018.5 298.0C1022.7 308.8 1026.4 317.2 1031.0 328.0C1035.6 338.8 1040.2 349.7 1046.0 363.0C1051.8 376.3 1062.7 400.5 1066.0 408.0" stroke="#d9790f" fill="none" stroke-width="8" stroke-dasharray="1 5"/>
<path d="M968.0 168.0C969.7 173.0 974.2 187.6 978.0 198.0C981.8 208.4 986.3 219.7 990.5 230.5C994.7 241.3 998.8 251.8 1003.0 263.0C1007.2 274.2 1011.3 287.2 1015.5 298.0C1019.7 308.8 1023.4 317.2 1028.0 328.0C1032.6 338.8 1037.2 349.7 1043.0 363.0C1048.8 376.3 1059.7 400.5 1063.0 408.0" stroke="#d9790f" fill="none"/>
<path d="M974.5 168.0C976.2 173.0 980.8 187.6 984.5 198.0C988.2 208.4 992.8 219.7 997.0 230.5C1001.2 241.3 1005.3 251.8 1009.5 263.0C1013.7 274.2 1017.8 287.2 1022.0 298.0C1026.2 308.8 1029.9 317.2 1034.5 328.0C1039.1 338.8 1043.7 349.7 1049.5 363.0C1055.3 376.3 1066.2 400.5 1069.5 408.0" stroke="#d9790f" fill="none"/>
<path d="M966.0 223.0C967.2 233.8 971.0 271.3 973.5 288.0C976.0 304.7 976.8 310.9 981.0 323.0C985.2 335.1 992.7 346.3 998.5 360.5C1004.3 374.7 1013.1 400.1 1016.0 408.0" stroke="#d9790f" fill="none" stroke-width="7" stroke-dasharray="1 3.5"/>
<path d="M966.0 180.5C967.7 187.6 974.8 205.1 976.0 223.0C977.2 240.9 972.7 271.3 973.5 288.0C974.3 304.7 976.8 310.9 981.0 323.0C985.2 335.1 992.7 346.3 998.5 360.5C1004.3 374.7 1013.1 400.1 1016.0 408.0" stroke="#d9790f" fill="none"/>
<path d="M988.5 148.0C992.7 154.2 1006.4 173.4 1013.5 185.5C1020.6 197.6 1027.2 213.0 1031.0 220.5C1034.8 228.0 1035.2 228.8 1036.0 230.5" stroke="#ffffff" fill="none" stroke-dasharray="10 3 2 3"/>
<path d="M1038.5 230.5C1037.5 233.4 1032.6 241.8 1032.2 248.0C1031.8 254.2 1032.9 260.5 1036.0 268.0C1039.1 275.5 1046.0 284.7 1051.0 293.0C1056.0 301.3 1062.5 308.8 1066.0 318.0C1069.5 327.2 1071.0 338.8 1072.2 348.0C1073.5 357.2 1071.6 365.1 1073.5 373.0C1075.4 380.9 1080.6 389.7 1083.5 395.5C1086.4 401.3 1089.8 405.9 1091.0 408.0" stroke="#ffffff" fill="none" stroke-dasharray="10 4"/>
<path d="M1036.0 233.0C1043.1 241.3 1066.8 267.2 1078.5 283.0C1090.2 298.8 1099.1 316.8 1106.0 328.0C1112.9 339.2 1117.5 346.8 1119.8 350.5" stroke="#ffffff" fill="none" stroke-dasharray="12 4 2 4"/>
<path d="M998.5 148.0C1003.5 154.2 1019.5 173.0 1028.5 185.5C1037.5 198.0 1048.0 213.4 1052.2 223.0C1056.4 232.6 1050.4 235.9 1053.5 243.0C1056.6 250.1 1064.8 256.3 1071.0 265.5C1077.2 274.7 1085.2 288.4 1091.0 298.0C1096.8 307.6 1100.2 314.7 1106.0 323.0C1111.8 331.3 1118.5 340.5 1126.0 348.0C1133.5 355.5 1141.4 362.2 1151.0 368.0C1160.6 373.8 1174.3 382.2 1183.5 383.0C1192.7 383.8 1202.2 374.7 1206.0 373.0" stroke="#d9790f" fill="none"/>
<path d="M966.0 155.5C971.0 165.1 988.5 196.8 996.0 213.0C1003.5 229.2 1005.2 240.5 1011.0 253.0C1016.8 265.5 1024.3 276.3 1031.0 288.0C1037.7 299.7 1044.3 312.2 1051.0 323.0C1057.7 333.8 1067.7 348.0 1071.0 353.0" stroke="#d9790f" fill="none"/>
<path d="M1041.0 178.0C1045.2 185.1 1058.1 207.6 1066.0 220.5C1073.9 233.4 1081.8 244.2 1088.5 255.5C1095.2 266.8 1099.8 277.2 1106.0 288.0C1112.2 298.8 1120.2 312.2 1126.0 320.5C1131.8 328.8 1138.5 335.1 1141.0 338.0" stroke="#d9790f" fill="none"/>
<path d="M1006.0 148.0C1011.0 153.8 1027.7 171.8 1036.0 183.0C1044.3 194.2 1052.7 210.1 1056.0 215.5" stroke="#d9790f" fill="none"/>
<path d="M981.0 148.0C985.2 155.1 998.1 176.8 1006.0 190.5C1013.9 204.2 1023.1 218.0 1028.5 230.5C1033.9 243.0 1034.3 254.2 1038.5 265.5C1042.7 276.8 1051.0 292.6 1053.5 298.0" stroke="#d9790f" fill="none"/>
<path d="M966.0 338.0C968.5 340.9 975.6 349.7 981.0 355.5C986.4 361.3 990.2 368.4 998.5 373.0C1006.8 377.6 1019.8 380.9 1031.0 383.0C1042.2 385.1 1057.2 385.5 1066.0 385.5C1074.8 385.5 1080.6 383.4 1083.5 383.0" stroke="#d9790f" fill="none"/>
<path d="M1106.0 343.0C1108.5 348.0 1114.3 364.7 1121.0 373.0C1127.7 381.3 1136.0 388.4 1146.0 393.0C1156.0 397.6 1172.2 401.3 1181.0 400.5C1189.8 399.7 1195.6 390.1 1198.5 388.0" stroke="#d9790f" fill="none"/>
<path d="M1083.5 338.0C1085.6 343.0 1090.6 359.2 1096.0 368.0C1101.4 376.8 1108.5 383.8 1116.0 390.5C1123.5 397.2 1136.8 405.1 1141.0 408.0" stroke="#d9790f" fill="none"/>
<path d="M966.0 348.0C968.5 354.2 976.8 375.5 981.0 385.5C985.2 395.5 989.3 404.2 991.0 408.0" stroke="#00d4e0" fill="none"/>
<path d="M966.0 268.0C966.8 273.0 966.8 286.3 971.0 298.0C975.2 309.7 982.7 325.5 991.0 338.0C999.3 350.5 1011.4 364.7 1021.0 373.0C1030.6 381.3 1040.6 382.2 1048.5 388.0C1056.4 393.8 1065.2 404.7 1068.5 408.0" stroke="#e60a14" fill="none"/>
<path d="M1016.0 168.0C1021.4 175.5 1040.2 199.7 1048.5 213.0C1056.8 226.3 1058.1 235.5 1066.0 248.0C1073.9 260.5 1091.0 281.3 1096.0 288.0" stroke="#8a5048" fill="none" stroke-dasharray="6 4"/>
<path d="M991.0 273.0C993.1 281.3 998.1 307.2 1003.5 323.0C1008.9 338.8 1020.2 360.5 1023.5 368.0" stroke="#8a5048" fill="none" stroke-dasharray="6 4"/>
<path d="M966.0 248.0C967.7 253.0 971.8 272.6 976.0 278.0C980.2 283.4 990.2 278.8 991.0 280.5C991.8 282.2 982.7 286.8 981.0 288.0" stroke="#d9790f" fill="none"/>
<text x="963.5" y="169.2" fill="#ffffff" font-size="11.5">557.9</text>
<text x="1077.2" y="204.2" fill="#ffffff" font-size="11.5">562.4</text>
<text x="1012.2" y="233.0" fill="#ffffff" font-size="11.5">557.7</text>
<text x="1133.5" y="270.0" fill="#ffffff" font-size="11.5">562 3</text>
<text x="1230.5" y="222.2" fill="#ffffff" font-size="11.5">558.5</text>
<text x="1029.8" y="321.8" fill="#ffffff" font-size="11.5">556.7</text>
<text x="1087.2" y="336.0" fill="#ffffff" font-size="11.5">558.4</text>
<text x="1151.5" y="335.0" fill="#ffffff" font-size="11.5">561.7</text>
<text x="986.0" y="342.2" fill="#ffffff" font-size="11.5">552.5</text>
<text x="1236.0" y="343.0" fill="#ffffff" font-size="11.5">557.5</text>
<text x="1142.2" y="398.0" fill="#ffffff" font-size="11.5">558.2</text>
<text x="1013.5" y="406.8" fill="#ffffff" font-size="11.5">551.9</text>
<path d="M1383.5 148.0C1377.7 161.3 1359.8 204.7 1348.5 228.0C1337.2 251.3 1325.6 269.7 1316.0 288.0C1306.4 306.3 1296.8 327.2 1291.0 338.0C1285.2 348.8 1282.7 350.5 1281.0 353.0" stroke="#00d4e0" fill="none"/>
<path d="M1402.2 148.0C1396.2 161.8 1377.9 203.8 1366.0 230.5C1354.1 257.2 1342.2 284.2 1331.0 308.0C1319.8 331.8 1306.8 356.3 1298.5 373.0C1290.2 389.7 1283.9 402.2 1281.0 408.0" stroke="#ffffff" fill="none"/>
<path d="M1449.8 148.0C1444.2 160.5 1427.5 198.0 1416.0 223.0C1404.5 248.0 1392.2 273.8 1381.0 298.0C1369.8 322.2 1356.8 349.7 1348.5 368.0C1340.2 386.3 1333.9 401.3 1331.0 408.0" stroke="#ffffff" fill="none"/>
<path d="M1453.5 148.0C1447.7 160.9 1429.8 200.9 1418.5 225.5C1407.2 250.1 1396.0 274.2 1386.0 295.5C1376.0 316.8 1363.1 343.4 1358.5 353.0" stroke="#00d4e0" fill="none"/>
<path d="M1429.8 135.5 L1303.5 408.0" stroke="#ffffff" fill="none" stroke-dasharray="18 45"/>
<path d="M1391.0 148.0 L1278.5 388.0" stroke="#8a5048" fill="none" stroke-dasharray="7 25"/>
<path d="M1446.0 163.0 L1341.0 388.0" stroke="#8a5048" fill="none" stroke-dasharray="7 25"/>
<path d="M1473.5 148.0C1469.8 156.3 1459.8 179.7 1451.0 198.0C1442.2 216.3 1430.2 240.1 1421.0 258.0C1411.8 275.9 1400.2 297.6 1396.0 305.5" stroke="#e60a14" fill="none"/>
<path d="M1486.0 148.0C1482.7 155.5 1473.5 177.2 1466.0 193.0C1458.5 208.8 1450.2 226.3 1441.0 243.0C1431.8 259.7 1420.2 278.8 1411.0 293.0C1401.8 307.2 1392.2 316.3 1386.0 328.0C1379.8 339.7 1375.6 357.2 1373.5 363.0" stroke="#d9790f" fill="none"/>
<path d="M1486.0 148.0C1482.7 155.5 1473.5 177.2 1466.0 193.0C1458.5 208.8 1450.2 226.3 1441.0 243.0C1431.8 259.7 1420.2 278.8 1411.0 293.0C1401.8 307.2 1392.2 316.3 1386.0 328.0C1379.8 339.7 1375.6 357.2 1373.5 363.0" stroke="#d9790f" fill="none" stroke-width="10" stroke-dasharray="1 5"/>
<path d="M1492.2 148.0C1488.9 155.5 1479.7 177.2 1472.2 193.0C1464.7 208.8 1456.6 225.9 1447.2 243.0C1437.8 260.1 1421.2 286.8 1416.0 295.5" stroke="#d9790f" fill="none"/>
<path d="M1480.5 148.0C1477.2 155.5 1468.0 177.2 1460.5 193.0C1453.0 208.8 1444.6 226.5 1435.5 243.0C1426.4 259.5 1414.7 278.5 1406.0 291.8C1397.3 305.1 1387.2 317.8 1383.5 323.0" stroke="#d9790f" fill="none"/>
<path d="M1296.0 148.0C1297.7 156.3 1303.1 180.5 1306.0 198.0C1308.9 215.5 1312.2 243.8 1313.5 253.0" stroke="#d9790f" fill="none"/>
<path d="M1296.0 148.0C1297.7 156.3 1303.1 180.5 1306.0 198.0C1308.9 215.5 1312.2 243.8 1313.5 253.0" stroke="#d9790f" fill="none" stroke-width="12" stroke-dasharray="1 5"/>
<path d="M1332.2 148.0C1330.8 156.3 1326.8 180.5 1324.0 198.0C1321.2 215.5 1316.7 243.8 1315.2 253.0" stroke="#d9790f" fill="none"/>
<path d="M1332.2 148.0C1330.8 156.3 1326.8 180.5 1324.0 198.0C1321.2 215.5 1316.7 243.8 1315.2 253.0" stroke="#d9790f" fill="none" stroke-width="12" stroke-dasharray="1 5"/>
<path d="M1313.5 253.0C1312.2 257.2 1307.7 270.5 1306.0 278.0C1304.3 285.5 1303.9 294.7 1303.5 298.0" stroke="#d9790f" fill="none"/>
<path d="M1313.5 253.0C1312.2 257.2 1307.7 270.5 1306.0 278.0C1304.3 285.5 1303.9 294.7 1303.5 298.0" stroke="#d9790f" fill="none" stroke-width="10" stroke-dasharray="1 5"/>
<path d="M1270.5 148.0C1272.2 153.0 1275.5 164.2 1281.0 178.0C1286.5 191.8 1297.9 217.8 1303.5 230.5C1309.1 243.2 1311.0 255.4 1314.8 254.2C1318.5 252.9 1321.6 236.5 1326.0 223.0C1330.4 209.5 1337.2 185.5 1341.0 173.0C1344.8 160.5 1347.2 152.2 1348.5 148.0" stroke="#e60a14" fill="none"/>
<path d="M1313.5 148.0 L1319.8 158.0 L1326.0 148.0" stroke="#e60a14" fill="none"/>
<path d="M1281.0 148.0C1282.7 156.3 1288.9 181.3 1291.0 198.0C1293.1 214.7 1292.7 233.0 1293.5 248.0C1294.3 263.0 1294.3 279.7 1296.0 288.0C1297.7 296.3 1300.2 298.0 1303.5 298.0C1306.8 298.0 1313.9 289.7 1316.0 288.0" stroke="#d9790f" fill="none"/>
<path d="M1288.5 148.0C1290.2 156.3 1296.0 181.3 1298.5 198.0C1301.0 214.7 1302.0 234.7 1303.5 248.0C1305.0 261.3 1306.6 273.0 1307.2 278.0" stroke="#d9790f" fill="none"/>
<path d="M1341.0 148.0C1339.5 156.3 1335.3 181.3 1332.2 198.0C1329.1 214.7 1324.9 234.7 1322.2 248.0C1319.5 261.3 1317.0 273.0 1316.0 278.0" stroke="#d9790f" fill="none"/>
<path d="M1353.5 148.0C1351.4 156.3 1345.2 181.3 1341.0 198.0C1336.8 214.7 1332.0 233.8 1328.5 248.0C1325.0 262.2 1321.2 277.2 1319.8 283.0" stroke="#d9790f" fill="none"/>
<path d="M1276.0 148.0C1277.2 156.3 1281.8 179.7 1283.5 198.0C1285.2 216.3 1287.7 243.0 1286.0 258.0C1284.3 273.0 1276.8 283.0 1273.5 288.0C1270.2 293.0 1267.2 288.0 1266.0 288.0" stroke="#d9790f" fill="none"/>
<path d="M1266.0 180.5C1267.7 185.9 1273.1 200.9 1276.0 213.0C1278.9 225.1 1282.2 237.2 1283.5 253.0C1284.8 268.8 1283.5 298.8 1283.5 308.0" stroke="#00d4e0" fill="none"/>
<path d="M1266.0 243.0C1266.6 248.0 1269.0 262.2 1269.8 273.0C1270.6 283.8 1271.0 295.5 1271.0 308.0C1271.0 320.5 1270.6 337.2 1269.8 348.0C1269.0 358.8 1266.6 368.8 1266.0 373.0" stroke="#ffffff" fill="none"/>
<path d="M1258.5 243.0C1259.3 248.0 1262.2 262.2 1263.5 273.0C1264.8 283.8 1265.8 297.2 1266.0 308.0C1266.2 318.8 1265.0 333.0 1264.8 338.0" stroke="#ffffff" fill="none"/>
<path d="M1275.2 308.0h4M1277.2 308.0L1277.2 275.5A3.7000000000000455 3.7000000000000455 0 0 0 1269.8 278.0" stroke="#ffffff" fill="none"/><circle cx="1269.8" cy="278.0" r="1.8" stroke="#ffffff" fill="none"/>
<circle cx="1286" cy="292" r="3" stroke="#8a5048" fill="none"/><path d="M1286 295v10M1284 301h5" stroke="#8a5048"/>
<circle cx="1326" cy="242" r="3" stroke="#8a5048" fill="none"/><path d="M1326 245v10M1324 251h5" stroke="#8a5048"/>
<circle cx="1367.2" cy="180.0" r="4.5" stroke="#ffffff" fill="none"/>
<path d="M1364.2 177.0l6 6M1370.2 177.0l-6 6" stroke="#fff"/>
<circle cx="1422.2" cy="222.5" r="4.0" stroke="#ffffff" fill="none"/>
<path d="M1419.2 219.5l6 6M1425.2 219.5l-6 6" stroke="#fff"/>
<circle cx="1284.8" cy="339.2" r="4.5" stroke="#ffffff" fill="none"/>
<path d="M1281.8 336.2l6 6M1287.8 336.2l-6 6" stroke="#fff"/>
<path d="M1413.2 238.0h4M1415.2 238.0L1415.2 209.2A7.7000000000000455 7.7000000000000455 0 0 0 1399.8 210.0" stroke="#ffffff" fill="none"/><circle cx="1399.8" cy="210.0" r="1.8" stroke="#ffffff" fill="none"/>
<path d="M1413 240l4 2 3-4" stroke="#00c000" fill="none"/>
<path d="M1281.0 348.0 L1287.2 333.0" stroke="#ffffff" fill="none"/>
<path d="M1287.2 350.5 L1294.8 333.0" stroke="#ffffff" fill="none"/>
<path d="M1293.5 353.0 L1303.5 330.5" stroke="#ffffff" fill="none"/>
<path d="M1298.5 318.0 L1306.0 303.0" stroke="#ffffff" fill="none"/>
<path d="M1303.5 328.0 L1314.8 308.0" stroke="#ffffff" fill="none"/>
<path d="M1311.0 333.0 L1319.8 313.0" stroke="#ffffff" fill="none"/>
<path d="M1276.0 373.0 L1283.5 358.0" stroke="#ffffff" fill="none"/>
<path d="M1283.5 375.5 L1292.2 358.0" stroke="#ffffff" fill="none"/>
<path d="M1291.0 378.0 L1301.0 358.0" stroke="#ffffff" fill="none"/>
<path d="M1266.0 388.0 L1276.0 373.0" stroke="#ffffff" fill="none"/>
<path d="M1271.0 398.0 L1283.5 378.0" stroke="#ffffff" fill="none"/>
<path d="M1281.0 400.5 L1291.0 383.0" stroke="#ffffff" fill="none"/>
<path d="M1266.0 408.0 L1273.5 395.5" stroke="#ffffff" fill="none"/>
<path d="M1281.0 353.0 L1284.8 345.5 L1288.5 348.0 L1283.5 355.5Z" stroke="#ffffff" fill="none"/>
<path d="M1311.0 308.0C1313.1 312.2 1318.5 326.8 1323.5 333.0C1328.5 339.2 1335.6 343.0 1341.0 345.5C1346.4 348.0 1352.7 344.7 1356.0 348.0C1359.3 351.3 1358.1 360.1 1361.0 365.5C1363.9 370.9 1369.3 377.4 1373.5 380.5C1377.7 383.6 1381.4 385.4 1386.0 384.2C1390.6 382.9 1396.0 376.9 1401.0 373.0C1406.0 369.1 1410.2 363.8 1416.0 360.5C1421.8 357.2 1430.2 353.4 1436.0 353.0C1441.8 352.6 1446.0 354.7 1451.0 358.0C1456.0 361.3 1462.2 369.7 1466.0 373.0C1469.8 376.3 1472.2 377.2 1473.5 378.0" stroke="#d9790f" fill="none"/>
<path d="M1378.5 153.0C1381.8 155.1 1390.2 162.2 1398.5 165.5C1406.8 168.8 1421.0 172.2 1428.5 173.0C1436.0 173.8 1441.0 170.9 1443.5 170.5" stroke="#d9790f" fill="none"/>
<path d="M1451.0 230.5C1453.9 228.0 1462.7 220.1 1468.5 215.5C1474.3 210.9 1481.0 204.2 1486.0 203.0C1491.0 201.8 1495.6 200.5 1498.5 208.0C1501.4 215.5 1501.4 236.3 1503.5 248.0C1505.6 259.7 1508.5 271.3 1511.0 278.0C1513.5 284.7 1516.0 288.0 1518.5 288.0C1521.0 288.0 1524.8 279.7 1526.0 278.0" stroke="#d9790f" fill="none"/>
<path d="M1411.0 295.5C1413.5 295.9 1418.9 297.8 1426.0 298.0C1433.1 298.2 1445.6 295.1 1453.5 296.8C1461.4 298.5 1468.5 303.2 1473.5 308.0C1478.5 312.8 1479.3 321.3 1483.5 325.5C1487.7 329.7 1494.8 333.4 1498.5 333.0C1502.2 332.6 1504.8 324.7 1506.0 323.0" stroke="#d9790f" fill="none"/>
<path d="M1396.0 305.5C1398.1 306.9 1403.5 313.1 1408.5 314.2C1413.5 315.2 1419.8 312.6 1426.0 311.8C1432.2 311.0 1440.6 308.2 1446.0 309.2C1451.4 310.2 1455.2 313.2 1458.5 318.0C1461.8 322.8 1462.7 332.2 1466.0 338.0C1469.3 343.8 1474.3 350.1 1478.5 353.0C1482.7 355.9 1486.8 356.8 1491.0 355.5C1495.2 354.2 1501.4 347.2 1503.5 345.5" stroke="#e60a14" fill="none"/>
<path d="M1386.0 335.5C1389.3 334.2 1398.5 330.1 1406.0 328.0C1413.5 325.9 1424.3 322.6 1431.0 323.0C1437.7 323.4 1441.8 326.8 1446.0 330.5C1450.2 334.2 1452.2 341.3 1456.0 345.5C1459.8 349.7 1466.0 350.9 1468.5 355.5C1471.0 360.1 1470.6 370.1 1471.0 373.0" stroke="#d9790f" fill="none"/>
<path d="M1552.0 223.0C1549.8 228.0 1543.7 241.3 1538.5 253.0C1533.3 264.7 1526.8 279.7 1521.0 293.0C1515.2 306.3 1508.5 319.7 1503.5 333.0C1498.5 346.3 1493.9 364.2 1491.0 373.0C1488.1 381.8 1486.8 383.4 1486.0 385.5" stroke="#d9790f" fill="none"/>
<path d="M1552.0 223.0C1549.8 228.0 1543.7 241.3 1538.5 253.0C1533.3 264.7 1526.8 279.7 1521.0 293.0C1515.2 306.3 1508.5 319.7 1503.5 333.0C1498.5 346.3 1493.9 364.2 1491.0 373.0C1488.1 381.8 1486.8 383.4 1486.0 385.5" stroke="#d9790f" fill="none" stroke-width="10" stroke-dasharray="1 5"/>
<path d="M1552.0 213.0C1549.1 219.2 1540.6 237.6 1534.8 250.5C1529.0 263.4 1523.0 277.2 1517.2 290.5C1511.4 303.8 1504.8 317.2 1499.8 330.5C1494.8 343.8 1489.3 363.8 1487.2 370.5" stroke="#d9790f" fill="none"/>
<path d="M1552.0 234.2C1550.4 237.8 1546.7 245.3 1542.2 255.5C1537.7 265.7 1530.6 282.2 1524.8 295.5C1519.0 308.8 1512.2 322.2 1507.2 335.5C1502.2 348.8 1496.9 368.8 1494.8 375.5" stroke="#d9790f" fill="none"/>
<path d="M1552.0 283.0C1549.3 287.6 1542.0 302.2 1536.0 310.5C1530.0 318.8 1522.2 326.3 1516.0 333.0C1509.8 339.7 1501.4 347.6 1498.5 350.5" stroke="#e60a14" fill="none"/>
<path d="M1552.0 288.0 L1531.0 328.0" stroke="#00d4e0" fill="none"/>
<path d="M1416.0 408.0C1417.7 404.2 1421.8 392.0 1426.0 385.5C1430.2 379.0 1436.0 371.9 1441.0 369.2C1446.0 366.5 1453.0 366.9 1456.0 369.2C1459.0 371.5 1459.8 376.5 1459.0 383.0C1458.2 389.5 1452.3 403.8 1451.0 408.0" stroke="#d9790f" fill="none"/>
<path d="M1416.0 408.0C1417.7 404.2 1421.8 392.0 1426.0 385.5C1430.2 379.0 1436.0 371.9 1441.0 369.2C1446.0 366.5 1453.0 366.9 1456.0 369.2C1459.0 371.5 1459.8 376.5 1459.0 383.0C1458.2 389.5 1452.3 403.8 1451.0 408.0" stroke="#d9790f" fill="none" stroke-width="12" stroke-dasharray="1 5"/>
<path d="M1421.0 408.0C1422.7 404.7 1427.5 393.2 1431.0 388.0C1434.5 382.8 1438.9 378.7 1442.2 376.8C1445.5 374.9 1449.3 375.4 1451.0 376.8C1452.7 378.2 1453.0 380.3 1452.2 385.5C1451.4 390.7 1447.0 404.2 1446.0 408.0" stroke="#d9790f" fill="none"/>
<path d="M1426.0 408.0 L1441.0 388.0" stroke="#00d4e0" fill="none"/>
<path d="M1438.5 395.5 L1444.8 399.2" stroke="#e60a14" fill="none"/>
<path d="M1361.0 355.5C1363.5 360.1 1371.0 374.2 1376.0 383.0C1381.0 391.8 1388.5 403.8 1391.0 408.0" stroke="#ffffff" fill="none" stroke-dasharray="10 4 2 4"/>
<path d="M1441.0 398.0C1446.8 393.8 1463.5 382.2 1476.0 373.0C1488.5 363.8 1507.2 349.7 1516.0 343.0C1524.8 336.3 1526.4 334.7 1528.5 333.0" stroke="#ffffff" fill="none" stroke-dasharray="10 4 2 4"/>
<path d="M1512.8 359.2h4M1514.8 359.2L1514.8 333.0A7.5 7.5 0 0 1 1529.8 333.5" stroke="#ffffff" fill="none"/><circle cx="1529.8" cy="333.5" r="1.8" stroke="#ffffff" fill="none"/>
<path d="M1518.5 340.5 L1531.0 331.8 L1532.2 334.2 L1519.8 343.0Z" stroke="#ffffff" fill="none"/>
<path d="M1355.500 349.500h10v5h-10z" stroke="#fff" fill="none"/>
<path d="M1552.0 305.5 L1538.5 333.0" stroke="#ffffff" fill="none"/>
<path d="M1552.0 348.0 L1536.0 380.5" stroke="#ffffff" fill="none"/>
<path d="M1552.0 393.0 L1546.0 408.0" stroke="#ffffff" fill="none"/>
<path d="M1526.0 355.5 L1503.5 408.0" stroke="#ffffff" fill="none"/>
<path d="M1541.0 323.0 L1501.0 408.0" stroke="#8a5048" fill="none" stroke-dasharray="7 25"/>
<path d="M1306.0 408.0C1306.8 407.0 1308.9 403.1 1311.0 401.8C1313.1 400.6 1316.6 399.5 1318.5 400.5C1320.4 401.5 1321.6 406.8 1322.2 408.0" stroke="#ffffff" fill="none"/>
<text x="1346.5" y="259.8" fill="#ffffff" font-size="11.5">558.6</text>
<text x="1505.5" y="223.0" fill="#ffffff" font-size="11.5">562.6</text>
<text x="1445.5" y="265.0" fill="#ffffff" font-size="11.5">561.5</text>
<text x="1360.5" y="346.8" fill="#ffffff" font-size="11.5">558.8</text>
<text x="1533.5" y="341.0" fill="#ffffff" font-size="11.5">558</text>
<text x="1500.5" y="406.8" fill="#ffffff" font-size="11.5">558.4</text>
<defs><pattern id="gd" width="30" height="12" patternUnits="userSpaceOnUse" patternTransform="translate(366,452)"><path d="M7 9h2v2h-2zM11 9h2v2h-2zM18 1h2v2h-1zM26 5h2v1h2v-2h1v3h-5zM3 3h1v1h-1zM33 8zM22 8h1v1h-1z" fill="#00e000"/><path d="M22 10h2v2h-2zM0 6h2v2h-2z" fill="#00e000"/></pattern></defs>
<circle cx="408.5" cy="519" r="65" fill="url(#gd)"/><circle cx="408.5" cy="519" r="66" stroke="#fff" fill="none"/>
<circle cx="408.5" cy="519" r="93.500" stroke="#fff" fill="none" stroke-dasharray="16 12"/>
<path d="M298 505A111 111 0 0 1 516.500 491" stroke="#fff" fill="none"/><path d="M506 574A111 111 0 0 1 300 545" stroke="#fff" fill="none" stroke-dasharray="8 3 1 3"/>
<path d="M413.5 475.5C418.9 475.9 426.0 480.5 431.0 485.5C436.0 490.5 441.0 498.8 443.5 505.5C446.0 512.2 447.2 519.7 446.0 525.5C444.8 531.3 440.2 537.4 436.0 540.5C431.8 543.6 426.4 544.4 421.0 544.2C415.6 544.0 408.3 541.9 403.5 539.2C398.7 536.5 394.3 533.6 392.2 528.0C390.1 522.4 389.9 513.0 391.0 505.5C392.1 498.0 394.8 488.0 398.5 483.0C402.2 478.0 408.1 475.1 413.5 475.5Z" stroke="#e60a14" fill="none"/>
<text x="431.5" y="491.8" fill="#e60a14" font-size="11" transform="rotate(62 431.5 491.8)">565</text>
<circle cx="373.0" cy="460.0" r="3" stroke="#8a5048" fill="none"/><path d="M373.0 463.0v11M370.0 473.0h6" stroke="#8a5048" fill="none"/>
<circle cx="460.5" cy="521.8" r="3" stroke="#8a5048" fill="none"/><path d="M460.5 524.8v11M457.5 534.8h6" stroke="#8a5048" fill="none"/>
<circle cx="421.5" cy="558.0" r="3" stroke="#8a5048" fill="none"/><path d="M421.5 561.0v11M418.5 571.0h6" stroke="#8a5048" fill="none"/>
<circle cx="534.8" cy="469.2" r="3" stroke="#8a5048" fill="none"/><path d="M534.8 472.2v11M531.8 482.2h6" stroke="#8a5048" fill="none"/>
<circle cx="512.2" cy="605.5" r="3" stroke="#8a5048" fill="none"/><path d="M512.2 608.5v11M509.20000000000005 618.5h6" stroke="#8a5048" fill="none"/>
<circle cx="469.8" cy="605.5" r="3" stroke="#8a5048" fill="none"/><path d="M469.8 608.5v11M466.8 618.5h6" stroke="#8a5048" fill="none"/>
<circle cx="428.5" cy="641.8" r="3" stroke="#8a5048" fill="none"/><path d="M428.5 644.8v11M425.5 654.8h6" stroke="#8a5048" fill="none"/>
<circle cx="473.5" cy="646.8" r="3" stroke="#8a5048" fill="none"/><path d="M473.5 649.8v11M470.5 659.8h6" stroke="#8a5048" fill="none"/>
<circle cx="455.5" cy="551.8" r="4.0" stroke="#ffffff" fill="none"/>
<path d="M452.5 548.8l6 6M458.5 548.8l-6 6" stroke="#ffffff"/>
<circle cx="375.5" cy="573.0" r="4.0" stroke="#ffffff" fill="none"/>
<path d="M372.5 570.0l6 6M378.5 570.0l-6 6" stroke="#ffffff"/>
<path d="M516.0 490.5C517.0 495.5 521.8 510.9 522.2 520.5C522.6 530.1 520.4 540.1 518.5 548.0C516.6 555.9 513.5 560.5 511.0 568.0C508.5 575.5 505.4 582.2 503.5 593.0C501.6 603.8 500.2 620.5 499.8 633.0C499.4 645.5 500.8 662.2 501.0 668.0" stroke="#ffffff" fill="none"/>
<path d="M524.8 490.5C525.0 495.9 526.4 512.6 526.0 523.0C525.6 533.4 524.1 543.8 522.2 553.0C520.3 562.2 517.3 568.8 514.8 578.0C512.3 587.2 508.7 593.0 507.2 608.0C505.7 623.0 506.2 658.0 506.0 668.0" stroke="#ffffff" fill="none"/>
<path d="M531.0 423.0C529.8 426.3 525.0 435.9 523.5 443.0C522.0 450.1 522.6 458.8 522.2 465.5C521.8 472.2 521.2 480.1 521.0 483.0" stroke="#ffffff" fill="none" stroke-dasharray="7 4"/>
<path d="M586.0 408.0C582.7 410.1 573.5 415.1 566.0 420.5C558.5 425.9 547.7 434.2 541.0 440.5C534.3 446.8 528.5 455.1 526.0 458.0" stroke="#ffffff" fill="none" stroke-dasharray="10 3 2 3"/>
<path d="M529.500 415.500h6v5h-6z" stroke="#fff" fill="none"/>
<path d="M530.2 516.8h4M532.2 516.8L532.2 489.2A8.100000000000023 8.100000000000023 0 0 0 516.0 489.8" stroke="#ffffff" fill="none"/><circle cx="516.0" cy="489.8" r="1.8" stroke="#ffffff" fill="none"/>
<path d="M502.8 648.0h4M504.8 648.0L504.8 574.2A3.8000000000000114 3.8000000000000114 0 0 0 497.2 573.5" stroke="#ffffff" fill="none"/><circle cx="497.2" cy="573.5" r="1.8" stroke="#ffffff" fill="none"/>
<path d="M389.0 649.2h4M391.0 649.2L391.0 621.8A7.5 7.5 0 0 1 406.0 621.8" stroke="#ffffff" fill="none"/><circle cx="406.0" cy="621.8" r="1.8" stroke="#ffffff" fill="none"/>
<path d="M421.5 651.8h4M423.5 651.8L423.5 624.2A7.5 7.5 0 0 1 438.5 625.0" stroke="#ffffff" fill="none"/><circle cx="438.5" cy="625.0" r="1.8" stroke="#ffffff" fill="none"/>
<path d="M453.5 625.5 L481.0 605.5 L481.0 668.0" stroke="#ffffff" fill="none"/>
<path d="M453.5 625.5 L471.0 668.0" stroke="#ffffff" fill="none"/>
<path d="M467.2 623.0 L477.2 668.0" stroke="#ffffff" fill="none" stroke-width="14" stroke-dasharray="1 5"/>
<path d="M489.8 605.5 L494.8 605.5 L492.2 613.0Z" stroke="#ffffff" fill="none"/>
<path d="M391.0 641.8C395.2 642.2 409.3 642.3 416.0 644.2C422.7 646.1 427.2 649.0 431.0 653.0C434.8 657.0 437.2 665.5 438.5 668.0" stroke="#00d4e0" fill="none"/>
<path d="M366.0 648.0C368.5 646.3 374.8 640.5 381.0 638.0C387.2 635.5 396.0 632.6 403.5 633.0C411.0 633.4 419.8 636.8 426.0 640.5C432.2 644.2 437.2 650.9 441.0 655.5C444.8 660.1 447.2 665.9 448.5 668.0" stroke="#ffffff" fill="none"/>
<path d="M366.0 658.0C368.5 655.9 375.2 648.4 381.0 645.5C386.8 642.6 394.3 640.1 401.0 640.5C407.7 640.9 415.6 643.4 421.0 648.0C426.4 652.6 431.4 664.7 433.5 668.0" stroke="#ffffff" fill="none"/>
<path d="M368.5 638.0 L374.8 631.8 L371.0 630.5Z" stroke="#ffffff" fill="none"/>
<path d="M513.5 668.0C514.3 658.0 515.6 630.5 518.5 608.0C521.4 585.5 527.2 553.8 531.0 533.0C534.8 512.2 536.8 498.4 541.0 483.0C545.2 467.6 549.3 451.8 556.0 440.5C562.7 429.2 572.7 420.5 581.0 415.5C589.3 410.5 597.7 410.1 606.0 410.5C614.3 410.9 623.1 413.8 631.0 418.0C638.9 422.2 647.7 429.7 653.5 435.5C659.3 441.3 663.9 450.1 666.0 453.0" stroke="#d9790f" fill="none"/>
<path d="M519.8 668.0C520.8 655.9 523.3 618.0 526.0 595.5C528.7 573.0 532.7 552.6 536.0 533.0C539.3 513.4 541.8 493.4 546.0 478.0C550.2 462.6 554.8 449.9 561.0 440.5C567.2 431.1 576.4 425.6 583.5 421.8C590.6 418.1 596.4 417.6 603.5 418.0C610.6 418.4 618.9 420.4 626.0 424.2C633.1 427.9 641.0 434.0 646.0 440.5C651.0 447.0 652.7 454.7 656.0 463.0C659.3 471.3 664.3 485.9 666.0 490.5" stroke="#e60a14" fill="none"/>
<path d="M526.0 668.0C527.0 655.9 529.5 618.0 532.2 595.5C534.9 573.0 538.9 552.2 542.2 533.0C545.5 513.8 548.2 494.7 552.2 480.5C556.2 466.3 560.4 456.1 566.0 448.0C571.6 439.9 579.3 434.9 586.0 431.8C592.7 428.7 599.3 428.6 606.0 429.2C612.7 429.8 620.2 431.9 626.0 435.5C631.8 439.1 636.8 444.2 641.0 450.5C645.2 456.8 646.8 462.6 651.0 473.0C655.2 483.4 663.5 506.3 666.0 513.0" stroke="#d9790f" fill="none"/>
<path d="M532.2 668.0C533.2 655.9 535.8 618.0 538.5 595.5C541.2 573.0 545.4 551.3 548.5 533.0C551.6 514.7 553.7 498.0 557.2 485.5C560.8 473.0 564.8 465.1 569.8 458.0C574.8 450.9 581.2 445.9 587.2 443.0C593.2 440.1 600.0 439.7 606.0 440.5C612.0 441.3 618.5 444.2 623.5 448.0C628.5 451.8 632.7 456.3 636.0 463.0C639.3 469.7 640.6 478.4 643.5 488.0C646.4 497.6 649.8 512.2 653.5 520.5C657.2 528.8 663.9 535.1 666.0 538.0" stroke="#d9790f" fill="none"/>
<path d="M538.5 668.0C539.5 655.9 542.3 618.0 544.8 595.5C547.3 573.0 550.6 550.5 553.5 533.0C556.4 515.5 558.9 501.5 562.2 490.5C565.5 479.5 569.1 472.9 573.5 466.8C577.9 460.8 583.3 456.5 588.5 454.2C593.7 451.9 599.8 451.9 604.8 453.0C609.8 454.1 614.5 456.3 618.5 460.5C622.5 464.7 626.0 470.9 628.5 478.0C631.0 485.1 631.4 494.7 633.5 503.0C635.6 511.3 635.6 518.8 641.0 528.0C646.4 537.2 661.8 553.0 666.0 558.0" stroke="#d9790f" fill="none"/>
<path d="M544.8 668.0C545.8 655.9 548.5 618.0 551.0 595.5C553.5 573.0 557.1 549.7 559.8 533.0C562.5 516.3 564.3 505.1 567.2 495.5C570.1 485.9 573.4 480.3 577.2 475.5C581.0 470.7 585.4 468.4 589.8 466.8C594.2 465.2 599.3 465.0 603.5 466.0C607.7 467.0 611.7 468.9 614.8 473.0C617.9 477.1 620.3 483.8 622.2 490.5C624.1 497.2 625.4 509.2 626.0 513.0" stroke="#d9790f" fill="none"/>
<path d="M558.5 668.0C559.5 658.0 562.3 630.5 564.8 608.0C567.3 585.5 570.8 552.6 573.5 533.0C576.2 513.4 578.1 499.2 581.0 490.5C583.9 481.8 586.8 482.6 591.0 481.0C595.2 479.4 601.0 478.6 606.0 481.0C611.0 483.4 617.7 486.8 621.0 495.5C624.3 504.2 623.5 523.4 626.0 533.0C628.5 542.6 629.3 546.8 636.0 553.0C642.7 559.2 661.0 567.6 666.0 570.5" stroke="#e60a14" fill="none"/>
<path d="M556.5 668.0C558.2 658.0 562.8 628.4 566.5 608.0C570.2 587.6 574.8 563.0 579.0 545.5C583.2 528.0 587.8 512.4 591.5 503.0C595.2 493.6 597.8 491.1 601.0 489.2C604.2 487.3 608.1 488.7 611.0 491.8C613.9 494.9 617.0 501.1 618.5 508.0C620.0 514.9 619.6 528.8 619.8 533.0" stroke="#d9790f" fill="none"/>
<path d="M556.5 668.0C558.2 658.0 562.8 628.4 566.5 608.0C570.2 587.6 574.8 563.0 579.0 545.5C583.2 528.0 587.8 512.4 591.5 503.0C595.2 493.6 597.8 491.1 601.0 489.2C604.2 487.3 608.1 488.7 611.0 491.8C613.9 494.9 617.0 501.1 618.5 508.0C620.0 514.9 619.6 528.8 619.8 533.0" stroke="#d9790f" fill="none" stroke-width="10" stroke-dasharray="1 5"/>
<path d="M553.5 668.0C555.2 658.0 559.8 628.4 563.5 608.0C567.2 587.6 571.8 563.0 576.0 545.5C580.2 528.0 586.4 510.1 588.5 503.0" stroke="#d9790f" fill="none"/>
<path d="M556.5 458.0C558.1 454.3 561.1 441.3 566.0 436.0C570.9 430.7 577.7 427.5 586.0 426.0C594.3 424.5 607.2 425.1 616.0 427.2C624.8 429.3 632.2 432.5 638.5 438.5C644.8 444.5 650.2 456.4 653.5 463.0C656.8 469.6 657.7 475.5 658.5 478.0" stroke="#d9790f" fill="none"/>
<path d="M556.5 458.0C558.1 454.3 561.1 441.3 566.0 436.0C570.9 430.7 577.7 427.5 586.0 426.0C594.3 424.5 607.2 425.1 616.0 427.2C624.8 429.3 632.2 432.5 638.5 438.5C644.8 444.5 650.2 456.4 653.5 463.0C656.8 469.6 657.7 475.5 658.5 478.0" stroke="#d9790f" fill="none" stroke-width="10" stroke-dasharray="1 5"/>
<path d="M598.5 568.0C602.5 562.2 609.8 558.0 616.0 558.0C622.2 558.0 631.0 563.0 636.0 568.0C641.0 573.0 645.2 579.2 646.0 588.0C646.8 596.8 644.3 611.8 641.0 620.5C637.7 629.2 631.8 636.8 626.0 640.5C620.2 644.2 611.4 645.9 606.0 643.0C600.6 640.1 595.8 631.3 593.5 623.0C591.2 614.7 591.4 602.2 592.2 593.0C593.0 583.8 594.5 573.8 598.5 568.0Z" stroke="#d9790f" fill="none"/>
<path d="M603.5 598.0C606.0 595.5 611.8 594.7 616.0 593.0C620.2 591.3 625.4 588.0 628.5 588.0C631.6 588.0 634.4 589.7 634.8 593.0C635.2 596.3 633.7 602.6 631.0 608.0C628.3 613.4 622.7 623.0 618.5 625.5C614.3 628.0 608.9 625.9 606.0 623.0C603.1 620.1 601.4 612.2 601.0 608.0C600.6 603.8 601.0 600.5 603.5 598.0Z" stroke="#d9790f" fill="none"/>
<path d="M586.0 668.0C586.8 663.0 587.7 640.7 591.0 638.0C594.3 635.3 599.3 649.9 606.0 651.8C612.7 653.7 623.5 652.3 631.0 649.2C638.5 646.1 646.0 639.9 651.0 633.0C656.0 626.1 658.5 613.8 661.0 608.0C663.5 602.2 665.2 599.7 666.0 598.0" stroke="#d9790f" fill="none"/>
<path d="M576.0 668.0C578.5 666.3 584.3 660.7 591.0 658.0C597.7 655.3 607.7 653.5 616.0 651.8C624.3 650.1 632.7 652.0 641.0 648.0C649.3 644.0 661.8 631.3 666.0 628.0" stroke="#e60a14" fill="none"/>
<path d="M663.5 440.5C658.1 448.4 639.3 473.4 631.0 488.0C622.7 502.6 618.5 512.2 613.5 528.0C608.5 543.8 604.8 565.5 601.0 583.0C597.2 600.5 594.3 618.8 591.0 633.0C587.7 647.2 582.7 662.2 581.0 668.0" stroke="#00e000" fill="none" stroke-dasharray="8 3 1 3"/>
<path d="M526.0 520.5C524.3 530.9 518.7 558.4 516.0 583.0C513.3 607.6 510.8 653.8 509.8 668.0" stroke="#8a5048" fill="none" stroke-dasharray="6 4"/>
<path d="M536.0 423.0C536.8 424.7 537.7 430.7 541.0 433.0C544.3 435.3 550.2 438.5 556.0 436.8C561.8 435.1 571.4 427.8 576.0 423.0C580.6 418.2 582.2 410.5 583.5 408.0" stroke="#d9790f" fill="none"/>
<path d="M538.5 408.0C539.8 411.8 541.8 428.0 546.0 430.5C550.2 433.0 558.9 426.8 563.5 423.0C568.1 419.2 571.8 410.5 573.5 408.0" stroke="#d9790f" fill="none"/>
<path d="M641.0 408.0C643.5 410.5 651.8 418.0 656.0 423.0C660.2 428.0 664.3 435.5 666.0 438.0" stroke="#d9790f" fill="none"/>
<path d="M651.0 408.0 L666.0 423.0" stroke="#d9790f" fill="none"/>
<text x="364.8" y="419.8" fill="#ffffff" font-size="11.5">564.5</text>
<text x="506.0" y="438.5" fill="#ffffff" font-size="11.5">564.1</text>
<text x="472.2" y="486.8" fill="#ffffff" font-size="11.5">564 4</text>
<text x="389.0" y="515.5" fill="#ffffff" font-size="11.5">565.2</text>
<text x="438.0" y="595.5" fill="#ffffff" font-size="11.5">564.1</text>
<text x="448.0" y="633.0" fill="#ffffff" font-size="11.5">564.8</text>
<text x="531.5" y="418.5" fill="#ffffff" font-size="11.5">563.6</text>
<text x="570.5" y="533.0" fill="#ffffff" font-size="11.5">570.9</text>
<text x="597.2" y="580.0" fill="#ffffff" font-size="11.5">571.6</text>
<text x="589.0" y="616.8" fill="#ffffff" font-size="11.5">572.6</text>
<text x="553.5" y="637.5" fill="#ffffff" font-size="11.5">570.4</text>
<text x="626.0" y="544.2" fill="#e60a14" font-size="11" transform="rotate(35 626.0 544.2)">570</text>
<path d="M666.0 453.0C670.2 458.0 682.7 469.7 691.0 483.0C699.3 496.3 710.2 518.4 716.0 533.0C721.8 547.6 726.0 558.0 726.0 570.5C726.0 583.0 721.0 595.5 716.0 608.0C711.0 620.5 701.4 635.5 696.0 645.5C690.6 655.5 685.6 664.2 683.5 668.0" stroke="#d9790f" fill="none"/>
<path d="M666.0 438.0C671.0 443.4 686.0 456.8 696.0 470.5C706.0 484.2 718.9 504.2 726.0 520.5C733.1 536.8 738.1 553.4 738.5 568.0C738.9 582.6 733.5 595.1 728.5 608.0C723.5 620.9 713.1 635.5 708.5 645.5C703.9 655.5 702.2 664.2 701.0 668.0" stroke="#d9790f" fill="none"/>
<path d="M666.0 423.0C672.2 429.7 692.2 448.8 703.5 463.0C714.8 477.2 726.8 491.3 733.5 508.0C740.2 524.7 743.1 546.3 743.5 563.0C743.9 579.7 739.8 594.2 736.0 608.0C732.2 621.8 724.3 635.5 721.0 645.5C717.7 655.5 716.8 664.2 716.0 668.0" stroke="#d9790f" fill="none"/>
<path d="M671.0 408.0C677.7 415.9 700.2 440.1 711.0 455.5C721.8 470.9 729.8 483.4 736.0 500.5C742.2 517.6 747.2 540.1 748.5 558.0C749.8 575.9 746.8 593.4 743.5 608.0C740.2 622.6 731.8 635.5 728.5 645.5C725.2 655.5 724.3 664.2 723.5 668.0" stroke="#e60a14" fill="none"/>
<path d="M688.5 408.0C693.9 416.3 712.2 442.2 721.0 458.0C729.8 473.8 736.0 486.3 741.0 503.0C746.0 519.7 750.2 540.5 751.0 558.0C751.8 575.5 748.9 593.0 746.0 608.0C743.1 623.0 736.0 638.0 733.5 648.0C731.0 658.0 731.4 664.7 731.0 668.0" stroke="#d9790f" fill="none"/>
<path d="M701.0 408.0C705.6 416.3 720.6 443.4 728.5 458.0C736.4 472.6 741.4 480.5 748.5 495.5C755.6 510.5 766.8 533.4 771.0 548.0C775.2 562.6 775.2 570.9 773.5 583.0C771.8 595.1 765.2 606.3 761.0 620.5C756.8 634.7 750.6 660.1 748.5 668.0" stroke="#d9790f" fill="none"/>
<path d="M713.5 408.0C718.1 416.3 733.1 442.2 741.0 458.0C748.9 473.8 753.9 486.3 761.0 503.0C768.1 519.7 778.9 543.0 783.5 558.0C788.1 573.0 789.8 580.5 788.5 593.0C787.2 605.5 778.9 620.5 776.0 633.0C773.1 645.5 771.8 662.2 771.0 668.0" stroke="#d9790f" fill="none"/>
<path d="M723.5 408.0C728.1 416.3 743.1 441.3 751.0 458.0C758.9 474.7 764.3 490.5 771.0 508.0C777.7 525.5 787.7 548.0 791.0 563.0C794.3 578.0 792.2 586.3 791.0 598.0C789.8 609.7 784.8 621.3 783.5 633.0C782.2 644.7 783.5 662.2 783.5 668.0" stroke="#d9790f" fill="none"/>
<path d="M734.8 408.0C738.8 413.4 751.6 426.8 758.5 440.5C765.4 454.2 770.6 473.4 776.0 490.5C781.4 507.6 787.7 527.6 791.0 543.0C794.3 558.4 795.6 570.1 796.0 583.0C796.4 595.9 795.2 606.3 793.5 620.5C791.8 634.7 787.2 660.1 786.0 668.0" stroke="#e60a14" fill="none"/>
<path d="M746.0 408.0C749.3 416.3 759.8 441.3 766.0 458.0C772.2 474.7 778.1 491.3 783.5 508.0C788.9 524.7 795.6 543.0 798.5 558.0C801.4 573.0 801.4 579.7 801.0 598.0C800.6 616.3 796.8 656.3 796.0 668.0" stroke="#d9790f" fill="none"/>
<path d="M758.5 408.0C761.8 416.3 772.2 440.5 778.5 458.0C784.8 475.5 791.0 495.5 796.0 513.0C801.0 530.5 806.4 547.2 808.5 563.0C810.6 578.8 808.9 590.5 808.5 608.0C808.1 625.5 806.4 658.0 806.0 668.0" stroke="#d9790f" fill="none"/>
<path d="M776.0 408.0C778.5 417.2 786.0 445.5 791.0 463.0C796.0 480.5 801.4 496.3 806.0 513.0C810.6 529.7 816.4 547.2 818.5 563.0C820.6 578.8 819.3 590.5 818.5 608.0C817.7 625.5 814.3 658.0 813.5 668.0" stroke="#d9790f" fill="none"/>
<path d="M796.0 408.0C796.8 416.3 798.1 441.3 801.0 458.0C803.9 474.7 809.5 491.3 813.5 508.0C817.5 524.7 823.1 541.3 824.8 558.0C826.5 574.7 824.5 589.7 823.5 608.0C822.5 626.3 819.3 658.0 818.5 668.0" stroke="#d9790f" fill="none"/>
<path d="M798.5 408.0C801.0 414.7 809.3 433.4 813.5 448.0C817.7 462.6 821.2 478.8 823.5 495.5C825.8 512.2 826.8 529.2 827.2 548.0C827.6 566.8 827.0 588.0 826.0 608.0C825.0 628.0 821.8 658.0 821.0 668.0" stroke="#e60a14" fill="none"/>
<path d="M818.5 408.0C818.5 412.2 816.4 419.2 818.5 433.0C820.6 446.8 827.0 471.3 831.0 490.5C835.0 509.7 840.3 532.6 842.2 548.0C844.1 563.4 843.2 568.8 842.2 583.0C841.2 597.2 837.9 618.8 836.0 633.0C834.1 647.2 831.8 662.2 831.0 668.0" stroke="#d9790f" fill="none"/>
<path d="M828.5 408.0C828.5 414.2 826.4 430.9 828.5 445.5C830.6 460.1 837.2 478.4 841.0 495.5C844.8 512.6 849.3 533.4 851.0 548.0C852.7 562.6 851.8 568.8 851.0 583.0C850.2 597.2 846.0 618.8 846.0 633.0C846.0 647.2 850.2 662.2 851.0 668.0" stroke="#d9790f" fill="none"/>
<path d="M841.0 408.0C843.9 414.2 854.3 433.0 858.5 445.5C862.7 458.0 864.8 465.9 866.0 483.0C867.2 500.1 866.0 529.2 866.0 548.0C866.0 566.8 867.2 581.3 866.0 595.5C864.8 609.7 858.5 620.9 858.5 633.0C858.5 645.1 864.8 662.2 866.0 668.0" stroke="#d9790f" fill="none"/>
<path d="M854.8 408.0C856.7 414.2 862.9 431.8 866.0 445.5C869.1 459.2 872.2 471.8 873.5 490.5C874.8 509.2 873.7 539.2 873.5 558.0C873.3 576.8 873.5 589.7 872.2 603.0C871.0 616.3 866.2 627.2 866.0 638.0C865.8 648.8 870.2 663.0 871.0 668.0" stroke="#d9790f" fill="none"/>
<path d="M863.5 408.0C865.6 414.7 872.2 431.3 876.0 448.0C879.8 464.7 884.1 489.7 886.0 508.0C887.9 526.3 887.6 542.2 887.2 558.0C886.8 573.8 885.8 589.7 883.5 603.0C881.2 616.3 877.2 627.2 873.5 638.0C869.8 648.8 863.1 663.0 861.0 668.0" stroke="#e60a14" fill="none"/>
<path d="M878.0 408.0C879.3 414.2 882.6 430.9 886.0 445.5C889.4 460.1 896.0 480.1 898.5 495.5C901.0 510.9 901.0 523.4 901.0 538.0C901.0 552.6 901.0 568.0 898.5 583.0C896.0 598.0 889.3 613.8 886.0 628.0C882.7 642.2 879.8 661.3 878.5 668.0" stroke="#d9790f" fill="none"/>
<path d="M881.0 415.5C882.7 422.6 887.2 444.7 891.0 458.0C894.8 471.3 900.8 482.2 903.5 495.5C906.2 508.8 907.2 523.4 907.2 538.0C907.2 552.6 906.2 568.0 903.5 583.0C900.8 598.0 894.3 613.8 891.0 628.0C887.7 642.2 884.8 661.3 883.5 668.0" stroke="#d9790f" fill="none"/>
<path d="M881.0 408.0C883.5 415.5 891.4 436.3 896.0 453.0C900.6 469.7 906.0 493.8 908.5 508.0C911.0 522.2 911.2 526.3 911.0 538.0C910.8 549.7 909.7 564.2 907.2 578.0C904.7 591.8 900.4 605.5 896.0 620.5C891.6 635.5 883.5 660.1 881.0 668.0" stroke="#1010ff" fill="none"/>
<path d="M906.0 408.0C909.3 414.2 920.2 429.7 926.0 445.5C931.8 461.3 938.1 485.9 941.0 503.0C943.9 520.1 943.5 534.7 943.5 548.0C943.5 561.3 943.1 570.5 941.0 583.0C938.9 595.5 935.2 608.8 931.0 623.0C926.8 637.2 918.5 660.5 916.0 668.0" stroke="#1010ff" fill="none"/>
<path d="M666.0 490.5C668.5 494.2 675.6 503.4 681.0 513.0C686.4 522.6 694.1 538.4 698.5 548.0C702.9 557.6 705.5 562.2 707.2 570.5C708.9 578.8 711.2 587.6 708.5 598.0C705.8 608.4 696.8 621.3 691.0 633.0C685.2 644.7 676.4 662.2 673.5 668.0" stroke="#e60a14" fill="none"/>
<path d="M666.0 513.0C668.5 517.2 676.4 528.4 681.0 538.0C685.6 547.6 691.8 559.7 693.5 570.5C695.2 581.3 693.9 592.6 691.0 603.0C688.1 613.4 680.2 625.5 676.0 633.0C671.8 640.5 667.7 645.5 666.0 648.0" stroke="#d9790f" fill="none"/>
<path d="M666.0 538.0C668.1 542.2 675.6 554.7 678.5 563.0C681.4 571.3 683.9 579.7 683.5 588.0C683.1 596.3 678.9 606.3 676.0 613.0C673.1 619.7 667.7 625.5 666.0 628.0" stroke="#d9790f" fill="none"/>
<path d="M666.0 558.0C667.2 562.2 673.5 575.5 673.5 583.0C673.5 590.5 667.2 599.7 666.0 603.0" stroke="#d9790f" fill="none"/>
<path d="M948.5 408.0C949.8 410.5 953.1 418.4 956.0 423.0C958.9 427.6 964.3 433.4 966.0 435.5" stroke="#d9790f" fill="none"/>
<path d="M836.0 408.0C837.2 414.2 840.2 431.8 843.5 445.5C846.8 459.2 853.5 473.4 856.0 490.5C858.5 507.6 858.3 530.9 858.5 548.0C858.7 565.1 858.5 578.8 857.2 593.0C856.0 607.2 852.9 620.5 851.0 633.0C849.1 645.5 846.8 662.2 846.0 668.0" stroke="#d9790f" fill="none"/>
<path d="M883.5 423.0C885.6 429.7 892.0 449.7 896.0 463.0C900.0 476.3 904.9 490.5 907.2 503.0C909.5 515.5 909.4 532.2 909.8 538.0" stroke="#d9790f" fill="none" stroke-width="2"/>
<path d="M918.5 408.0C920.6 416.3 927.0 441.3 931.0 458.0C935.0 474.7 939.9 493.0 942.2 508.0C944.5 523.0 944.8 535.5 944.8 548.0C944.8 560.5 944.1 570.5 942.2 583.0C940.3 595.5 936.6 608.8 933.5 623.0C930.4 637.2 925.2 660.5 923.5 668.0" stroke="#0a8a0a" fill="none"/>
<path d="M918.5 408.0C920.6 416.3 927.0 441.3 931.0 458.0C935.0 474.7 939.9 493.0 942.2 508.0C944.5 523.0 944.8 535.5 944.8 548.0C944.8 560.5 944.1 570.5 942.2 583.0C940.3 595.5 936.6 608.8 933.5 623.0C930.4 637.2 925.2 660.5 923.5 668.0" stroke="#0a8a0a" fill="none" stroke-width="5" stroke-dasharray="1 32"/>
<path d="M896.0 408.0C897.7 414.2 901.8 431.8 906.0 445.5C910.2 459.2 917.0 476.8 921.0 490.5C925.0 504.2 928.5 516.8 929.8 528.0C931.0 539.2 930.8 546.8 928.5 558.0C926.2 569.2 920.6 583.0 916.0 595.5C911.4 608.0 906.0 620.9 901.0 633.0C896.0 645.1 888.5 662.2 886.0 668.0" stroke="#00e000" fill="none" stroke-dasharray="8 3 1 3"/>
<path d="M798.5 668.0C801.4 667.0 809.3 661.8 816.0 661.8C822.7 661.8 834.8 667.0 838.5 668.0" stroke="#00e000" fill="none" stroke-dasharray="8 3 1 3"/>
<path d="M666.0 433.0 L686.0 408.0" stroke="#00e000" fill="none" stroke-dasharray="8 3 1 3"/>
<path d="M666.5 573.0 L666.5 593.0" stroke="#e60a14" fill="none"/>
<ellipse cx="817.2" cy="446.2" rx="5" ry="3.500" stroke="#00d000" fill="none"/><path d="M817.2 446.2v10" stroke="#00d000"/>
<ellipse cx="687.8" cy="595.5" rx="5" ry="3.500" stroke="#00d000" fill="none"/><path d="M687.8 595.5v10" stroke="#00d000"/>
<ellipse cx="861.0" cy="664.2" rx="5" ry="3.500" stroke="#00d000" fill="none"/><path d="M861.0 664.2v10" stroke="#00d000"/>
<text x="921.0" y="438.0" fill="#ffffff" font-size="11.5">545.6</text>
<text x="947.2" y="525.0" fill="#ffffff" font-size="11.5">545</text>
<text x="942.2" y="656.8" fill="#ffffff" font-size="11.5">545.</text>
<text x="696.0" y="439.2" fill="#e60a14" font-size="11" transform="rotate(52 696.0 439.2)">560</text>
<text x="746.0" y="419.2" fill="#e60a14" font-size="11" transform="rotate(68 746.0 419.2)">555</text>
<text x="867.2" y="428.0" fill="#e60a14" font-size="11" transform="rotate(75 867.2 428.0)">545</text>
<text x="669.0" y="499.2" fill="#e60a14" font-size="11" transform="rotate(58 669.0 499.2)">565</text>
<text x="796.0" y="409.2" fill="#e60a14" font-size="11" transform="rotate(70 796.0 409.2)">0</text>
<path d="M1181.0 445.5 L1178.5 495.5 L1175.5 539.2 L1118.5 668.0" stroke="#e60a14" fill="none"/>
<path d="M1251.0 580.5 L1236.0 615.5 L1212.2 668.0" stroke="#e60a14" fill="none"/>
<path d="M1138.5 668.0C1145.2 653.4 1168.5 603.0 1178.5 580.5C1188.5 558.0 1192.2 549.2 1198.5 533.0C1204.8 516.8 1211.4 499.7 1216.0 483.0C1220.6 466.3 1223.9 445.5 1226.0 433.0C1228.1 420.5 1228.1 412.2 1228.5 408.0" stroke="#ffffff" fill="none"/>
<path d="M1151.0 668.0C1157.7 653.4 1180.8 603.0 1191.0 580.5C1201.2 558.0 1205.5 549.2 1212.2 533.0C1218.9 516.8 1225.0 499.7 1231.0 483.0C1237.0 466.3 1244.3 445.5 1248.5 433.0C1252.7 420.5 1254.8 412.2 1256.0 408.0" stroke="#ffffff" fill="none"/>
<path d="M1176.0 668.0C1182.7 653.4 1206.0 603.0 1216.0 580.5C1226.0 558.0 1229.8 549.2 1236.0 533.0C1242.2 516.8 1248.5 497.6 1253.5 483.0C1258.5 468.4 1263.9 451.8 1266.0 445.5" stroke="#ffffff" fill="none"/>
<path d="M1196.0 668.0C1202.7 653.4 1227.2 600.5 1236.0 580.5C1244.8 560.5 1246.4 553.4 1248.5 548.0" stroke="#ffffff" fill="none"/>
<path d="M1216.0 533.0C1218.5 526.8 1222.7 513.8 1231.0 495.5C1239.3 477.2 1260.2 435.1 1266.0 423.0" stroke="#ffffff" fill="none" stroke-width="2"/>
<path d="M1236.0 490.5 L1266.0 429.2" stroke="#ffffff" fill="none" stroke-width="12" stroke-dasharray="1 6"/>
<path d="M1221.0 440.5C1220.2 445.5 1219.3 458.4 1216.0 470.5C1212.7 482.6 1206.4 500.1 1201.0 513.0C1195.6 525.9 1186.4 542.2 1183.5 548.0" stroke="#ffffff" fill="none"/>
<path d="M1181.0 548.0 L1126.0 668.0" stroke="#8a5048" fill="none" stroke-dasharray="7 22"/>
<path d="M1247.2 580.5 L1206.0 668.0" stroke="#8a5048" fill="none" stroke-dasharray="7 22"/>
<path d="M1168.5 640.5 L1161.0 658.0" stroke="#ffffff" fill="none"/>
<path d="M1188.5 640.5 L1181.0 658.0" stroke="#ffffff" fill="none"/>
<path d="M1218.5 578.0 L1212.2 595.5" stroke="#ffffff" fill="none"/>
<path d="M1249.8 515.5 L1243.5 533.0" stroke="#ffffff" fill="none"/>
<path d="M1171.0 568.0 L1237.2 598.5" stroke="#a000a0" fill="none" stroke-width="2"/>
<path d="M1178.5 600.5 L1163.5 623.0 L1173.5 628.0Z" stroke="#ffffff" fill="none"/>
<path d="M1196.5 481.8h4M1198.5 481.8L1198.5 451.8A7.5 7.5 0 0 1 1213.5 454.2" stroke="#ffffff" fill="none"/><circle cx="1213.5" cy="454.2" r="1.8" stroke="#ffffff" fill="none"/>
<path d="M1251.5 570.5h4M1253.5 570.5L1253.5 541.8A8.149999999999977 8.149999999999977 0 0 0 1237.2 544.2" stroke="#ffffff" fill="none"/><circle cx="1237.2" cy="544.2" r="1.8" stroke="#ffffff" fill="none"/>
<path d="M1116.5 668.0h4M1118.5 668.0L1118.5 649.2A7.25 7.25 0 0 1 1133.0 652.2" stroke="#ffffff" fill="none"/><circle cx="1133.0" cy="652.2" r="1.8" stroke="#ffffff" fill="none"/>
<path d="M1195.2 668.0h4M1197.2 668.0L1195.5 660.5A7.25 7.25 0 0 0 1181.0 659.2" stroke="#ffffff" fill="none"/><circle cx="1181.0" cy="659.2" r="1.8" stroke="#ffffff" fill="none"/>
<circle cx="1201" cy="460" r="3" stroke="#8a5048" fill="none"/><path d="M1201 463v9" stroke="#8a5048"/>
<path d="M991.0 408.0C995.2 414.2 1008.5 430.9 1016.0 445.5C1023.5 460.1 1031.0 483.4 1036.0 495.5C1041.0 507.6 1044.5 509.2 1046.0 518.0C1047.5 526.8 1045.4 537.2 1044.8 548.0C1044.2 558.8 1042.6 577.2 1042.2 583.0" stroke="#00d4e0" fill="none"/>
<path d="M1212.2 408.0C1210.3 413.4 1205.8 434.5 1201.0 440.5C1196.2 446.5 1190.2 437.5 1183.5 444.2C1176.8 450.9 1168.5 468.4 1161.0 480.5C1153.5 492.6 1146.0 505.1 1138.5 516.8C1131.0 528.5 1120.2 541.5 1116.0 550.5C1111.8 559.5 1111.8 562.6 1113.5 570.5C1115.2 578.4 1121.0 590.7 1126.0 598.0C1131.0 605.3 1140.6 611.5 1143.5 614.2" stroke="#00d4e0" fill="none"/>
<path d="M1138.5 516.8 L1178.5 533.0" stroke="#00d4e0" fill="none"/>
<path d="M1183.5 444.2 L1194.8 451.8" stroke="#00d4e0" fill="none"/>
<path d="M1216.0 438.0C1211.8 450.5 1196.4 496.3 1191.0 513.0C1185.6 529.7 1184.8 533.8 1183.5 538.0" stroke="#00d4e0" fill="none"/>
<circle cx="1182.2" cy="444.2" r="2.200" fill="#fff" stroke="#fff"/>
<circle cx="1138.0" cy="517.2" r="2.200" fill="#fff" stroke="#fff"/>
<path d="M1175.500 535.500h6v5h-6z" stroke="#fff" fill="none"/>
<path d="M1016.0 408.0C1017.2 414.2 1019.3 431.8 1023.5 445.5C1027.7 459.2 1037.0 478.8 1041.0 490.5C1045.0 502.2 1046.2 511.3 1047.2 515.5" stroke="#d9790f" fill="none" stroke-width="3" opacity="0.8"/>
<path d="M1003.5 408.0C1006.8 414.2 1017.2 431.8 1023.5 445.5C1029.8 459.2 1037.0 478.8 1041.0 490.5C1045.0 502.2 1046.2 511.3 1047.2 515.5" stroke="#d9790f" fill="none" stroke-width="7" stroke-dasharray="1 1.5"/>
<path d="M1049.8 516.8C1052.5 518.2 1061.2 521.1 1066.0 525.5C1070.8 529.9 1075.2 535.9 1078.5 543.0C1081.8 550.1 1083.9 558.8 1086.0 568.0C1088.1 577.2 1087.7 589.2 1091.0 598.0C1094.3 606.8 1100.2 613.8 1106.0 620.5C1111.8 627.2 1121.0 633.4 1126.0 638.0C1131.0 642.6 1134.3 646.3 1136.0 648.0" stroke="#d9790f" fill="none"/>
<path d="M1049.8 516.8C1052.5 518.2 1061.2 521.1 1066.0 525.5C1070.8 529.9 1075.2 535.9 1078.5 543.0C1081.8 550.1 1083.9 558.8 1086.0 568.0C1088.1 577.2 1087.7 589.2 1091.0 598.0C1094.3 606.8 1100.2 613.8 1106.0 620.5C1111.8 627.2 1121.0 633.4 1126.0 638.0C1131.0 642.6 1134.3 646.3 1136.0 648.0" stroke="#d9790f" fill="none" stroke-width="9" stroke-dasharray="1 5"/>
<path d="M1048.5 515.5C1051.2 516.8 1060.2 518.8 1064.8 523.0C1069.4 527.2 1072.9 533.0 1076.0 540.5C1079.1 548.0 1081.4 558.4 1083.5 568.0C1085.6 577.6 1085.2 589.0 1088.5 598.0C1091.8 607.0 1097.7 614.9 1103.5 621.8C1109.3 628.7 1120.2 636.3 1123.5 639.2" stroke="#d9790f" fill="none"/>
<path d="M1073.5 408.0C1075.2 412.2 1079.8 424.7 1083.5 433.0C1087.2 441.3 1090.6 449.2 1096.0 458.0C1101.4 466.8 1110.6 479.7 1116.0 485.5C1121.4 491.3 1123.5 495.5 1128.5 493.0C1133.5 490.5 1143.1 474.2 1146.0 470.5" stroke="#d9790f" fill="none"/>
<path d="M1073.5 408.0C1075.2 412.2 1079.8 424.7 1083.5 433.0C1087.2 441.3 1090.6 449.2 1096.0 458.0C1101.4 466.8 1110.6 479.7 1116.0 485.5C1121.4 491.3 1123.5 495.5 1128.5 493.0C1133.5 490.5 1143.1 474.2 1146.0 470.5" stroke="#d9790f" fill="none" stroke-width="8" stroke-dasharray="1 5"/>
<path d="M1069.5 408.0C1071.4 412.2 1077.0 424.7 1081.0 433.0C1085.0 441.3 1088.1 448.9 1093.5 458.0C1098.9 467.1 1107.7 481.2 1113.5 487.5C1119.3 493.8 1126.0 494.2 1128.5 495.5" stroke="#d9790f" fill="none"/>
<path d="M1121.0 410.5C1124.3 412.2 1133.5 417.6 1141.0 420.5C1148.5 423.4 1157.7 426.3 1166.0 428.0C1174.3 429.7 1184.3 432.2 1191.0 430.5C1197.7 428.8 1202.9 421.8 1206.0 418.0C1209.1 414.2 1209.2 409.7 1209.8 408.0" stroke="#d9790f" fill="none" stroke-width="7" stroke-dasharray="1 4"/>
<path d="M1118.5 413.0C1122.2 414.8 1133.1 420.5 1141.0 423.5C1148.9 426.5 1157.7 429.4 1166.0 431.0C1174.3 432.6 1185.6 432.9 1191.0 433.0C1196.4 433.1 1197.2 432.0 1198.5 431.8" stroke="#d9790f" fill="none"/>
<path d="M1091.0 448.0C1094.3 448.2 1103.5 449.6 1111.0 449.2C1118.5 448.8 1131.8 446.1 1136.0 445.5" stroke="#d9790f" fill="none"/>
<path d="M1091.0 448.0C1094.3 448.2 1103.5 449.6 1111.0 449.2C1118.5 448.8 1131.8 446.1 1136.0 445.5" stroke="#d9790f" fill="none" stroke-width="8" stroke-dasharray="1 5"/>
<path d="M1086.0 440.5C1089.3 441.3 1099.3 445.9 1106.0 445.5C1112.7 445.1 1119.3 439.7 1126.0 438.0C1132.7 436.3 1139.3 435.1 1146.0 435.5C1152.7 435.9 1160.2 438.8 1166.0 440.5C1171.8 442.2 1178.5 444.7 1181.0 445.5" stroke="#e60a14" fill="none"/>
<path d="M1081.0 545.5C1083.5 546.1 1090.2 548.6 1096.0 549.2C1101.8 549.8 1112.7 549.2 1116.0 549.2" stroke="#e60a14" fill="none"/>
<path d="M1091.0 408.0C1093.1 412.2 1100.2 424.7 1103.5 433.0C1106.8 441.3 1108.1 452.4 1111.0 458.0C1113.9 463.6 1119.3 465.3 1121.0 466.8" stroke="#ffffff" fill="none" stroke-dasharray="9 4"/>
<path d="M1118.5 466.0 L1141.0 465.5" stroke="#ffffff" fill="none"/>
<path d="M1161.0 439.2 L1181.0 440.5" stroke="#ffffff" fill="none" stroke-dasharray="6 3"/>
<path d="M1178.5 454.2C1172.2 460.2 1151.8 479.9 1141.0 490.5C1130.2 501.1 1121.8 508.0 1113.5 518.0C1105.2 528.0 1095.4 540.5 1091.0 550.5C1086.6 560.5 1086.4 568.4 1087.2 578.0C1088.0 587.6 1090.4 598.8 1096.0 608.0C1101.6 617.2 1113.9 626.8 1121.0 633.0C1128.1 639.2 1135.6 643.4 1138.5 645.5" stroke="#ffffff" fill="none" stroke-dasharray="9 5"/>
<path d="M1168.5 473.0C1163.9 478.4 1149.3 495.5 1141.0 505.5C1132.7 515.5 1123.9 524.2 1118.5 533.0C1113.1 541.8 1110.0 549.7 1108.5 558.0C1107.0 566.3 1107.7 574.7 1109.8 583.0C1111.9 591.3 1115.8 600.5 1121.0 608.0C1126.2 615.5 1137.7 624.7 1141.0 628.0" stroke="#ffffff" fill="none" stroke-dasharray="9 5"/>
<path d="M1007.2 561.8 L1001.0 593.0 L1041.0 605.5 L1076.0 608.0 L1096.0 633.0 L1106.0 668.0" stroke="#ffffff" fill="none" stroke-dasharray="9 5"/>
<path d="M1007.2 561.8 L1022.2 580.5 L1071.0 600.5 L1083.5 615.5" stroke="#ffffff" fill="none" stroke-dasharray="9 5"/>
<path d="M966.0 445.5C968.5 450.1 976.0 462.6 981.0 473.0C986.0 483.4 992.2 497.2 996.0 508.0C999.8 518.8 1003.5 528.0 1003.5 538.0C1003.5 548.0 996.8 558.0 996.0 568.0C995.2 578.0 995.2 591.3 998.5 598.0C1001.8 604.7 1011.0 602.2 1016.0 608.0C1021.0 613.8 1026.0 623.0 1028.5 633.0C1031.0 643.0 1030.6 662.2 1031.0 668.0" stroke="#d9790f" fill="none"/>
<path d="M1043.5 518.0C1043.9 524.7 1046.0 547.2 1046.0 558.0C1046.0 568.8 1044.3 574.7 1043.5 583.0C1042.7 591.3 1039.8 599.7 1041.0 608.0C1042.2 616.3 1046.8 623.0 1051.0 633.0C1055.2 643.0 1063.5 662.2 1066.0 668.0" stroke="#d9790f" fill="none"/>
<path d="M1048.5 498.0C1053.5 498.2 1068.9 497.9 1078.5 499.2C1088.1 500.4 1098.1 502.4 1106.0 505.5C1113.9 508.6 1120.6 515.9 1126.0 518.0C1131.4 520.1 1136.4 518.0 1138.5 518.0" stroke="#d9790f" fill="none"/>
<path d="M1063.0 408.0C1063.5 412.2 1062.2 424.7 1066.0 433.0C1069.8 441.3 1079.3 449.7 1086.0 458.0C1092.7 466.3 1100.2 476.3 1106.0 483.0C1111.8 489.7 1115.2 494.7 1121.0 498.0C1126.8 501.3 1137.7 502.2 1141.0 503.0" stroke="#d9790f" fill="none"/>
<path d="M1043.5 583.0C1047.2 584.2 1058.9 588.0 1066.0 590.5C1073.1 593.0 1081.8 594.2 1086.0 598.0C1090.2 601.8 1091.0 608.0 1091.0 613.0C1091.0 618.0 1088.5 624.5 1086.0 628.0C1083.5 631.5 1076.4 630.0 1076.0 634.2C1075.6 638.4 1081.0 647.4 1083.5 653.0C1086.0 658.6 1089.8 665.5 1091.0 668.0" stroke="#d9790f" fill="none"/>
<path d="M1141.0 528.0C1140.6 531.3 1137.7 540.9 1138.5 548.0C1139.3 555.1 1142.2 563.8 1146.0 570.5C1149.8 577.2 1158.5 585.1 1161.0 588.0" stroke="#d9790f" fill="none"/>
<path d="M1151.0 508.0C1150.6 514.7 1147.7 538.0 1148.5 548.0C1149.3 558.0 1152.7 562.2 1156.0 568.0C1159.3 573.8 1166.4 580.5 1168.5 583.0" stroke="#d9790f" fill="none"/>
<path d="M1161.0 490.5C1160.6 499.2 1158.1 530.9 1158.5 543.0C1158.9 555.1 1161.4 558.0 1163.5 563.0C1165.6 568.0 1169.8 571.3 1171.0 573.0" stroke="#d9790f" fill="none"/>
<path d="M1168.5 478.0C1168.1 487.2 1165.8 519.7 1166.0 533.0C1166.2 546.3 1169.2 553.8 1169.8 558.0" stroke="#d9790f" fill="none"/>
<path d="M1131.0 538.0C1130.6 541.3 1127.7 550.5 1128.5 558.0C1129.3 565.5 1131.8 576.3 1136.0 583.0C1140.2 589.7 1150.6 595.5 1153.5 598.0" stroke="#d9790f" fill="none"/>
<path d="M1119.8 550.5C1120.0 553.4 1118.3 561.8 1121.0 568.0C1123.7 574.2 1130.8 583.0 1136.0 588.0C1141.2 593.0 1149.5 596.3 1152.2 598.0" stroke="#e60a14" fill="none"/>
<path d="M1171.0 468.0C1166.0 475.9 1148.5 500.5 1141.0 515.5C1133.5 530.5 1126.8 544.2 1126.0 558.0C1125.2 571.8 1134.3 591.3 1136.0 598.0" stroke="#0a8a0a" fill="none" stroke-dasharray="8 3 1 3"/>
<path d="M1178.5 543.0C1180.6 545.5 1184.8 553.4 1191.0 558.0C1197.2 562.6 1207.7 566.8 1216.0 570.5C1224.3 574.2 1235.2 578.6 1241.0 580.5C1246.8 582.4 1249.3 581.6 1251.0 581.8" stroke="#d9790f" fill="none"/>
<path d="M1251.0 581.8 L1266.0 586.0" stroke="#d9790f" fill="none"/>
<path d="M1251.0 581.8 L1266.0 586.0" stroke="#d9790f" fill="none" stroke-width="8" stroke-dasharray="1 5"/>
<path d="M1226.0 440.5C1227.7 445.5 1233.5 460.9 1236.0 470.5C1238.5 480.1 1238.1 490.1 1241.0 498.0C1243.9 505.9 1249.3 513.0 1253.5 518.0C1257.7 523.0 1263.9 526.3 1266.0 528.0" stroke="#d9790f" fill="none"/>
<path d="M1241.0 600.5 L1266.0 603.5" stroke="#e60a14" fill="none"/>
<path d="M1238.5 611.8 L1266.0 616.0" stroke="#d9790f" fill="none"/>
<path d="M1233.5 620.5 L1266.0 626.0" stroke="#d9790f" fill="none"/>
<path d="M1228.5 630.5 L1266.0 636.0" stroke="#d9790f" fill="none"/>
<path d="M1223.5 640.5 L1266.0 646.0" stroke="#d9790f" fill="none"/>
<path d="M1218.5 648.0C1222.2 648.6 1233.1 650.1 1241.0 651.8C1248.9 653.5 1261.8 657.0 1266.0 658.0" stroke="#e60a14" fill="none"/>
<path d="M1216.0 651.8C1220.2 653.2 1234.3 657.8 1241.0 660.5C1247.7 663.2 1253.5 666.8 1256.0 668.0" stroke="#00d4e0" fill="none"/>
<text x="1072.2" y="413.0" fill="#ffffff" font-size="11.5">555</text>
<text x="1219.8" y="414.2" fill="#ffffff" font-size="11.5">557.2</text>
<text x="1139.8" y="450.5" fill="#ffffff" font-size="11.5">554.5</text>
<text x="1040.5" y="465.5" fill="#ffffff" font-size="11.5">551.3</text>
<text x="983.5" y="484.2" fill="#ffffff" font-size="11.5">546.2</text>
<text x="966.0" y="524.2" fill="#ffffff" font-size="11.5">.5</text>
<text x="1087.8" y="528.8" fill="#ffffff" font-size="11.5">550.4</text>
<text x="1040.5" y="562.2" fill="#ffffff" font-size="11.5">548.6</text>
<text x="995.5" y="578.5" fill="#ffffff" font-size="11.5">546.1</text>
<text x="1084.0" y="582.2" fill="#ffffff" font-size="11.5">549.6</text>
<text x="1179.8" y="581.8" fill="#ffffff" font-size="11.5">556.5</text>
<text x="1048.5" y="613.5" fill="#ffffff" font-size="11.5">547.6</text>
<text x="966.0" y="656.8" fill="#ffffff" font-size="11.5">5</text>
<text x="1025.2" y="665.5" fill="#ffffff" font-size="11.5">546.2</text>
<text x="1082.8" y="657.5" fill="#ffffff" font-size="11.5">548.1</text>
<path d="M1322.2 408.0 L1266.0 525.5" stroke="#ffffff" fill="none"/>
<path d="M1281.0 453.0 L1272.2 470.5" stroke="#ffffff" fill="none"/>
<path d="M1281.0 408.0 L1261.0 428.0" stroke="#ffffff" fill="none"/>
<path d="M1331.0 408.0 L1320.5 434.2" stroke="#ffffff" fill="none"/>
<path d="M1317.2 434.2 L1323.5 434.2" stroke="#ffffff" fill="none"/>
<path d="M1313.5 430.5 L1276.0 508.0" stroke="#8a5048" fill="none" stroke-dasharray="7 22"/>
<path d="M1426.0 408.0C1422.7 414.2 1413.5 430.9 1406.0 445.5C1398.5 460.1 1389.8 478.4 1381.0 495.5C1372.2 512.6 1361.4 532.6 1353.5 548.0C1345.6 563.4 1337.9 578.0 1333.5 588.0C1329.1 598.0 1328.5 594.7 1327.2 608.0C1326.0 621.3 1326.2 658.0 1326.0 668.0" stroke="#00d4e0" fill="none"/>
<path d="M1413.5 415.5C1409.8 421.8 1398.9 439.2 1391.0 453.0C1383.1 466.8 1373.1 483.8 1366.0 498.0C1358.9 512.2 1353.9 524.7 1348.5 538.0C1343.1 551.3 1337.7 569.2 1333.5 578.0C1329.3 586.8 1325.2 588.4 1323.5 590.5" stroke="#d9790f" fill="none"/>
<path d="M1413.5 415.5C1409.8 421.8 1398.9 439.2 1391.0 453.0C1383.1 466.8 1373.1 483.8 1366.0 498.0C1358.9 512.2 1353.9 524.7 1348.5 538.0C1343.1 551.3 1337.7 569.2 1333.5 578.0C1329.3 586.8 1325.2 588.4 1323.5 590.5" stroke="#d9790f" fill="none" stroke-width="10" stroke-dasharray="1 5"/>
<path d="M1408.5 415.5C1404.8 421.8 1393.9 439.2 1386.0 453.0C1378.1 466.8 1368.0 483.8 1361.0 498.0C1354.0 512.2 1349.3 524.7 1344.0 538.0C1338.7 551.3 1331.5 571.3 1329.0 578.0" stroke="#d9790f" fill="none"/>
<path d="M1446.0 408.0C1444.8 411.3 1443.5 418.4 1438.5 428.0C1433.5 437.6 1423.9 452.2 1416.0 465.5C1408.1 478.8 1398.5 495.9 1391.0 508.0C1383.5 520.1 1378.1 526.3 1371.0 538.0C1363.9 549.7 1352.2 571.3 1348.5 578.0" stroke="#d9790f" fill="none"/>
<path d="M1446.0 408.0C1444.8 411.3 1443.5 418.4 1438.5 428.0C1433.5 437.6 1423.9 452.2 1416.0 465.5C1408.1 478.8 1398.5 495.9 1391.0 508.0C1383.5 520.1 1378.1 526.3 1371.0 538.0C1363.9 549.7 1352.2 571.3 1348.5 578.0" stroke="#d9790f" fill="none" stroke-width="10" stroke-dasharray="1 5"/>
<path d="M1446.0 408.0C1445.6 411.8 1447.7 420.5 1443.5 430.5C1439.3 440.5 1428.9 454.7 1421.0 468.0C1413.1 481.3 1403.5 498.4 1396.0 510.5C1388.5 522.6 1383.1 528.8 1376.0 540.5C1368.9 552.2 1357.2 573.8 1353.5 580.5" stroke="#d9790f" fill="none"/>
<path d="M1266.0 528.0C1268.5 531.5 1274.8 547.5 1281.0 549.2C1287.2 550.9 1295.6 544.0 1303.5 538.0C1311.4 532.0 1320.2 522.2 1328.5 513.0C1336.8 503.8 1345.6 492.2 1353.5 483.0C1361.4 473.8 1368.9 465.9 1376.0 458.0C1383.1 450.1 1390.6 442.2 1396.0 435.5C1401.4 428.8 1406.4 420.9 1408.5 418.0" stroke="#d9790f" fill="none"/>
<path d="M1441.0 430.5C1441.0 433.4 1439.3 443.2 1441.0 448.0C1442.7 452.8 1444.8 457.1 1451.0 459.2C1457.2 461.3 1467.7 459.7 1478.5 460.5C1489.3 461.3 1506.0 462.5 1516.0 464.2C1526.0 465.9 1534.8 469.4 1538.5 470.5" stroke="#d9790f" fill="none"/>
<path d="M1371.0 548.0C1370.6 551.3 1366.8 563.0 1368.5 568.0C1370.2 573.0 1376.0 577.6 1381.0 578.0C1386.0 578.4 1392.2 573.0 1398.5 570.5C1404.8 568.0 1415.2 564.2 1418.5 563.0" stroke="#d9790f" fill="none"/>
<path d="M1266.0 592.5C1271.0 592.9 1286.4 595.0 1296.0 595.0C1305.6 595.0 1318.9 592.9 1323.5 592.5" stroke="#d9790f" fill="none"/>
<path d="M1266.0 592.5C1271.0 592.9 1286.4 595.0 1296.0 595.0C1305.6 595.0 1318.9 592.9 1323.5 592.5" stroke="#d9790f" fill="none" stroke-width="9" stroke-dasharray="1 5"/>
<path d="M1266.0 588.5C1271.0 588.9 1286.6 591.0 1296.0 591.0C1305.4 591.0 1317.8 588.9 1322.2 588.5" stroke="#d9790f" fill="none"/>
<path d="M1341.0 584.2C1345.2 584.5 1357.7 586.6 1366.0 586.0C1374.3 585.4 1382.7 583.8 1391.0 580.5C1399.3 577.2 1411.8 568.4 1416.0 566.0" stroke="#d9790f" fill="none"/>
<path d="M1341.0 584.2C1345.2 584.5 1357.7 586.6 1366.0 586.0C1374.3 585.4 1382.7 583.8 1391.0 580.5C1399.3 577.2 1411.8 568.4 1416.0 566.0" stroke="#d9790f" fill="none" stroke-width="10" stroke-dasharray="1 5"/>
<path d="M1338.5 580.5C1338.9 582.2 1336.4 589.0 1341.0 590.5C1345.6 592.0 1357.7 590.2 1366.0 589.2C1374.3 588.2 1384.3 584.4 1391.0 584.2C1397.7 584.0 1403.5 587.4 1406.0 588.0" stroke="#d9790f" fill="none"/>
<path d="M1401.0 418.0 L1409.8 431.8" stroke="#ffffff" fill="none" stroke-dasharray="8 3 2 3"/>
<path d="M1406.0 425.5 L1410.5 433.0" stroke="#e60a14" fill="none"/>
<path d="M1418.5 563.0 L1391.0 623.0 L1369.8 668.0" stroke="#e60a14" fill="none"/>
<path d="M1486.0 435.5 L1379.8 668.0" stroke="#ffffff" fill="none"/>
<path d="M1503.5 408.0 L1401.0 638.0" stroke="#ffffff" fill="none" stroke-dasharray="45 25"/>
<path d="M1523.5 408.0 L1407.2 668.0" stroke="#ffffff" fill="none"/>
<path d="M1546.0 408.0 L1426.0 668.0" stroke="#ffffff" fill="none"/>
<path d="M1552.0 445.5 L1456.0 658.0" stroke="#ffffff" fill="none" stroke-dasharray="45 25"/>
<path d="M1552.0 490.5C1548.1 498.4 1536.2 522.6 1528.5 538.0C1520.8 553.4 1513.5 574.2 1506.0 583.0C1498.5 591.8 1490.2 585.1 1483.5 590.5C1476.8 595.9 1472.2 602.6 1466.0 615.5C1459.8 628.4 1449.3 659.2 1446.0 668.0" stroke="#e60a14" fill="none"/>
<path d="M1552.0 455.5C1549.8 458.4 1542.8 464.2 1538.5 473.0C1534.2 481.8 1530.2 496.3 1526.0 508.0C1521.8 519.7 1518.1 532.2 1513.5 543.0C1508.9 553.8 1503.1 565.5 1498.5 573.0C1493.9 580.5 1488.1 585.5 1486.0 588.0" stroke="#d9790f" fill="none"/>
<path d="M1552.0 455.5C1549.8 458.4 1542.8 464.2 1538.5 473.0C1534.2 481.8 1530.2 496.3 1526.0 508.0C1521.8 519.7 1518.1 532.2 1513.5 543.0C1508.9 553.8 1503.1 565.5 1498.5 573.0C1493.9 580.5 1488.1 585.5 1486.0 588.0" stroke="#d9790f" fill="none" stroke-width="10" stroke-dasharray="1 5"/>
<path d="M1552.0 463.0C1550.4 465.1 1545.9 467.6 1542.2 475.5C1538.5 483.4 1534.0 498.8 1529.8 510.5C1525.6 522.2 1521.8 534.7 1517.2 545.5C1512.6 556.3 1504.7 570.5 1502.2 575.5" stroke="#d9790f" fill="none"/>
<path d="M1491.0 415.5 L1416.0 583.0" stroke="#8a5048" fill="none" stroke-dasharray="7 22"/>
<path d="M1531.0 458.0 L1438.5 665.5" stroke="#8a5048" fill="none" stroke-dasharray="7 22"/>
<path d="M1413.5 587.5 L1464.8 611.0" stroke="#a000a0" fill="none" stroke-width="2"/>
<path d="M1419.8 601.5l-4 9h5zM1418.3 610.5l-4 9" stroke="#fff" fill="none"/>
<path d="M1436.0 611.5l-4 9h5zM1434.5 620.5l-4 9" stroke="#fff" fill="none"/>
<path d="M1431.0 626.5l-4 9h5zM1429.5 635.5l-4 9" stroke="#fff" fill="none"/>
<path d="M1442.0 514.2h4M1444.0 514.2L1444.0 484.2A7.5 7.5 0 0 1 1459.0 487.5" stroke="#ffffff" fill="none"/><circle cx="1459.0" cy="487.5" r="1.8" stroke="#ffffff" fill="none"/>
<path d="M1391.5 627.5h4M1393.5 627.5L1393.5 595.5A7.5 7.5 0 0 1 1408.5 599.2" stroke="#ffffff" fill="none"/><circle cx="1408.5" cy="599.2" r="1.8" stroke="#ffffff" fill="none"/>
<path d="M1500 546l8-2 4 6-7 3z" stroke="#8a5048" fill="none"/>
<path d="M1266.0 603.5 L1296.0 605.5 L1326.0 605.5 L1328.5 600.5 L1331.0 605.5 L1366.0 598.0 L1391.0 594.2 L1401.0 598.0" stroke="#e60a14" fill="none"/>
<path d="M1266.0 616.0C1276.0 615.9 1309.3 616.8 1326.0 615.5C1342.7 614.2 1354.3 609.7 1366.0 608.0C1377.7 606.3 1391.0 605.9 1396.0 605.5" stroke="#d9790f" fill="none"/>
<path d="M1266.0 626.0C1276.0 625.9 1309.3 626.6 1326.0 625.5C1342.7 624.4 1354.8 620.5 1366.0 619.2C1377.2 618.0 1388.9 618.2 1393.5 618.0" stroke="#d9790f" fill="none"/>
<path d="M1266.0 636.0C1276.0 636.1 1309.3 637.7 1326.0 636.8C1342.7 635.9 1355.6 632.0 1366.0 630.5C1376.4 629.0 1384.8 628.4 1388.5 628.0" stroke="#d9790f" fill="none"/>
<path d="M1266.0 646.0C1276.0 646.1 1309.3 647.7 1326.0 646.8C1342.7 645.9 1356.4 642.0 1366.0 640.5C1375.6 639.0 1380.6 638.4 1383.5 638.0" stroke="#d9790f" fill="none"/>
<path d="M1266.0 658.0 L1326.0 658.0 L1328.5 654.2 L1331.5 658.0 L1353.5 663.0 L1371.0 666.8" stroke="#e60a14" fill="none"/>
<path d="M1266.0 660.5 L1356.0 664.2" stroke="#0a8a0a" fill="none" stroke-dasharray="8 3 1 3"/>
<path d="M1381.0 639.2 L1346.0 665.5" stroke="#00d4e0" fill="none"/>
<path d="M1468.5 620.5C1472.2 619.7 1483.9 619.2 1491.0 615.5C1498.1 611.8 1504.3 605.9 1511.0 598.0C1517.7 590.1 1524.2 579.7 1531.0 568.0C1537.8 556.3 1548.5 534.7 1552.0 528.0" stroke="#d9790f" fill="none"/>
<path d="M1466.0 628.0C1470.2 627.2 1482.7 627.2 1491.0 623.0C1499.3 618.8 1508.5 611.3 1516.0 603.0C1523.5 594.7 1530.0 583.0 1536.0 573.0C1542.0 563.0 1549.3 548.0 1552.0 543.0" stroke="#d9790f" fill="none"/>
<path d="M1463.5 635.5C1468.1 634.7 1481.8 634.7 1491.0 630.5C1500.2 626.3 1510.2 619.2 1518.5 610.5C1526.8 601.8 1535.4 586.8 1541.0 578.0C1546.6 569.2 1550.2 561.3 1552.0 558.0" stroke="#d9790f" fill="none"/>
<path d="M1459.8 643.0C1465.0 642.2 1480.8 642.2 1491.0 638.0C1501.2 633.8 1512.2 626.3 1521.0 618.0C1529.8 609.7 1538.3 595.5 1543.5 588.0C1548.7 580.5 1550.6 575.5 1552.0 573.0" stroke="#d9790f" fill="none"/>
<path d="M1456.0 650.5C1461.8 649.7 1479.8 649.7 1491.0 645.5C1502.2 641.3 1513.3 634.7 1523.5 625.5C1533.7 616.3 1547.2 596.3 1552.0 590.5" stroke="#d9790f" fill="none"/>
<path d="M1448.5 658.0 L1491.0 655.5 L1506.0 643.0 L1526.0 623.0 L1541.0 628.0 L1536.0 653.0 L1531.0 668.0" stroke="#e60a14" fill="none"/>
<path d="M1448.5 658.0 L1491.0 658.0" stroke="#0a8a0a" fill="none" stroke-dasharray="8 3 1 3"/>
<path d="M1552.0 563.0C1549.3 568.8 1542.0 586.3 1536.0 598.0C1530.0 609.7 1521.8 623.0 1516.0 633.0C1510.2 643.0 1503.5 653.8 1501.0 658.0" stroke="#0a8a0a" fill="none" stroke-dasharray="8 3 1 3"/>
<path d="M1552.0 593.0C1548.5 598.8 1537.8 615.5 1531.0 628.0C1524.2 640.5 1514.3 661.3 1511.0 668.0" stroke="#ffffff" fill="none" stroke-dasharray="9 5"/>
<path d="M1552.0 623.0 L1536.0 668.0" stroke="#ffffff" fill="none" stroke-dasharray="9 5"/>
<path d="M1541.0 633.0 L1526.0 668.0" stroke="#ffffff" fill="none" stroke-dasharray="9 5"/>
<text x="1323.5" y="418.0" fill="#ffffff" font-size="11.5">557.7</text>
<text x="1264.8" y="430.5" fill="#ffffff" font-size="11.5">557.5</text>
<text x="1449.8" y="414.2" fill="#ffffff" font-size="11.5">558.2</text>
<text x="1282.2" y="494.2" fill="#ffffff" font-size="11.5">557.1</text>
<text x="1328.0" y="505.0" fill="#ffffff" font-size="11.5">556.9</text>
<text x="1403.0" y="479.2" fill="#ffffff" font-size="11.5">557.7</text>
<text x="1444.8" y="525.5" fill="#ffffff" font-size="11.5">557.6</text>
<text x="1372.2" y="545.5" fill="#ffffff" font-size="11.5">557.2</text>
<text x="1266.5" y="572.5" fill="#ffffff" font-size="11.5">556.6</text>
<text x="1415.5" y="600.0" fill="#ffffff" font-size="11.5">557.2</text>
<text x="1386.5" y="649.2" fill="#ffffff" font-size="11.5">556 9</text>
<text x="1498.0" y="651.2" fill="#ffffff" font-size="11.5">549.4</text>
<text x="1524.0" y="595.5" fill="#ffffff" font-size="11.5">550.6</text>
<text x="1541.0" y="546.2" fill="#ffffff" font-size="11.5">55</text>
<path d="M366.0 700.5C368.1 697.6 374.3 687.4 378.5 683.0C382.7 678.6 385.6 675.9 391.0 674.2C396.4 672.5 404.3 671.5 411.0 673.0C417.7 674.5 426.0 678.4 431.0 683.0C436.0 687.6 438.5 694.7 441.0 700.5C443.5 706.3 444.8 712.8 446.0 718.0C447.2 723.2 448.1 729.5 448.5 731.8" stroke="#e60a14" fill="none"/>
<path d="M448.5 731.8C450.2 731.2 452.2 729.0 458.5 728.0C464.8 727.0 478.1 727.0 486.0 725.5C493.9 724.0 501.4 721.3 506.0 719.2C510.6 717.1 512.2 714.0 513.5 713.0" stroke="#e60a14" fill="none"/>
<path d="M438.5 668.0C439.3 673.0 441.4 685.5 443.5 698.0C445.6 710.5 448.9 727.2 451.0 743.0C453.1 758.8 454.5 776.3 456.0 793.0C457.5 809.7 458.8 828.2 459.8 843.0C460.8 857.8 461.8 875.5 462.2 882.0" stroke="#00d4e0" fill="none"/>
<path d="M448.5 668.0C449.3 673.0 451.4 685.5 453.5 698.0C455.6 710.5 458.9 724.7 461.0 743.0C463.1 761.3 464.3 784.8 466.0 808.0C467.7 831.2 470.2 869.7 471.0 882.0" stroke="#ffffff" fill="none"/>
<path d="M433.5 668.0C437.4 674.2 452.0 690.9 457.2 705.5C462.4 720.1 462.7 736.8 464.8 755.5C466.9 774.2 468.1 796.9 469.8 818.0C471.5 839.1 474.0 871.3 474.8 882.0" stroke="#ffffff" fill="none"/>
<path d="M471.0 668.0C472.2 676.3 476.0 700.5 478.5 718.0C481.0 735.5 484.1 754.2 486.0 773.0C487.9 791.8 488.8 812.3 489.8 830.5C490.8 848.7 491.8 873.4 492.2 882.0" stroke="#ffffff" fill="none"/>
<path d="M481.0 668.0C481.3 677.2 482.2 705.5 483.0 723.0C483.8 740.5 485.5 764.7 486.0 773.0" stroke="#ffffff" fill="none"/>
<path d="M501.0 668.0C501.4 680.5 502.7 719.7 503.5 743.0C504.3 766.3 505.2 784.8 506.0 808.0C506.8 831.2 508.1 869.7 508.5 882.0" stroke="#ffffff" fill="none"/>
<path d="M506.0 668.0 L511.0 713.0" stroke="#ffffff" fill="none"/>
<path d="M476.0 668.0 L481.0 725.5" stroke="#ffffff" fill="none" stroke-width="10" stroke-dasharray="1 5"/>
<path d="M480 726v14l3 5 2-5v-14z" stroke="#fff" fill="none"/>
<path d="M444.0 716.8h4M446.0 716.8L446.0 688.0A7.25 7.25 0 0 1 460.5 688.5" stroke="#ffffff" fill="none"/><circle cx="460.5" cy="688.5" r="1.8" stroke="#ffffff" fill="none"/>
<path d="M509.5 714.2h4M511.5 714.2L511.5 684.2A8.349999999999994 8.349999999999994 0 0 0 494.8 686.0" stroke="#ffffff" fill="none"/><circle cx="494.8" cy="686.0" r="1.8" stroke="#ffffff" fill="none"/>
<path d="M394.0 829.2h4M396.0 829.2L396.0 799.2A8.099999999999994 8.099999999999994 0 0 0 379.8 802.5" stroke="#ffffff" fill="none"/><circle cx="379.8" cy="802.5" r="1.8" stroke="#ffffff" fill="none"/>
<path d="M512.0 855.5h4M514.0 855.5L514.0 824.2A7.75 7.75 0 0 0 498.5 826.2" stroke="#ffffff" fill="none"/><circle cx="498.5" cy="826.2" r="1.8" stroke="#ffffff" fill="none"/>
<path d="M494.8 684.0l-3 10v12M494.8 684.0l3 8-2 8" stroke="#fff" fill="none"/>
<path d="M499.8 814.0l-3 10v12M499.8 814.0l3 8-2 8" stroke="#fff" fill="none"/>
<path d="M379.8 824.0l-3 10v12M379.8 824.0l3 8-2 8" stroke="#fff" fill="none"/>
<path d="M509.8 668.0C510.2 680.5 511.6 718.0 512.2 743.0C512.8 768.0 513.1 794.8 513.5 818.0C513.9 841.2 514.6 871.3 514.8 882.0" stroke="#8a5048" fill="none" stroke-dasharray="6 4"/>
<path d="M502.2 743.0 L508.5 818.0" stroke="#8a5048" fill="none" stroke-dasharray="6 4"/>
<path d="M448.5 713.0 L452.2 750.5" stroke="#8a5048" fill="none" stroke-dasharray="6 12"/>
<path d="M366.0 743.0 L381.0 798.0" stroke="#8a5048" fill="none" stroke-dasharray="6 12"/>
<path d="M553.5 668.0C552.2 673.0 548.1 687.6 546.0 698.0C543.9 708.4 543.1 718.0 541.0 730.5C538.9 743.0 536.0 758.4 533.5 773.0C531.0 787.6 528.5 803.8 526.0 818.0C523.5 832.2 520.4 847.3 518.5 858.0C516.6 868.7 515.4 878.0 514.8 882.0" stroke="#d9790f" fill="none"/>
<path d="M553.5 668.0C552.2 673.0 548.1 687.6 546.0 698.0C543.9 708.4 543.1 718.0 541.0 730.5C538.9 743.0 536.0 758.4 533.5 773.0C531.0 787.6 528.5 803.8 526.0 818.0C523.5 832.2 520.4 847.3 518.5 858.0C516.6 868.7 515.4 878.0 514.8 882.0" stroke="#d9790f" fill="none" stroke-width="10" stroke-dasharray="1 5"/>
<path d="M548.5 668.0C547.2 673.0 543.1 687.6 541.0 698.0C538.9 708.4 538.1 718.0 536.0 730.5C533.9 743.0 531.0 758.4 528.5 773.0C526.0 787.6 523.4 803.8 521.0 818.0C518.6 832.2 515.2 851.3 514.0 858.0" stroke="#d9790f" fill="none"/>
<path d="M558.5 668.0C557.2 673.0 553.1 687.6 551.0 698.0C548.9 708.4 548.1 718.0 546.0 730.5C543.9 743.0 541.0 758.4 538.5 773.0C536.0 787.6 533.5 803.8 531.0 818.0C528.5 832.2 525.5 847.3 523.5 858.0C521.5 868.7 519.8 878.0 519.0 882.0" stroke="#d9790f" fill="none"/>
<path d="M366.0 760.5C368.5 768.4 375.6 787.8 381.0 808.0C386.4 828.2 395.6 869.7 398.5 882.0" stroke="#ffffff" fill="none"/>
<path d="M366.0 828.0 L376.0 882.0" stroke="#ffffff" fill="none"/>
<path d="M366.0 768.0C368.1 763.8 373.1 748.8 378.5 743.0C383.9 737.2 391.4 734.2 398.5 733.0C405.6 731.8 414.3 732.2 421.0 735.5C427.7 738.8 433.9 745.5 438.5 753.0C443.1 760.5 445.8 771.3 448.5 780.5C451.2 789.7 453.8 803.4 454.8 808.0" stroke="#d9790f" fill="none"/>
<path d="M366.0 804.2C368.5 801.9 374.8 793.6 381.0 790.5C387.2 787.4 396.4 785.1 403.5 785.5C410.6 785.9 417.7 788.4 423.5 793.0C429.3 797.6 434.3 804.7 438.5 813.0C442.7 821.3 446.0 831.5 448.5 843.0C451.0 854.5 452.7 875.5 453.5 882.0" stroke="#d9790f" fill="none"/>
<path d="M366.0 854.2C368.5 853.2 375.6 849.5 381.0 848.0C386.4 846.5 392.7 844.7 398.5 845.5C404.3 846.3 410.6 849.2 416.0 853.0C421.4 856.8 427.2 863.2 431.0 868.0C434.8 872.8 437.2 879.7 438.5 882.0" stroke="#d9790f" fill="none"/>
<path d="M454.8 806.8C460.0 805.3 477.5 801.1 486.0 798.0C494.5 794.9 502.7 789.7 506.0 788.0" stroke="#d9790f" fill="none"/>
<path d="M616.0 668.0C613.1 670.5 603.1 674.7 598.5 683.0C593.9 691.3 591.0 710.5 588.5 718.0C586.0 725.5 590.6 726.3 583.5 728.0C576.4 729.7 552.2 728.0 546.0 728.0" stroke="#d9790f" fill="none"/>
<path d="M606.0 668.0C603.5 674.2 595.6 691.8 591.0 705.5C586.4 719.2 582.7 736.8 578.5 750.5C574.3 764.2 569.3 778.4 566.0 788.0C562.7 797.6 564.3 803.8 558.5 808.0C552.7 812.2 535.6 812.2 531.0 813.0" stroke="#d9790f" fill="none"/>
<path d="M626.0 668.0C622.7 674.2 611.8 691.8 606.0 705.5C600.2 719.2 596.4 735.1 591.0 750.5C585.6 765.9 579.3 784.7 573.5 798.0C567.7 811.3 561.8 820.5 556.0 830.5C550.2 840.5 543.5 849.4 538.5 858.0C533.5 866.6 528.1 878.0 526.0 882.0" stroke="#d9790f" fill="none"/>
<path d="M636.0 668.0C632.7 674.7 621.8 693.4 616.0 708.0C610.2 722.6 606.0 740.5 601.0 755.5C596.0 770.5 591.8 785.1 586.0 798.0C580.2 810.9 573.5 821.3 566.0 833.0C558.5 844.7 546.8 859.8 541.0 868.0C535.2 876.2 532.7 879.7 531.0 882.0" stroke="#d9790f" fill="none"/>
<path d="M646.0 668.0C643.1 674.2 634.3 690.9 628.5 705.5C622.7 720.1 617.2 738.4 611.0 755.5C604.8 772.6 597.2 793.4 591.0 808.0C584.8 822.6 580.2 830.7 573.5 843.0C566.8 855.3 554.8 875.5 551.0 882.0" stroke="#d9790f" fill="none"/>
<path d="M656.0 668.0C652.7 675.5 642.7 697.6 636.0 713.0C629.3 728.4 622.7 746.3 616.0 760.5C609.3 774.7 600.2 786.8 596.0 798.0C591.8 809.2 593.9 818.0 591.0 828.0C588.1 838.0 582.2 849.0 578.5 858.0C574.8 867.0 570.2 878.0 568.5 882.0" stroke="#e60a14" fill="none"/>
<path d="M666.0 678.0C662.7 684.7 652.7 703.8 646.0 718.0C639.3 732.2 632.7 748.8 626.0 763.0C619.3 777.2 610.6 790.5 606.0 803.0C601.4 815.5 601.8 824.8 598.5 838.0C595.2 851.2 588.1 874.7 586.0 882.0" stroke="#d9790f" fill="none"/>
<path d="M666.0 705.5C663.1 711.8 654.3 730.1 648.5 743.0C642.7 755.9 636.4 770.5 631.0 783.0C625.6 795.5 619.8 806.3 616.0 818.0C612.2 829.7 610.6 842.3 608.5 853.0C606.4 863.7 604.3 877.2 603.5 882.0" stroke="#d9790f" fill="none"/>
<path d="M666.0 733.0C663.9 738.0 658.1 752.2 653.5 763.0C648.9 773.8 642.7 786.3 638.5 798.0C634.3 809.7 630.6 822.2 628.5 833.0C626.4 843.8 623.9 854.8 626.0 863.0C628.1 871.2 638.5 878.8 641.0 882.0" stroke="#d9790f" fill="none"/>
<path d="M666.0 763.0C663.9 765.9 656.4 774.7 653.5 780.5C650.6 786.3 648.5 791.8 648.5 798.0C648.5 804.2 651.8 811.3 653.5 818.0C655.2 824.7 657.7 834.7 658.5 838.0" stroke="#e60a14" fill="none"/>
<path d="M666.0 785.5C663.1 789.2 653.5 800.9 648.5 808.0C643.5 815.1 638.9 819.7 636.0 828.0C633.1 836.3 629.3 850.5 631.0 858.0C632.7 865.5 640.2 871.3 646.0 873.0C651.8 874.7 662.7 868.8 666.0 868.0" stroke="#d9790f" fill="none"/>
<path d="M581.0 673.0C580.8 680.5 578.5 704.7 579.8 718.0C581.0 731.3 584.5 743.4 588.5 753.0C592.5 762.6 597.7 770.7 603.5 775.5C609.3 780.3 616.8 781.4 623.5 781.8C630.2 782.2 636.4 780.7 643.5 778.0C650.6 775.3 662.2 767.6 666.0 765.5" stroke="#00e000" fill="none" stroke-dasharray="8 3 1 3"/>
<path d="M666.0 793.0C663.9 797.2 654.8 809.7 653.5 818.0C652.2 826.3 660.6 832.3 658.5 843.0C656.4 853.7 643.9 875.5 641.0 882.0" stroke="#0a8a0a" fill="none"/>
<path d="M666.0 793.0C663.9 797.2 654.8 809.7 653.5 818.0C652.2 826.3 660.6 832.3 658.5 843.0C656.4 853.7 643.9 875.5 641.0 882.0" stroke="#0a8a0a" fill="none" stroke-width="5" stroke-dasharray="1 30"/>
<path d="M626.0 848.0 L606.0 882.0" stroke="#0a8a0a" fill="none" stroke-dasharray="8 3 1 3"/>
<path d="M513.5 882.0 L551.0 845.5 L563.5 830.5 L592.2 830.5 L586.0 848.0 L573.5 844.2 L558.5 858.0 L541.0 882.0" stroke="#ffffff" fill="none"/>
<path d="M551.0 845.5 L561.0 855.5" stroke="#ffffff" fill="none"/>
<path d="M561.0 882.0 L568.5 873.0 L581.0 880.5 L579.8 882.0" stroke="#e60a14" fill="none" stroke-width="2"/>
<path d="M558.5 668.0C561.0 668.6 568.5 671.8 573.5 671.8C578.5 671.8 586.0 668.6 588.5 668.0" stroke="#e60a14" fill="none"/>
<text x="386.0" y="703.0" fill="#ffffff" font-size="11.5">565.1</text>
<text x="537.2" y="703.0" fill="#ffffff" font-size="11.5">569.4</text>
<text x="387.2" y="764.2" fill="#ffffff" font-size="11.5">566.3</text>
<text x="460.5" y="775.0" fill="#ffffff" font-size="11.5">565 7</text>
<text x="523.5" y="766.2" fill="#ffffff" font-size="11.5">568.6</text>
<text x="393.0" y="821.0" fill="#ffffff" font-size="11.5">567.4</text>
<text x="510.5" y="835.0" fill="#ffffff" font-size="11.5">567.4</text>
<text x="553.5" y="835.0" fill="#ffffff" font-size="11.5">565.2</text>
<text x="468.0" y="843.0" fill="#ffffff" font-size="11.5">566.6</text>
<text x="621.0" y="836.8" fill="#ffffff" font-size="11.5">560.9</text>
<text x="650.5" y="800.5" fill="#ffffff" font-size="11.5">559.4</text>
<text x="397.2" y="875.0" fill="#ffffff" font-size="11.5">568.3</text>
<text x="366.0" y="876.8" fill="#ffffff" font-size="11.5">8.5</text>
<text x="366.0" y="830.5" fill="#ffffff" font-size="11.5">5</text>
<text x="592.2" y="882.5" fill="#ffffff" font-size="11.5">561.4</text>
<path d="M519.8 668.0C520.2 676.3 522.2 697.2 522.2 718.0C522.2 738.8 520.8 769.7 519.8 793.0C518.8 816.3 516.6 847.2 516.0 858.0" stroke="#e60a14" fill="none"/>
<path d="M526.0 668.0C526.4 678.4 528.7 707.6 528.5 730.5C528.3 753.4 526.4 782.6 524.8 805.5C523.2 828.4 520.0 857.6 519.0 868.0" stroke="#d9790f" fill="none"/>
<path d="M532.2 668.0C532.5 678.4 534.6 707.6 534.0 730.5C533.4 753.4 530.7 782.6 528.5 805.5C526.3 828.4 522.2 857.6 521.0 868.0" stroke="#d9790f" fill="none"/>
<path d="M538.5 668.0C538.7 676.3 540.4 701.3 539.8 718.0C539.2 734.7 535.6 759.7 534.8 768.0" stroke="#d9790f" fill="none"/>
<path d="M544.8 668.0 L544.0 698.0" stroke="#d9790f" fill="none"/>
<path d="M513.5 668.0C513.9 678.4 515.7 709.7 516.0 730.5C516.3 751.3 515.6 782.6 515.5 793.0" stroke="#d9790f" fill="none"/>
<path d="M683.5 668.0 L666.0 698.0" stroke="#d9790f" fill="none"/>
<path d="M701.0 668.0C696.8 674.2 681.8 695.9 676.0 705.5C670.2 715.1 667.7 722.2 666.0 725.5" stroke="#d9790f" fill="none"/>
<path d="M716.0 668.0C712.2 674.7 698.7 696.3 693.5 708.0C688.3 719.7 686.0 723.0 684.8 738.0C683.5 753.0 687.0 781.3 686.0 798.0C685.0 814.7 681.4 824.0 678.5 838.0C675.6 852.0 670.2 874.7 668.5 882.0" stroke="#d9790f" fill="none"/>
<path d="M731.0 668.0C727.2 675.1 713.7 698.0 708.5 710.5C703.3 723.0 701.0 730.1 699.8 743.0C698.5 755.9 701.4 773.4 701.0 788.0C700.6 802.6 698.7 814.8 697.2 830.5C695.7 846.2 693.0 873.4 692.2 882.0" stroke="#d9790f" fill="none"/>
<path d="M748.5 668.0C744.8 674.7 731.2 695.5 726.0 708.0C720.8 720.5 718.5 732.2 717.2 743.0C716.0 753.8 720.8 762.2 718.5 773.0C716.2 783.8 707.0 796.3 703.5 808.0C700.0 819.7 698.9 830.7 697.2 843.0C695.5 855.3 694.1 875.5 693.5 882.0" stroke="#d9790f" fill="none"/>
<path d="M758.5 668.0C755.2 675.1 742.9 697.2 738.5 710.5C734.1 723.8 733.0 734.2 732.2 748.0C731.4 761.8 733.9 778.0 733.5 793.0C733.1 808.0 731.5 823.2 729.8 838.0C728.1 852.8 724.5 874.7 723.5 882.0" stroke="#e60a14" fill="none"/>
<path d="M771.0 668.0C767.2 675.1 753.5 697.2 748.5 710.5C743.5 723.8 742.2 734.2 741.0 748.0C739.8 761.8 741.8 778.0 741.0 793.0C740.2 808.0 738.5 823.2 736.0 838.0C733.5 852.8 727.7 874.7 726.0 882.0" stroke="#d9790f" fill="none"/>
<path d="M783.5 668.0C779.8 675.1 766.0 697.2 761.0 710.5C756.0 723.8 754.5 734.2 753.5 748.0C752.5 761.8 755.0 777.2 754.8 793.0C754.6 808.8 753.5 828.2 752.2 843.0C750.9 857.8 748.0 875.5 747.2 882.0" stroke="#d9790f" fill="none"/>
<path d="M796.0 668.0C793.1 674.2 783.1 693.0 778.5 705.5C773.9 718.0 770.6 730.9 768.5 743.0C766.4 755.1 767.0 765.5 766.0 778.0C765.0 790.5 762.6 800.7 762.2 818.0C761.8 835.3 763.3 871.3 763.5 882.0" stroke="#d9790f" fill="none"/>
<path d="M806.0 668.0C803.5 673.4 794.8 690.1 791.0 700.5C787.2 710.9 785.2 718.4 783.5 730.5C781.8 742.6 775.6 755.1 781.0 773.0C786.4 790.9 808.5 819.8 816.0 838.0C823.5 856.2 824.3 874.7 826.0 882.0" stroke="#d9790f" fill="none"/>
<path d="M673.5 668.0 L666.0 680.5" stroke="#e60a14" fill="none"/>
<path d="M691.0 668.0 L666.0 713.0" stroke="#d9790f" fill="none"/>
<path d="M723.5 668.0C719.8 674.7 706.2 695.9 701.0 708.0C695.8 720.1 693.7 735.1 692.2 740.5" stroke="#e60a14" fill="none"/>
<path d="M813.5 678.0C810.6 681.8 801.0 691.3 796.0 700.5C791.0 709.7 786.8 721.8 783.5 733.0C780.2 744.2 779.1 758.0 776.0 768.0C772.9 778.0 766.4 783.0 764.8 793.0C763.2 803.0 765.8 817.2 766.5 828.0C767.2 838.8 768.2 849.0 769.0 858.0C769.8 867.0 771.1 878.0 771.5 882.0" stroke="#d9790f" fill="none"/>
<path d="M813.5 678.0C810.6 681.8 801.0 691.3 796.0 700.5C791.0 709.7 786.8 721.8 783.5 733.0C780.2 744.2 779.1 758.0 776.0 768.0C772.9 778.0 766.4 783.0 764.8 793.0C763.2 803.0 765.8 817.2 766.5 828.0C767.2 838.8 768.2 849.0 769.0 858.0C769.8 867.0 771.1 878.0 771.5 882.0" stroke="#d9790f" fill="none" stroke-width="11" stroke-dasharray="1 5"/>
<path d="M809.8 675.5C806.9 679.5 797.3 689.6 792.2 699.2C787.1 708.8 782.5 721.5 779.0 733.0C775.5 744.5 774.6 758.0 771.5 768.0C768.4 778.0 762.0 783.0 760.5 793.0C759.0 803.0 761.9 822.2 762.2 828.0" stroke="#d9790f" fill="none"/>
<path d="M788.5 710.5C786.8 717.2 781.0 737.6 778.5 750.5C776.0 763.4 773.9 775.1 773.5 788.0C773.1 800.9 775.4 812.3 776.0 828.0C776.6 843.7 777.0 873.0 777.2 882.0" stroke="#e60a14" fill="none"/>
<path d="M781.0 778.0C780.2 784.7 776.6 800.7 776.0 818.0C775.4 835.3 777.0 871.3 777.2 882.0" stroke="#8a5048" fill="none" stroke-dasharray="6 4"/>
<path d="M796.0 670.5C788.9 675.5 767.7 690.5 753.5 700.5C739.3 710.5 725.6 720.1 711.0 730.5C696.4 740.9 673.5 757.6 666.0 763.0" stroke="#00e000" fill="none" stroke-dasharray="8 3 1 3"/>
<path d="M699.8 749.2 L713.5 773.0 L698.5 798.0 L681.0 828.0 L666.0 868.0" stroke="#0a8a0a" fill="none"/>
<path d="M699.8 749.2 L713.5 773.0 L698.5 798.0 L681.0 828.0 L666.0 868.0" stroke="#0a8a0a" fill="none" stroke-width="5" stroke-dasharray="1 30"/>
<path d="M846.0 668.0C844.3 672.2 840.2 681.3 836.0 693.0C831.8 704.7 825.0 723.8 821.0 738.0C817.0 752.2 813.0 763.8 812.2 778.0C811.4 792.2 814.5 809.7 816.0 823.0C817.5 836.3 819.3 848.2 821.0 858.0C822.7 867.8 825.2 878.0 826.0 882.0" stroke="#0a8a0a" fill="none"/>
<path d="M846.0 668.0C844.3 672.2 840.2 681.3 836.0 693.0C831.8 704.7 825.0 723.8 821.0 738.0C817.0 752.2 813.0 763.8 812.2 778.0C811.4 792.2 814.5 809.7 816.0 823.0C817.5 836.3 819.3 848.2 821.0 858.0C822.7 867.8 825.2 878.0 826.0 882.0" stroke="#0a8a0a" fill="none" stroke-width="5" stroke-dasharray="1 30"/>
<path d="M844.8 685.5C843.3 690.9 839.1 706.8 836.0 718.0C832.9 729.2 828.7 740.5 826.0 753.0C823.3 765.5 820.8 779.7 819.8 793.0C818.8 806.3 818.8 821.3 819.8 833.0C820.8 844.7 823.7 854.8 826.0 863.0C828.3 871.2 832.2 878.8 833.5 882.0" stroke="#ffffff" fill="none" stroke-dasharray="9 4"/>
<path d="M841.0 668.0C842.2 671.3 848.5 679.7 848.5 688.0C848.5 696.3 843.9 706.3 841.0 718.0C838.1 729.7 833.5 744.7 831.0 758.0C828.5 771.3 826.4 785.5 826.0 798.0C825.6 810.5 826.4 822.2 828.5 833.0C830.6 843.8 835.6 854.8 838.5 863.0C841.4 871.2 844.8 878.8 846.0 882.0" stroke="#00e000" fill="none" stroke-dasharray="8 3 1 3"/>
<path d="M826.0 683.0C825.0 688.0 820.6 703.8 819.8 713.0C819.0 722.2 820.8 733.8 821.0 738.0" stroke="#d9790f" fill="none"/>
<path d="M861.0 668.0C860.2 674.2 858.5 690.9 856.0 705.5C853.5 720.1 848.5 741.8 846.0 755.5C843.5 769.2 841.4 776.8 841.0 788.0C840.6 799.2 841.0 811.3 843.5 823.0C846.0 834.7 851.4 848.2 856.0 858.0C860.6 867.8 868.5 878.0 871.0 882.0" stroke="#e60a14" fill="none"/>
<path d="M866.0 668.0C865.6 674.2 865.2 690.9 863.5 705.5C861.8 720.1 857.9 741.8 856.0 755.5C854.1 769.2 852.2 776.8 852.2 788.0C852.2 799.2 853.3 811.3 856.0 823.0C858.7 834.7 863.5 848.2 868.5 858.0C873.5 867.8 883.1 878.0 886.0 882.0" stroke="#d9790f" fill="none"/>
<path d="M871.0 668.0C870.8 674.2 868.5 693.0 869.8 705.5C871.0 718.0 874.5 730.9 878.5 743.0C882.5 755.1 889.3 767.2 893.5 778.0C897.7 788.8 901.4 796.3 903.5 808.0C905.6 819.7 903.9 838.4 906.0 848.0C908.1 857.6 912.7 862.2 916.0 865.5C919.3 868.8 922.9 868.4 926.0 868.0C929.1 867.6 933.3 863.8 934.8 863.0" stroke="#d9790f" fill="none"/>
<path d="M851.0 668.0C849.3 676.3 844.3 702.2 841.0 718.0C837.7 733.8 833.3 749.7 831.0 763.0C828.7 776.3 827.4 785.5 827.2 798.0C827.0 810.5 827.5 826.3 829.8 838.0C832.1 849.7 837.9 860.7 841.0 868.0C844.1 875.3 847.2 879.7 848.5 882.0" stroke="#d9790f" fill="none"/>
<path d="M881.0 668.0C880.4 672.2 876.8 682.6 877.2 693.0C877.6 703.4 880.0 716.3 883.5 730.5C887.0 744.7 893.5 763.4 898.5 778.0C903.5 792.6 908.9 807.2 913.5 818.0C918.1 828.8 922.5 835.5 926.0 843.0C929.5 850.5 933.1 856.5 934.8 863.0C936.5 869.5 935.8 878.8 936.0 882.0" stroke="#1010ff" fill="none"/>
<path d="M916.0 668.0C914.5 674.2 908.0 693.0 907.2 705.5C906.4 718.0 908.7 731.8 911.0 743.0C913.3 754.2 916.0 762.2 921.0 773.0C926.0 783.8 935.2 798.0 941.0 808.0C946.8 818.0 951.8 828.0 956.0 833.0C960.2 838.0 964.3 837.2 966.0 838.0" stroke="#1010ff" fill="none"/>
<path d="M923.5 668.0C922.2 672.2 918.1 685.1 916.0 693.0C913.9 700.9 911.8 711.8 911.0 715.5" stroke="#0a8a0a" fill="none"/>
<path d="M881.0 668.0C880.2 673.0 875.2 688.4 876.0 698.0C876.8 707.6 881.4 714.7 886.0 725.5C890.6 736.3 898.1 750.1 903.5 763.0C908.9 775.9 914.8 789.7 918.5 803.0C922.2 816.3 924.3 829.8 926.0 843.0C927.7 856.2 928.1 875.5 928.5 882.0" stroke="#00e000" fill="none" stroke-dasharray="8 3 1 3"/>
<path d="M916.0 695.5C914.8 699.2 908.9 709.2 908.5 718.0C908.1 726.8 911.4 738.8 913.5 748.0C915.6 757.2 916.8 763.8 921.0 773.0C925.2 782.2 932.7 793.8 938.5 803.0C944.3 812.2 951.4 822.6 956.0 828.0C960.6 833.4 964.3 834.2 966.0 835.5" stroke="#d9790f" fill="none" stroke-width="7" stroke-dasharray="1 2.5"/>
<path d="M916.0 695.5C914.8 699.2 909.1 709.2 908.5 718.0C907.9 726.8 910.3 738.8 912.2 748.0C914.1 757.2 915.6 763.6 919.8 773.0C924.0 782.4 931.4 794.8 937.2 804.2C943.0 813.6 950.0 823.6 954.8 829.2C959.6 834.8 964.1 836.5 966.0 838.0" stroke="#d9790f" fill="none"/>
<path d="M913.5 715.5C914.3 720.1 916.8 734.2 918.5 743.0C920.2 751.8 919.8 759.7 923.5 768.0C927.2 776.3 935.2 784.7 941.0 793.0C946.8 801.3 954.3 812.6 958.5 818.0C962.7 823.4 964.8 824.2 966.0 825.5" stroke="#e60a14" fill="none"/>
<ellipse cx="883.500" cy="845" rx="5.500" ry="3.500" stroke="#00d000" fill="none"/><path d="M883.500 848v9" stroke="#00d000"/>
<path d="M738 874l3 3 3-3 3 3 3-3 3 3 3-3 3 3 3-2" stroke="#00d000" fill="none"/>
<text x="816.8" y="704.2" fill="#ffffff" font-size="11.5">546.5</text>
<text x="781.5" y="735.5" fill="#ffffff" font-size="11.5">548.4</text>
<text x="939.8" y="781.0" fill="#ffffff" font-size="11.5">545.6</text>
<text x="693.5" y="811.0" fill="#ffffff" font-size="11.5">555.7</text>
<text x="796.0" y="806.0" fill="#ffffff" font-size="11.5">546.3</text>
<text x="767.2" y="836.2" fill="#ffffff" font-size="11.5">549.5</text>
<text x="666.5" y="857.5" fill="#ffffff" font-size="11.5">557.1</text>
<text x="719.8" y="855.0" fill="#ffffff" font-size="11.5">553.1</text>
<path d="M1118.5 668.0 L1017.2 882.0" stroke="#e60a14" fill="none"/>
<path d="M1212.2 668.0 L1108.5 882.0" stroke="#e60a14" fill="none"/>
<path d="M1138.5 668.0 L1036.0 882.0" stroke="#ffffff" fill="none"/>
<path d="M1196.0 668.0 L1094.8 882.0" stroke="#ffffff" fill="none"/>
<path d="M1154.8 670.5 L1053.5 882.0" stroke="#ffffff" fill="none" stroke-dasharray="14 18"/>
<path d="M1178.5 668.0 L1076.0 882.0" stroke="#ffffff" fill="none" stroke-dasharray="14 18"/>
<path d="M1126.0 668.0 L1026.0 882.0" stroke="#8a5048" fill="none" stroke-dasharray="7 22"/>
<path d="M1206.0 668.0 L1101.0 882.0" stroke="#8a5048" fill="none" stroke-dasharray="7 22"/>
<path d="M1142.8 798.0h4M1144.8 798.0L1144.8 765.5A8.149999999999977 8.149999999999977 0 0 0 1128.5 770.5" stroke="#ffffff" fill="none"/><circle cx="1128.5" cy="770.5" r="1.8" stroke="#ffffff" fill="none"/>
<path d="M1031.5 856.0h4M1033.5 856.0L1033.5 824.2A7.850000000000023 7.850000000000023 0 0 1 1049.2 828.0" stroke="#ffffff" fill="none"/><circle cx="1049.2" cy="828.0" r="1.8" stroke="#ffffff" fill="none"/>
<path d="M1106.0 668.0 L1117.2 680.5" stroke="#ffffff" fill="none"/>
<path d="M1114.0 680.5 L1120.5 680.5" stroke="#ffffff" fill="none"/>
<path d="M1197.2 668.0 L1197.2 686.8" stroke="#ffffff" fill="none"/>
<path d="M1194.0 686.8 L1200.5 686.8" stroke="#ffffff" fill="none"/>
<path d="M1096.0 670.5 L1106.0 691.8" stroke="#ffffff" fill="none"/>
<path d="M1076.0 882.0C1076.8 881.2 1079.3 878.2 1081.0 877.5C1082.7 876.8 1084.5 876.8 1086.0 877.5C1087.5 878.2 1089.2 881.2 1089.8 882.0" stroke="#ffffff" fill="none"/>
<path d="M1031.0 668.0C1028.5 672.6 1021.4 686.3 1016.0 695.5C1010.6 704.7 1003.5 713.8 998.5 723.0C993.5 732.2 989.1 740.9 986.0 750.5C982.9 760.1 980.0 770.1 979.8 780.5C979.6 790.9 982.1 803.4 984.8 813.0C987.5 822.6 991.6 830.9 996.0 838.0C1000.4 845.1 1006.2 850.5 1011.0 855.5C1015.8 860.5 1022.5 865.9 1024.8 868.0" stroke="#d9790f" fill="none"/>
<path d="M1066.0 668.0C1067.7 672.2 1073.1 684.7 1076.0 693.0C1078.9 701.3 1082.7 710.5 1083.5 718.0C1084.3 725.5 1083.1 731.8 1081.0 738.0C1078.9 744.2 1073.9 750.5 1071.0 755.5C1068.1 760.5 1064.3 764.5 1063.5 768.0C1062.7 771.5 1065.6 775.3 1066.0 776.8" stroke="#d9790f" fill="none"/>
<path d="M1091.0 668.0C1092.7 670.5 1099.3 677.6 1101.0 683.0C1102.7 688.4 1101.0 697.6 1101.0 700.5" stroke="#d9790f" fill="none"/>
<path d="M1172.2 748.0C1173.7 749.7 1178.7 753.8 1181.0 758.0C1183.3 762.2 1186.0 766.3 1186.0 773.0C1186.0 779.7 1183.1 788.8 1181.0 798.0C1178.9 807.2 1175.4 818.0 1173.5 828.0C1171.6 838.0 1170.0 849.0 1169.8 858.0C1169.6 867.0 1171.8 878.0 1172.2 882.0" stroke="#d9790f" fill="none"/>
<path d="M1139.8 815.5C1139.6 818.4 1140.4 827.6 1138.5 833.0C1136.6 838.4 1130.6 842.2 1128.5 848.0C1126.4 853.8 1125.8 862.3 1126.0 868.0C1126.2 873.7 1129.2 879.7 1129.8 882.0" stroke="#d9790f" fill="none"/>
<path d="M1206.0 678.0C1209.3 680.1 1219.3 686.8 1226.0 690.5C1232.7 694.2 1241.8 696.3 1246.0 700.5C1250.2 704.7 1247.7 712.0 1251.0 715.5C1254.3 719.0 1263.5 720.8 1266.0 721.8" stroke="#d9790f" fill="none"/>
<path d="M966.0 833.0C969.3 835.5 979.3 843.4 986.0 848.0C992.7 852.6 999.5 857.2 1006.0 860.5C1012.5 863.8 1021.7 866.8 1024.8 868.0" stroke="#d9790f" fill="none"/>
<path d="M966.0 833.0C969.3 835.5 979.3 843.4 986.0 848.0C992.7 852.6 999.5 857.2 1006.0 860.5C1012.5 863.8 1021.7 866.8 1024.8 868.0" stroke="#d9790f" fill="none" stroke-width="9" stroke-dasharray="1 5"/>
<path d="M966.0 838.0C969.3 838.8 979.3 840.0 986.0 843.0C992.7 846.0 999.3 852.2 1006.0 856.0C1012.7 859.8 1022.7 863.9 1026.0 865.5" stroke="#d9790f" fill="none"/>
<path d="M966.0 825.5C970.2 830.9 982.2 850.3 991.0 858.0C999.8 865.7 1013.9 869.5 1018.5 871.8" stroke="#e60a14" fill="none"/>
<path d="M966.0 838.0C970.2 842.0 982.2 855.3 991.0 861.8C999.8 868.3 1013.9 874.3 1018.5 876.8" stroke="#1010ff" fill="none"/>
<path d="M1206.0 678.0C1210.2 679.2 1223.9 682.2 1231.0 685.5C1238.1 688.8 1244.5 693.4 1248.5 698.0C1252.5 702.6 1254.8 708.0 1254.8 713.0C1254.8 718.0 1251.6 724.5 1248.5 728.0C1245.4 731.5 1241.4 733.8 1236.0 734.2C1230.6 734.6 1224.3 733.4 1216.0 730.5C1207.7 727.6 1191.0 719.1 1186.0 716.8" stroke="#ffffff" fill="none" stroke-dasharray="8 5"/>
<path d="M1172.2 748.0C1176.2 748.6 1187.9 749.3 1196.0 751.8C1204.1 754.3 1214.5 758.6 1221.0 763.0C1227.5 767.4 1233.1 770.5 1234.8 778.0C1236.5 785.5 1233.3 797.2 1231.0 808.0C1228.7 818.8 1224.1 830.7 1221.0 843.0C1217.9 855.3 1213.7 875.5 1212.2 882.0" stroke="#ffffff" fill="none" stroke-dasharray="8 5"/>
<path d="M1266.0 783.0C1263.9 783.4 1256.2 783.0 1253.5 785.5C1250.8 788.0 1251.0 790.9 1249.8 798.0C1248.5 805.1 1247.9 818.0 1246.0 828.0C1244.1 838.0 1241.0 849.0 1238.5 858.0C1236.0 867.0 1232.2 878.0 1231.0 882.0" stroke="#ffffff" fill="none" stroke-dasharray="8 5"/>
<path d="M1256.0 668.0 L1266.0 670.5" stroke="#00d4e0" fill="none"/>
<path d="M1241.0 668.0 L1266.0 675.5" stroke="#ffffff" fill="none" stroke-dasharray="8 5"/>
<path d="M1266.0 853.0 L1257.2 882.0" stroke="#d9790f" fill="none" stroke-width="7" stroke-dasharray="1 2"/>
<path d="M1266.0 868.0 L1262.2 882.0" stroke="#00d4e0" fill="none"/>
<text x="1242.2" y="690.0" fill="#ffffff" font-size="11.5">549.</text>
<text x="1010.5" y="753.0" fill="#ffffff" font-size="11.5">546.4</text>
<text x="1232.2" y="759.2" fill="#ffffff" font-size="11.5">548.6</text>
<text x="1128.5" y="845.0" fill="#ffffff" font-size="11.5">547.3</text>
<text x="1051.0" y="855.5" fill="#ffffff" font-size="11.5">554.8</text>
<text x="1204.8" y="861.8" fill="#ffffff" font-size="11.5">548.7</text>
<path d="M1369.8 668.0 L1271.0 882.0" stroke="#e60a14" fill="none"/>
<path d="M1446.0 668.0 L1343.5 882.0" stroke="#e60a14" fill="none"/>
<path d="M1379.8 668.0 L1279.8 882.0" stroke="#ffffff" fill="none"/>
<path d="M1426.0 668.0 L1319.8 882.0" stroke="#ffffff" fill="none"/>
<path d="M1407.2 668.0 L1381.0 709.2" stroke="#ffffff" fill="none"/>
<path d="M1372.2 728.0 L1351.0 773.0" stroke="#ffffff" fill="none"/>
<path d="M1342.2 790.5 L1321.0 836.8" stroke="#ffffff" fill="none"/>
<path d="M1376.0 668.0 L1276.0 882.0" stroke="#8a5048" fill="none" stroke-dasharray="7 22"/>
<path d="M1436.0 670.5 L1337.2 882.0" stroke="#8a5048" fill="none" stroke-dasharray="7 22"/>
<path d="M1339.0 735.5h4M1341.0 735.5L1341.0 701.8A7.75 7.75 0 0 1 1356.5 707.5" stroke="#ffffff" fill="none"/><circle cx="1356.5" cy="707.5" r="1.8" stroke="#ffffff" fill="none"/>
<path d="M1287.0 846.0h4M1289.0 846.0L1289.0 813.0A7.25 7.25 0 0 1 1303.5 818.5" stroke="#ffffff" fill="none"/><circle cx="1303.5" cy="818.5" r="1.8" stroke="#ffffff" fill="none"/>
<path d="M1266.0 670.5C1271.0 672.2 1286.4 678.3 1296.0 680.5C1305.6 682.7 1316.8 683.9 1323.5 683.5C1330.2 683.1 1332.2 680.6 1336.0 678.0C1339.8 675.4 1344.3 669.7 1346.0 668.0" stroke="#00d4e0" fill="none"/>
<path d="M1326.0 668.0C1326.2 669.7 1327.5 675.4 1327.2 678.0C1326.9 680.6 1324.5 682.6 1324.0 683.5" stroke="#00d4e0" fill="none"/>
<path d="M1324.0 683.5C1322.2 690.1 1317.3 710.2 1313.5 723.0C1309.7 735.8 1305.2 748.0 1301.0 760.5C1296.8 773.0 1292.7 784.2 1288.5 798.0C1284.3 811.8 1279.8 830.5 1276.0 843.0C1272.2 855.5 1267.7 868.0 1266.0 873.0" stroke="#00d4e0" fill="none"/>
<circle cx="1324" cy="683.500" r="2" fill="#fff"/>
<path d="M1324.0 685.5C1322.2 692.0 1317.3 711.6 1313.5 724.2C1309.7 736.8 1303.1 754.9 1301.0 761.0" stroke="#d9790f" fill="none" stroke-width="5" opacity="0.75"/>
<path d="M1324.0 685.5C1322.2 692.0 1317.3 711.6 1313.5 724.2C1309.7 736.8 1303.1 754.9 1301.0 761.0" stroke="#d9790f" fill="none"/>
<path d="M1324.0 685.5C1322.2 692.0 1317.3 711.6 1313.5 724.2C1309.7 736.8 1303.1 754.9 1301.0 761.0" stroke="#d9790f" fill="none" stroke-width="9" stroke-dasharray="1 5"/>
<path d="M1289.8 795.5C1287.7 803.4 1281.0 829.2 1277.2 843.0C1273.4 856.8 1268.9 872.2 1267.2 878.0" stroke="#d9790f" fill="none" stroke-width="5" opacity="0.75"/>
<path d="M1289.8 795.5C1287.7 803.4 1281.0 829.2 1277.2 843.0C1273.4 856.8 1268.9 872.2 1267.2 878.0" stroke="#d9790f" fill="none"/>
<path d="M1289.8 795.5C1287.7 803.4 1281.0 829.2 1277.2 843.0C1273.4 856.8 1268.9 872.2 1267.2 878.0" stroke="#d9790f" fill="none" stroke-width="9" stroke-dasharray="1 5"/>
<path d="M1266.0 721.8C1268.5 724.5 1276.0 734.9 1281.0 738.0C1286.0 741.1 1291.8 741.8 1296.0 740.5C1300.2 739.2 1304.3 732.2 1306.0 730.5" stroke="#d9790f" fill="none"/>
<path d="M1311.0 755.5 L1324.8 760.5" stroke="#d9790f" fill="none"/>
<path d="M1266.0 675.5C1267.7 678.8 1274.1 689.2 1276.0 695.5C1277.9 701.8 1278.2 706.8 1277.2 713.0C1276.2 719.2 1271.2 727.2 1269.8 733.0C1268.3 738.8 1266.6 743.4 1268.5 748.0C1270.4 752.6 1276.0 757.8 1281.0 760.5C1286.0 763.2 1292.0 762.5 1298.5 764.2C1305.0 765.9 1316.2 769.5 1319.8 770.5" stroke="#ffffff" fill="none" stroke-dasharray="8 5"/>
<path d="M1266.0 783.5C1269.8 784.2 1280.8 786.8 1288.5 788.0C1296.2 789.2 1308.2 790.5 1312.2 791.0" stroke="#ffffff" fill="none" stroke-dasharray="8 5"/>
<path d="M1298.5 764.2 L1289.8 791.8" stroke="#ffffff" fill="none" stroke-dasharray="8 5"/>
<path d="M1304.8 765.5 L1296.0 791.8" stroke="#ffffff" fill="none" stroke-dasharray="8 5"/>
<path d="M1297.2 761.0 L1304.8 761.0 L1304.8 766.0" stroke="#ffffff" fill="none"/>
<path d="M1286.0 793.0 L1293.5 794.2" stroke="#e60a14" fill="none"/>
<path d="M1438.5 679.2C1440.6 679.8 1446.8 683.2 1451.0 683.0C1455.2 682.8 1459.3 680.5 1463.5 678.0C1467.7 675.5 1473.9 669.7 1476.0 668.0" stroke="#e60a14" fill="none"/>
<path d="M1478.5 670.5C1476.4 673.4 1470.2 680.9 1466.0 688.0C1461.8 695.1 1457.7 703.8 1453.5 713.0C1449.3 722.2 1444.8 733.8 1441.0 743.0C1437.2 752.2 1433.5 762.6 1431.0 768.0C1428.5 773.4 1426.8 774.2 1426.0 775.5" stroke="#d9790f" fill="none"/>
<path d="M1478.5 670.5C1476.4 673.4 1470.2 680.9 1466.0 688.0C1461.8 695.1 1457.7 703.8 1453.5 713.0C1449.3 722.2 1444.8 733.8 1441.0 743.0C1437.2 752.2 1433.5 762.6 1431.0 768.0C1428.5 773.4 1426.8 774.2 1426.0 775.5" stroke="#d9790f" fill="none" stroke-width="10" stroke-dasharray="1 5"/>
<path d="M1483.5 673.0C1481.4 675.9 1475.2 683.4 1471.0 690.5C1466.8 697.6 1462.7 706.3 1458.5 715.5C1454.3 724.7 1449.8 736.8 1446.0 745.5C1442.2 754.2 1437.7 764.2 1436.0 768.0" stroke="#d9790f" fill="none"/>
<path d="M1391.0 779.2C1394.3 779.2 1405.2 780.2 1411.0 779.2C1416.8 778.2 1423.5 774.0 1426.0 773.0" stroke="#d9790f" fill="none"/>
<path d="M1486.0 675.5C1487.7 674.5 1492.7 669.2 1496.0 669.2C1499.3 669.2 1503.3 672.6 1506.0 675.5C1508.7 678.4 1512.2 682.6 1512.2 686.8C1512.2 691.0 1507.9 696.5 1506.0 700.5C1504.1 704.5 1500.2 707.6 1501.0 710.5C1501.8 713.4 1506.0 716.8 1511.0 718.0C1516.0 719.2 1524.2 719.5 1531.0 718.0C1537.8 716.5 1548.5 710.7 1552.0 709.2" stroke="#d9790f" fill="none"/>
<path d="M1496.0 670.5C1493.1 675.1 1485.2 686.8 1478.5 698.0C1471.8 709.2 1462.2 726.8 1456.0 738.0C1449.8 749.2 1446.0 758.4 1441.0 765.5C1436.0 772.6 1431.8 777.0 1426.0 780.5C1420.2 784.0 1412.0 786.2 1406.0 786.8C1400.0 787.4 1392.5 784.6 1389.8 784.2" stroke="#ffffff" fill="none" stroke-dasharray="8 5"/>
<path d="M1526.0 668.0 L1501.0 700.5 L1478.5 738.0 L1463.5 760.5" stroke="#ffffff" fill="none" stroke-dasharray="8 5"/>
<path d="M1536.0 668.0 L1516.0 703.0 L1486.0 743.0 L1466.0 758.0" stroke="#ffffff" fill="none" stroke-dasharray="8 5"/>
<path d="M1552.0 683.0C1548.1 689.2 1537.8 707.2 1528.5 720.5C1519.2 733.8 1505.6 752.2 1496.0 763.0C1486.4 773.8 1480.2 779.2 1471.0 785.5C1461.8 791.8 1451.8 796.1 1441.0 800.5C1430.2 804.9 1416.4 810.5 1406.0 811.8C1395.6 813.1 1383.1 809.0 1378.5 808.5" stroke="#ffffff" fill="none" stroke-dasharray="8 5"/>
<path d="M1552.0 740.5C1547.7 745.9 1536.2 761.8 1526.0 773.0C1515.8 784.2 1502.7 796.8 1491.0 808.0C1479.3 819.2 1467.7 830.5 1456.0 840.5C1444.3 850.5 1430.6 861.1 1421.0 868.0C1411.4 874.9 1402.2 879.7 1398.5 882.0" stroke="#d9790f" fill="none"/>
<path d="M1552.0 740.5C1547.7 745.9 1536.2 761.8 1526.0 773.0C1515.8 784.2 1502.7 796.8 1491.0 808.0C1479.3 819.2 1467.7 830.5 1456.0 840.5C1444.3 850.5 1430.6 861.1 1421.0 868.0C1411.4 874.9 1402.2 879.7 1398.5 882.0" stroke="#d9790f" fill="none" stroke-width="10" stroke-dasharray="1 5"/>
<path d="M1552.0 735.5C1547.2 741.1 1534.1 757.8 1523.5 769.2C1512.9 780.7 1500.2 792.9 1488.5 804.2C1476.8 815.5 1465.2 826.8 1453.5 836.8C1441.8 846.8 1428.3 856.9 1418.5 864.2C1408.7 871.5 1398.8 877.8 1394.8 880.5" stroke="#d9790f" fill="none"/>
<path d="M1552.0 746.8C1548.1 751.8 1538.2 766.0 1528.5 776.8C1518.8 787.6 1505.2 800.6 1493.5 811.8C1481.8 823.0 1470.2 834.2 1458.5 844.2C1446.8 854.2 1432.2 865.5 1423.5 871.8C1414.8 878.1 1408.9 880.3 1406.0 882.0" stroke="#d9790f" fill="none"/>
<path d="M1552.0 770.5C1546.8 775.1 1531.2 788.4 1521.0 798.0C1510.8 807.6 1501.0 818.0 1491.0 828.0C1481.0 838.0 1470.8 849.0 1461.0 858.0C1451.2 867.0 1437.0 878.0 1432.2 882.0" stroke="#1010ff" fill="none"/>
<path d="M1552.0 805.5C1549.3 808.0 1541.2 814.2 1536.0 820.5C1530.8 826.8 1526.0 835.5 1521.0 843.0C1516.0 850.5 1511.0 859.0 1506.0 865.5C1501.0 872.0 1493.5 879.2 1491.0 882.0" stroke="#1010ff" fill="none"/>
<path d="M1552.0 833.0C1548.1 837.2 1536.2 850.5 1528.5 858.0C1520.8 865.5 1510.8 874.0 1506.0 878.0C1501.2 882.0 1500.8 881.3 1499.8 882.0" stroke="#d9790f" fill="none"/>
<path d="M1552.0 833.0C1548.1 837.2 1536.2 850.5 1528.5 858.0C1520.8 865.5 1510.8 874.0 1506.0 878.0C1501.2 882.0 1500.8 881.3 1499.8 882.0" stroke="#d9790f" fill="none" stroke-width="9" stroke-dasharray="1 5"/>
<path d="M1552.0 829.2C1547.7 833.6 1535.3 846.7 1526.0 855.5C1516.7 864.3 1501.0 877.6 1496.0 882.0" stroke="#d9790f" fill="none"/>
<text x="1512.2" y="691.0" fill="#ffffff" font-size="11.5">549.5</text>
<text x="1457.2" y="710.5" fill="#ffffff" font-size="11.5">548.9</text>
<text x="1426.0" y="770.5" fill="#ffffff" font-size="11.5">548.7</text>
<text x="1438.0" y="811.0" fill="#ffffff" font-size="11.5">548.6</text>
<text x="1354.8" y="863.5" fill="#ffffff" font-size="11.5">548.6</text>
<text x="1522.2" y="872.2" fill="#ffffff" font-size="11.5">548.7</text>
<text x="1263.0" y="690.5" fill="#ffffff" font-size="11.5">.2</text>
</svg>
</div>
<div style="left:366px;top:882px;width:1186px;height:16px;background:#f0f0f0"></div>
<div style="left:30px;top:898px;width:1550px;height:2px;background:#a0a0a0"></div>
<svg style="left:366px;top:882px" width="200" height="16" viewBox="366 882 200 16"><path d="M430.500 882l7.500 15.500h39.500l6.500-15.500z" fill="#fff"/><g fill="#000"><path d="M370.500 885.500h1.500v8h-1.500zM378 885.500v8l-5-4zM393.500 885.500v8l-5-4zM402.500 885.500v8l5-4zM418 885.500v8l5-4zM424 885.500h1.500v8H424z"/></g><g stroke="#a0a0a0" fill="none"><path d="M381.500 883v14M397.500 883v14M413.500 883v14M429.500 883v14M367 896.500h62"/></g><g stroke="#fff" fill="none"><path d="M366.500 883v14M382.500 883v14M398.500 883v14M414.500 883v14"/></g><path d="M430.500 882l7.500 15.500h39.500l6.500-15.500M480.500 890l3.500 7.500h52l7.500-15.500" stroke="#000" fill="none"/></svg>
<div style="left:441.500px;top:883px;font-size:12px;font-weight:bold;line-height:14px;letter-spacing:-0.434px" id="tabm">Model</div>
<div style="left:492.500px;top:883px;font-size:12px;line-height:14px;letter-spacing:-0.929px" id="tabl">Layout1</div>
<div style="left:1552px;top:148px;width:28px;height:690px;border-radius:0 0 3px 3px;background:linear-gradient(90deg,#9aa3af,#b3bbc6 40%,#a9b1bc)"></div>
<svg style="left:0;top:0" width="1580" height="900" viewBox="0 0 1580 900"><path d="M1560 153.500h12" stroke="#fff" stroke-dasharray="2 1" stroke-width="2"/><path d="M1560 152.500h12" stroke="#444" stroke-dasharray="2 1" stroke-width="1"/>
<rect x="1559.500" y="161.500" width="5" height="4" fill="#fff" stroke="#bbb"/><rect x="1567.500" y="169.500" width="6" height="5" fill="#fff" stroke="#2b3548" stroke-width="1.200"/><path d="M1567 162.500h3.500v3.500" stroke="#d22" fill="none" stroke-width="1.200"/>
<g fill="#fff" stroke="#2b3548" stroke-width="1.200"><rect x="1559.500" y="182.500" width="6" height="5"/><rect x="1564.500" y="188.500" width="5" height="4"/><rect x="1568.500" y="192.500" width="6" height="5"/></g><path d="M1568 183.500h3.500v3.500" stroke="#d22" fill="none" stroke-width="1.200"/>
<path d="M1559.500 218.500v-6h5v-4c0-4 8-4 8 0v6h-5v4z" fill="#c8ced8" stroke="#2b3548" stroke-width="1.300"/>
<rect x="1559.500" y="227.500" width="12" height="12" fill="none" stroke="#9aa" stroke-dasharray="2 1.500"/><rect x="1560.500" y="234.500" width="6" height="6" fill="#fff" stroke="#2b3548" stroke-width="1.300"/>
<path d="M1557 249.5h18" stroke="#eef1f5"/><path d="M1557 248.5h18" stroke="#7a828d"/>
<path d="M1560.500 259a6.500 6.500 0 1 0 11.500 0" fill="none" stroke="#1d5fa8" stroke-width="2"/><path d="M1564 263h5M1566.500 260.500v5" stroke="#e02020" stroke-width="1.100"/>
<path d="M1559.500 285c0 7 14 7 14 0" fill="none" stroke="#1d5fa8" stroke-width="2.200"/><path d="M1566.500 277v16" stroke="#e02020" stroke-dasharray="3 1.500"/><path d="M1571 283l3 3 2-4z" fill="#1d5fa8"/>
<path d="M1557 301.5h18" stroke="#eef1f5"/><path d="M1557 300.5h18" stroke="#7a828d"/>
<path d="M1564 310l-4 12h4zM1569 310l4 12h-4z" fill="#fff" stroke="#2b3548" stroke-width="1.100"/><path d="M1566.500 308v16" stroke="#e02020" stroke-dasharray="3 1.200"/>
<path d="M1564 332l-5 12h5zM1569 332l5 12h-5z" fill="#dfeee0" stroke="#2a7a3a" stroke-width="1.100"/><path d="M1566.500 330v16" stroke="#e02020" stroke-dasharray="3 1.200"/><path d="M1560 336l4 8" stroke="#e02020" stroke-width="1.500"/>
<path d="M1557 353.5h18" stroke="#eef1f5"/><path d="M1557 352.5h18" stroke="#7a828d"/>
<g fill="#1668d0"><rect x="1560" y="362" width="3" height="3"/><rect x="1570" y="362" width="3" height="3"/><rect x="1560" y="372" width="3" height="3"/><rect x="1570" y="372" width="3" height="3"/></g><path d="M1564 363.500h5M1564 373.500h5M1561.500 366v5M1571.500 366v5" stroke="#1668d0" stroke-dasharray="1.500 1"/>
<g fill="#1668d0"><rect x="1559" y="383" width="3" height="3"/><rect x="1564.500" y="383" width="3" height="3" fill="#778"/><rect x="1570" y="383" width="3" height="3"/><rect x="1559" y="388.500" width="3" height="3" fill="#778"/><rect x="1564.500" y="388.500" width="3" height="3"/><rect x="1570" y="388.500" width="3" height="3" fill="#778"/><rect x="1559" y="394" width="3" height="3"/><rect x="1564.500" y="394" width="3" height="3" fill="#778"/><rect x="1570" y="394" width="3" height="3"/></g>
<path d="M1557 405.5h18" stroke="#eef1f5"/><path d="M1557 404.5h18" stroke="#7a828d"/>
<path d="M1560 414h13v10h-13z" fill="none" stroke="#1e8a3c" stroke-width="1.800"/><path d="M1562 414l3-2 2 2" fill="none" stroke="#555"/>
<path d="M1564 437h-4v9h13v-9h-4" fill="none" stroke="#1e8a3c" stroke-width="1.800"/>
<path d="M1560 459h9v9h-9z" fill="none" stroke="#1e8a3c" stroke-width="1.800"/><path d="M1570.500 455v17" stroke="#444" stroke-width="1.200"/>
<path d="M1557 479.5h18" stroke="#eef1f5"/><path d="M1557 478.5h18" stroke="#7a828d"/>
<path d="M1559 497l4-10h10v10l-4 3h-10z M1559 497h10l4-10 M1569 497v3" fill="none" stroke="#8a9098" stroke-width="1"/><path d="M1560 498l10 0 3-3-10 0z" fill="#fff" stroke="#2b3548"/>
<path d="M1557 509.5h18" stroke="#eef1f5"/><path d="M1557 508.5h18" stroke="#7a828d"/>
<rect x="1560.500" y="524.500" width="3" height="6" fill="#fff" stroke="#2b3548"/><rect x="1568.500" y="516.500" width="4" height="14" fill="#fff" stroke="#2b3548"/>
<path d="M1557 539.5h18" stroke="#eef1f5"/><path d="M1557 538.5h18" stroke="#7a828d"/>
<path d="M1560 560l6-6 7 7" fill="none" stroke="#2b3548" stroke-width="1.600" stroke-dasharray="4 1.500"/><path d="M1562 548l8 0 3 3" fill="none" stroke="#2b3548" stroke-width="1.600"/>
<path d="M1557 569.5h18" stroke="#eef1f5"/><path d="M1557 568.5h18" stroke="#7a828d"/>
<path d="M1559 578v5M1566.500 578v5M1574 578v5" stroke="#2b3548"/><path d="M1559 580.500h15" stroke="#2b3548" stroke-dasharray="2 1.500"/><rect x="1559" y="587" width="15" height="4" fill="#f0b838"/>
<path d="M1557 599.5h18" stroke="#eef1f5"/><path d="M1557 598.5h18" stroke="#7a828d"/>
<path d="M1559.500 621.500c0-9 5-14 14-14.500v14.500z" fill="#eef2fa" stroke="#2b3548" stroke-width="1.500"/>
<path d="M1557 629.5h18" stroke="#eef1f5"/><path d="M1557 628.5h18" stroke="#7a828d"/>
<path d="M1562 647c-3-1-3-6 1-6l6 1" fill="none" stroke="#2b3548" stroke-width="1.300"/><path d="M1565 648l8-8" stroke="#f0a830" stroke-width="3.200"/><rect x="1559.5" y="646.5" width="3" height="3" fill="#fff" stroke="#3a6fc4" stroke-width=".9"/>
<path d="M1560 673c1-6 4-9 11-12" fill="none" stroke="#2b3548" stroke-width="2.400"/><path d="M1566 670l8-8" stroke="#f0a830" stroke-width="3"/>
<path d="M1560 695l4.500-12 4.500 12M1562 691h5.500" fill="none" stroke="#2f5fb0" stroke-width="2.200"/><path d="M1567 693l7-7" stroke="#f0a830" stroke-width="3"/>
<path d="M1557 703.5h18" stroke="#eef1f5"/><path d="M1557 702.5h18" stroke="#7a828d"/>
<path d="M1563 716l9 9" stroke="#d81e1e" stroke-width="4.500" stroke-linecap="round"/><path d="M1559 713l5-1.500 1.500 4-4 2.500z" fill="#f4c020"/>
<path d="M1562 740l9 9" stroke="#d81e1e" stroke-width="4.500" stroke-linecap="round"/><path d="M1558 737l5-1.500 1.500 4-4 2.500z" fill="#f4c020"/><circle cx="1571" cy="736" r="3.500" fill="#18a050"/><path d="M1569 736h4M1571 734v4" stroke="#fff"/>
<path d="M1557 756.0h18" stroke="#eef1f5"/><path d="M1557 755.0h18" stroke="#7a828d"/>
<rect x="1559.500" y="767.500" width="8" height="8" fill="none" stroke="#9aa4a0"/><rect x="1564.500" y="763.500" width="9" height="9" fill="#a8b8b0" stroke="#1e8a3c"/>
<rect x="1566" y="785" width="8" height="6" fill="#444"/><path d="M1560 790h6v8h-6z" fill="#dde" stroke="#1d5fa8"/><path d="M1561 797l6-7" stroke="#d22"/>
<rect x="1557.500" y="805.500" width="19" height="17" fill="#c9dcf4" stroke="#7da2ce"/><rect x="1560.500" y="807.500" width="13" height="13" fill="#fff" stroke="#345"/><rect x="1560.500" y="807.500" width="13" height="2.500" fill="#1d5fa8"/><path d="M1562.500 813.500h2M1566 813.500h6M1562.500 817.500h2M1566 817.500h6" stroke="#345"/></svg>
<div id="cmd" style="left:1px;top:903px;width:1578px;height:114px;background:#a0a0a0">
<div style="left:19px;top:0;width:1559px;height:114px;background:#696969"></div>
<div style="left:21px;top:1px;width:1556px;height:112px;background:#fff"></div>
<svg style="left:5px;top:5px" width="14" height="32"><path d="M1.500 1.500l8 8M9.500 1.500l-8 8" stroke="#555" stroke-width="1.200" fill="none"/><path d="M1.500 26h9l-4.500 5z" fill="#666"/></svg>
<pre style="position:absolute;left:22.500px;top:16px;font-family:'Liberation Mono',monospace;font-size:13.330px;line-height:14px;color:#000;margin:0" id="cmdtxt">Command: _OPEN
File Version: R27 (2013) release
Command: 
Command: &lt;Switching to: Model&gt;</pre>
<div style="left:21px;top:92px;width:1540px;height:1px;background:#6a6a6a"></div>
<div style="left:1560px;top:1px;width:17px;height:91px;background:#f0f0f0"></div>
<svg style="left:1560px;top:1px" width="17" height="91"><path d="M4.500 11l4-4 4 4M4.500 80l4 4 4-4" stroke="#8a8a8a" stroke-width="1.200" fill="none"/></svg>
<div style="left:25px;top:95px;font-family:'Liberation Mono',monospace;font-size:12px;line-height:14px;color:#000;white-space:pre" id="cmdin">Command:</div>
</div>
<style>#status span{top:5px;color:#fff;font-size:12px;line-height:14px;white-space:nowrap}
#status u{position:absolute;top:2px;width:1px;height:19px;background:#1c1c1c;border-right:1px solid #585858;box-sizing:content-box;text-decoration:none}</style>
<div id="status" style="left:1px;top:1017px;width:1579px;height:22px;background:linear-gradient(#4a4c58 0,#40424e 4%,#3e404b 33%,#333 36%,#323232 100%)">
<svg style="left:-1px;top:-1017px" width="1580" height="1040" viewBox="0 0 1580 1040">
<g fill="#5c5c5c"><rect x="1188" y="1019" width="19" height="19"/><rect x="1209" y="1019" width="19" height="19"/><rect x="1319" y="1019" width="19" height="19"/><rect x="1341" y="1019" width="19" height="19"/></g>
<path d="M1155.500 1021v7l-5 5M1155.500 1028l5 5" stroke="#fff" stroke-width="2" fill="none"/>
<path d="M1194.500 1021v7l-4.500 5M1194.500 1028l4.500 5" stroke="#fff" stroke-width="1.800" fill="none"/><circle cx="1200" cy="1027" r="4.500" fill="#f8f090" stroke="#c8b830"/><rect x="1198.500" y="1031" width="3" height="3" fill="#999"/>
<path d="M1215.500 1021v7l-4.500 5M1215.500 1028l4.500 5" stroke="#fff" stroke-width="1.800" fill="none"/><path d="M1224 1020l-5 7h3l-2 6 6-8h-3l2.500-5z" fill="#f2a020"/>
<g stroke="#c8c8c8" stroke-width="1" fill="none"><path d="M1232.500 1020v17M1236.500 1020v17M1240.500 1020v17M1244.500 1020v17M1248.500 1020v17M1232 1020.500h17M1232 1024.500h17M1232 1028.500h17M1232 1032.500h17M1232 1036.500h17"/></g><path d="M1233 1030.500h11M1238.500 1025v11" stroke="#e02020" stroke-width="1.200"/><rect x="1236.500" y="1028.500" width="4" height="4" fill="none" stroke="#e02020"/>
<g stroke="#a0a0a0" stroke-width="1" fill="none"><path d="M1255.500 1020v17M1259.500 1020v17M1263.500 1020v17M1267.500 1020v17M1271.500 1020v17M1255 1020.500h17M1255 1024.500h17M1255 1028.500h17M1255 1032.500h17M1255 1036.500h17"/></g>
<path d="M1279.500 1020v14" stroke="#20a040" stroke-width="1.400"/><path d="M1279 1034.500h14" stroke="#e02020" stroke-width="1.400"/><path d="M1281 1028.500h6v6" stroke="#fff" stroke-width="1.400" fill="none"/>
<circle cx="1307" cy="1028.500" r="7.500" stroke="#d8d8d8" stroke-width="1.600" fill="none"/><path d="M1307 1028.500l7-6M1307 1028.500h8" stroke="#e02020" stroke-width="1.300"/>
<path d="M1321 1027.500h16M1328.500 1020v17" stroke="#fff" stroke-width="1.600"/><rect x="1326.500" y="1025.500" width="4" height="4" fill="none" stroke="#e02020" stroke-width="1.200"/>
<path d="M1343 1036.500h15M1357.500 1021v16M1343 1036l14-14" stroke="#fff" stroke-width="1.400" fill="none"/>
<path d="M1365 1028.500h16M1373 1020.500v16" stroke="#fff" stroke-width="2"/>
<circle cx="1480" cy="1028.500" r="5.500" fill="none" stroke="#2a8ae8" stroke-width="3.500"/><path d="M1480 1020v17M1471.500 1028.500h17M1474 1022.500l12 12M1486 1022.500l-12 12" stroke="#2a8ae8" stroke-width="2.600"/><circle cx="1480" cy="1028.500" r="2.500" fill="#333"/>
<rect x="1495.500" y="1023.500" width="9" height="6" fill="#fff" stroke="#ddd"/><rect x="1499.500" y="1027.500" width="10" height="7" fill="#fff" stroke="#1a3a6a"/><rect x="1500" y="1028" width="9" height="2" fill="#1a3a6a"/>
<circle cx="1524" cy="1028.500" r="7.500" fill="#e8e8e8" stroke="#fff" stroke-width="1.500"/><path d="M1520 1033l7-8" stroke="#2a7ad8" stroke-width="2.200"/>
<rect x="1538.500" y="1023.500" width="14" height="10" fill="#f8d070" stroke="#e8a020"/><path d="M1538.500 1023.500l7 6 7-6M1538.500 1033.500l5-5M1552.500 1033.500l-5-5" stroke="#e8a020" fill="none"/>
<path d="M1572 1037l5-5M1575 1037l2-2M1569 1037l8-8" stroke="#888" stroke-dasharray="1 1"/>
</svg>
<u style="left:906px"></u><u style="left:915px"></u><span style="left:920px;letter-spacing:-0.633px" id="coords">18661.8983,136849.4264,0.0000</span>
<u style="left:1095px"></u><span style="left:1100px;letter-spacing:-0.779px">OpenGL</span><u style="left:1143px"></u><span style="left:1167.600px;letter-spacing:-0.896px">1:1</span><u style="left:1184px"></u>
<span style="left:1386.500px;letter-spacing:-1.197px">MODEL</span><u style="left:1426px"></u><span style="left:1430px;color:#7d8288;letter-spacing:-1.745px">TABLET</span><u style="left:1467px"></u><u style="left:1562px"></u>
</div>
<div style="left:0;top:0;width:1580px;height:1px;background:#1883d7;z-index:50"></div>
<div style="left:0;top:0;width:1px;height:1040px;background:#1883d7;z-index:50"></div>
<div style="left:0;top:1039px;width:1580px;height:1px;background:#1883d7;z-index:50"></div>
</div>
<div id="turbo" style="left:1580px;top:0;width:340px;height:1040px;background:#292d32;overflow:hidden;font-family:'Liberation Sans',sans-serif">
<div style="left:0;top:0;width:340px;height:50px;background:#c3293a;overflow:hidden">
 <svg width="340" height="50" viewBox="0 0 340 50"><polygon points="40,0 110,0 160,50 90,50" fill="#c93748" opacity=".55"/><polygon points="150,0 215,0 260,50 195,50" fill="#cc3a4b" opacity=".6"/><polygon points="240,0 300,0 340,44 340,50 285,50" fill="#cb3a4a" opacity=".55"/><polygon points="262,0 340,0 340,10 272,10" fill="#cf4050" opacity=".5"/>
 <polygon points="20,10.5 26.5,10.5 36,38.5 29.5,38.5" fill="#fff"/><polygon points="30,10.5 36.5,10.5 46,38.5 39.5,38.5" fill="#fff"/><polygon points="40,10.5 46.5,10.5 56,38.5 49.5,38.5" fill="#fff"/>
 <path d="M307.5 19.5 L318.5 30.5 M318.5 19.5 L307.5 30.5" stroke="#fff" stroke-width="1.8" fill="none"/></svg>
 <div style="left:77.5px;top:12px;font-weight:bold;color:#fff;line-height:26px;white-space:nowrap;font-size:20px;font-weight:bold;letter-spacing:-0.393px" id="tbt">Turbo.net</div>
</div>
<div style="left:170px;top:50px;width:170px;height:49px;background:#1d2025"></div>
<div style="left:38px;top:66px;color:#f0f0f0;line-height:18px;white-space:nowrap;font-size:14px;letter-spacing:-0.285px" id="myapp">My Applications</div>
<div style="left:225px;top:66px;color:#f0f0f0;line-height:18px;white-space:nowrap;font-size:14px;letter-spacing:-0.566px" id="brall">Browse All</div>
<div style="left:20px;top:120px;width:300px;height:50px;border-radius:3px;background:#1c1f24"></div>
<div style="left:36px;top:135px;width:1px;height:23px;background:#c8c8c8"></div>
<div style="left:37px;top:136px;font-style:italic;color:#596069;line-height:20px;white-space:nowrap;font-size:16px;font-style:italic;letter-spacing:-0.32px" id="srch">Search or type command</div>
<div style="left:0;top:189px;width:340px;height:71px;background:#2e3237"></div>
<div style="left:21px;top:194px;width:62px;height:62px;border-radius:2px;background:#808080"></div>
<svg style="left:21px;top:194px" width="62" height="62" viewBox="0 0 62 62"><polygon points="20,14 41,12 41,47 20,45" fill="#f2f1ee"/><polygon points="41,12 43,14 43,49 41,47" fill="#9a9a9a"/><polygon points="20,45 41,47 43,49 22,47" fill="#b8b8b8"/><rect x="35" y="15" width="5" height="8" fill="#8a2a9a"/><rect x="23" y="24" width="15" height="11" fill="#e3dccb"/><rect x="26" y="27" width="3" height="3" fill="#7a86a8"/></svg>
<div style="left:103px;top:209px;color:#f4f4f4;line-height:22px;white-space:nowrap;font-size:16px;letter-spacing:-0.396px" id="appt">CMS IntelliCAD PE 8.2.9...</div>
<div style="left:103px;top:230px;color:#9aa0a6;line-height:14px;white-space:nowrap;font-size:11px;letter-spacing:-0.066px" id="apps">uscloud.intellicadms.com</div>
<svg style="left:307px;top:218px" width="15" height="15" viewBox="0 0 24 24"><polygon points="12,1.5 15.2,8.6 23,9.5 17.2,14.8 18.8,22.5 12,18.6 5.2,22.5 6.8,14.8 1,9.5 8.8,8.6" fill="#fff"/></svg>
<div style="left:0;top:1008px;width:340px;height:1px;background:#30343a"></div>
<div style="left:21px;top:1018px;color:#f0f0f0;line-height:16px;white-space:nowrap;font-size:12.5px;letter-spacing:-0.402px" id="myf">My Files (0% of 1MB used)</div>
<div style="left:276px;top:1018px;color:#f0f0f0;line-height:16px;white-space:nowrap;font-size:12.5px;letter-spacing:-0.271px" id="sett">Settings</div>
</div>

</body></html>
